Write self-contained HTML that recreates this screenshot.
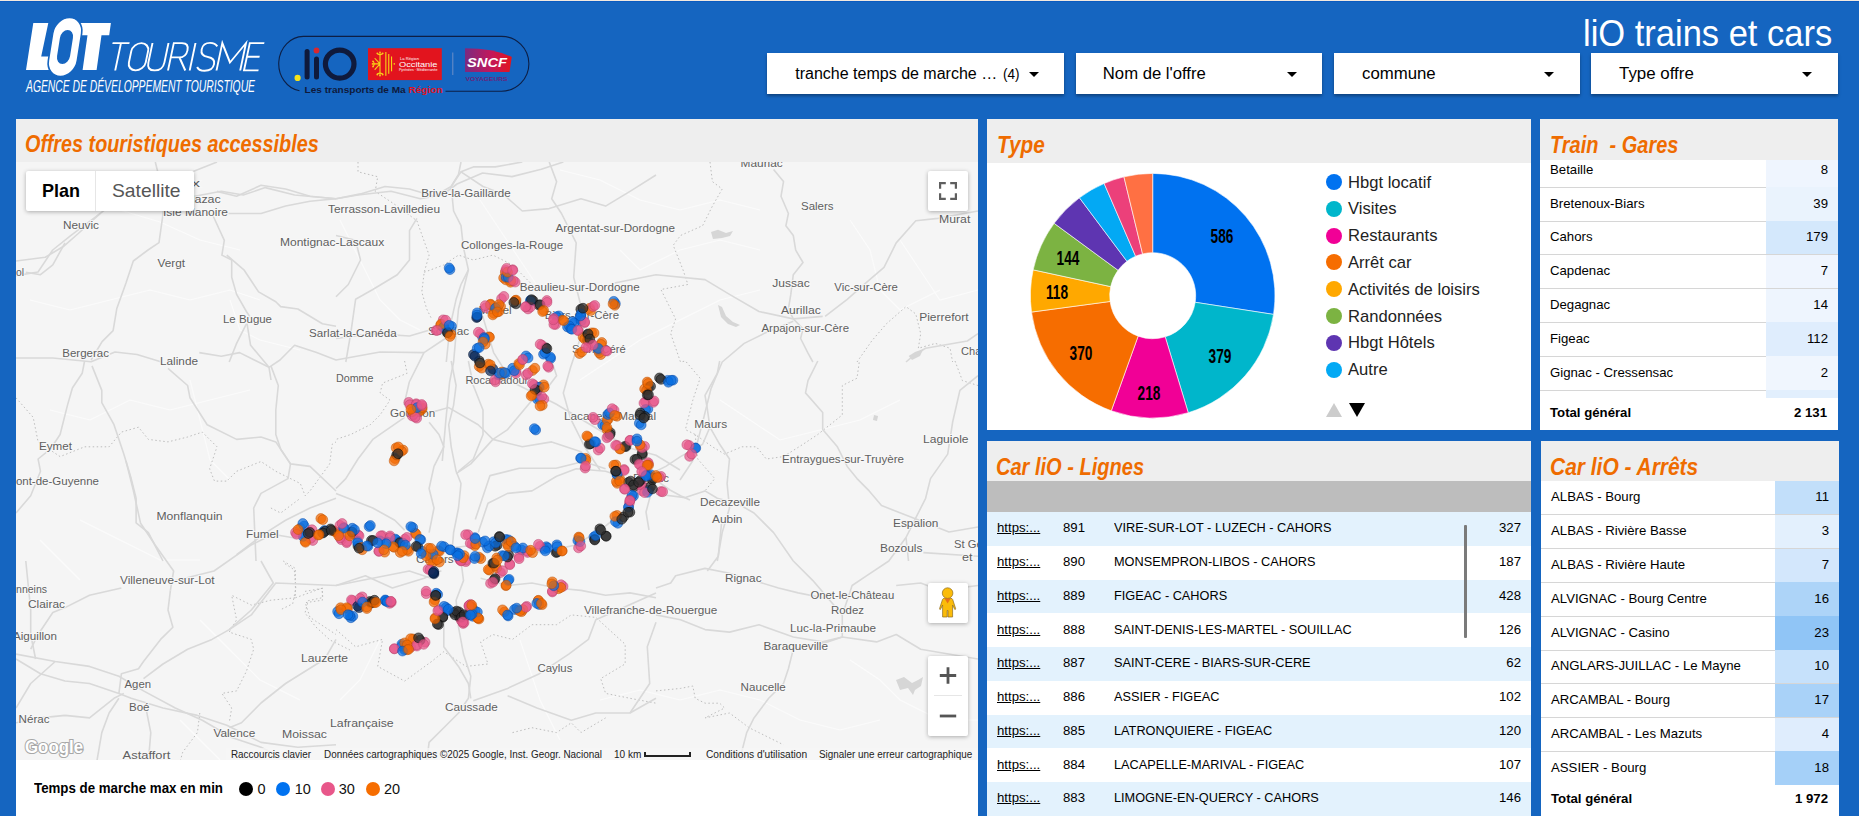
<!DOCTYPE html><html><head><meta charset="utf-8"><style>
*{margin:0;padding:0;box-sizing:border-box}
html,body{width:1859px;height:816px;overflow:hidden}
body{background:#1565c0;font-family:"Liberation Sans", sans-serif;position:relative;color:#000}
.a{position:absolute}
.topline{left:0;top:0;width:1859px;height:1px;background:#f2e9df}
.filt{position:absolute;top:53px;height:41px;background:#fff;box-shadow:0 2px 3px rgba(0,0,0,.35)}
.filt span{position:absolute;white-space:nowrap;line-height:1}
.arr{position:absolute;top:72px;width:0;height:0;border-left:5px solid transparent;border-right:5px solid transparent;border-top:5px solid #000}
.panel{position:absolute;background:#fff;overflow:hidden}
.phead{position:absolute;left:0;top:0;right:0;background:#eeeeee}
.ptitle{position:absolute;white-space:nowrap;color:#ef6c00;font-weight:bold;font-style:italic;line-height:1;transform-origin:0 0}
.t{position:absolute;white-space:nowrap;line-height:1;font-size:13.2px;color:#000}
.num{text-align:right}
.hl{position:absolute;height:1px;background:#d6d6d6}
.lbl{position:absolute;white-space:nowrap;line-height:1;transform-origin:0 0}
</style></head><body>
<div class="a topline"></div><div class="a" style="left:0;top:1px;width:1859px;height:1px;background:#0b5bc0"></div>

<svg class="a" style="left:0;top:0" width="560" height="110" viewBox="0 0 560 110">
<g fill="#fff">
<path d="M33.3,23.1 L48.3,23.1 L41.2,56.6 L56,56.6 L54.2,69.9 L26,69.9 Z"/>
<path d="M80,23.1 L110.9,23.1 L109.2,35.2 L101.5,35.2 L96.6,69.9 L82.6,69.9 L87.5,35.2 L78.3,35.2 Z"/>
</g>
<g transform="translate(65,47) skewX(-9)">
<rect x="-14.5" y="-29.5" width="29" height="59" rx="14.5" ry="16" fill="#fff" stroke="#1565c0" stroke-width="1.6"/>
<rect x="-6.5" y="-17" width="13" height="34" rx="6.5" ry="8" fill="#1565c0"/>
</g>
<g fill="none" stroke="#fff" stroke-width="1.9" stroke-linejoin="miter" transform="translate(0,0)">
<!-- TOURISME thin italic, cap height 43->70.4 -->
<g transform="translate(106.7,70.4) skewX(-12)">
<path d="M0,-27.3 H17 M8.5,-27.3 V0"/>
<rect x="20.5" y="-27.3" width="16.8" height="27.3" rx="8.4" ry="8"/>
<path d="M40,-27.3 V-8 Q40,0 48,0 Q56,0 56,-8 V-27.3"/>
<path d="M61.3,0 V-27.3 H69.5 Q76.5,-27.3 76.5,-20 Q76.5,-13 69.5,-13 H61.3 M70,-13 L78.6,0"/>
<path d="M83,-27.3 V0"/>
<path d="M105.5,-24 Q102.5,-27.5 97.5,-27.5 Q90.5,-27.5 90.5,-21 Q90.5,-15 98,-13.5 Q106,-12 106,-6.5 Q106,0.3 98,0.3 Q92,0.3 89.7,-3.5"/>
<path d="M109.8,0 V-27.3 L121.6,-8 L133.5,-27.3 V0"/>
<path d="M151.8,-27.3 H137.3 V0 H151.8 M137.3,-13.6 H150"/>
</g>
</g>
<text x="26" y="91.7" fill="#fff" font-family="Liberation Sans" font-style="italic" font-size="16" textLength="229" lengthAdjust="spacingAndGlyphs">AGENCE DE DÉVELOPPEMENT TOURISTIQUE</text>
<!-- pill -->
<path d="M445.5,91.2 H501.5 A27.4,27.4 0 0 0 501.5,36.4 H303.3 A25,27.4 0 0 0 299.5,90.8" fill="none" stroke="#0d1f45" stroke-width="1.1"/>
<circle cx="297.6" cy="77.9" r="3.1" fill="#f3e21b"/>
<rect x="304.6" y="48.9" width="5" height="30.5" rx="2.5" fill="#0f1a3c"/>
<rect x="314" y="56.5" width="5" height="23" rx="2.5" fill="#0f1a3c"/>
<circle cx="316.5" cy="50.5" r="2.9" fill="#d8282f"/>
<ellipse cx="339.7" cy="64.1" rx="14.3" ry="14" fill="none" stroke="#0f1a3c" stroke-width="5.2"/>
<rect x="368" y="48.2" width="73.8" height="31.9" fill="#e2141e"/>
<g stroke="#f7d117" stroke-width="1.1" fill="none" stroke-linecap="round">
<path d="M380,63.9 H373.5 M380,63.9 V53.5 M380,63.9 V74.3 M380,63.9 L375,58.5 M380,63.9 L375,69.3"/>
<path d="M373.5,61.5 Q375,63.9 373.5,66.3 M377.5,53.8 Q380,55.5 382.5,53.8 M377.5,74 Q380,72.3 382.5,74"/>
</g>
<g fill="#f7d117"><circle cx="373" cy="61.3" r="0.9"/><circle cx="372.6" cy="63.9" r="0.9"/><circle cx="373" cy="66.5" r="0.9"/>
<circle cx="377.3" cy="53.3" r="0.9"/><circle cx="380" cy="52.3" r="0.9"/><circle cx="382.7" cy="53.3" r="0.9"/>
<circle cx="377.3" cy="74.5" r="0.9"/><circle cx="380" cy="75.5" r="0.9"/><circle cx="382.7" cy="74.5" r="0.9"/>
<rect x="385.3" y="52" width="1.1" height="23.8"/><rect x="388.2" y="54" width="1.1" height="19.8"/><rect x="391" y="56.5" width="1.1" height="14.8"/><circle cx="394.3" cy="63.9" r="0.8"/></g>
<text x="400" y="60.3" fill="#fff" font-family="Liberation Sans" font-size="4.3" textLength="19" lengthAdjust="spacingAndGlyphs">La Région</text>
<text x="399" y="67" fill="#fff" font-family="Liberation Sans" font-size="7.6" textLength="38.4" lengthAdjust="spacingAndGlyphs">Occitanie</text>
<text x="399" y="71.3" fill="#fff" font-family="Liberation Sans" font-size="3.3" textLength="38.4" lengthAdjust="spacingAndGlyphs">Pyrénées · Méditerranée</text>
<rect x="452.3" y="52.5" width="1" height="22.5" fill="#6d8fc8"/>
<defs><linearGradient id="sg" x1="0" x2="1" y1="0" y2="0"><stop offset="0" stop-color="#7b2a80"/><stop offset="0.55" stop-color="#c2185b"/><stop offset="1" stop-color="#e3151c"/></linearGradient></defs>
<path d="M465,48.2 Q495,48.5 511.8,57 L509.5,72.1 H465 Z" fill="url(#sg)"/>
<text x="467" y="67" fill="#fff" font-family="Liberation Sans" font-weight="bold" font-style="italic" font-size="12" textLength="40" lengthAdjust="spacingAndGlyphs">SNCF</text>
<text x="465.5" y="80.5" fill="#6a1f7a" font-family="Liberation Sans" font-weight="bold" font-size="5.6" textLength="42" lengthAdjust="spacingAndGlyphs">VOYAGEURS</text>
<text x="304.6" y="92.8" fill="#0f1a3c" font-family="Liberation Sans" font-weight="bold" font-size="9.2" textLength="138" lengthAdjust="spacingAndGlyphs">Les transports de Ma <tspan fill="#e2141e">Région</tspan></text>
</svg>

<div class="lbl" style="left:1583px;top:15.5px;font-size:36px;color:#fff;transform:scaleX(0.958)">liO trains et cars</div>
<div class="filt" style="left:767px;width:297px"></div>
<div class="lbl" style="left:795.3px;top:66.4px;font-size:16px;color:#000">tranche temps de marche …</div>
<div class="arr" style="left:1029px"></div>
<div class="filt" style="left:1076px;width:246px"></div>
<div class="lbl" style="left:1102.8px;top:65.8px;font-size:16.7px;color:#000">Nom de l'offre</div>
<div class="arr" style="left:1287px"></div>
<div class="filt" style="left:1334px;width:246px"></div>
<div class="lbl" style="left:1362px;top:65.7px;font-size:16.8px;color:#000">commune</div>
<div class="arr" style="left:1544px"></div>
<div class="filt" style="left:1591px;width:247px"></div>
<div class="lbl" style="left:1619px;top:65.6px;font-size:16.9px;color:#000">Type offre</div>
<div class="arr" style="left:1802px"></div>
<div class="lbl" style="left:1003.3px;top:66px;font-size:15px;color:#000;transform:scaleX(0.9);transform-origin:0 0">(4)</div>
<div class="panel" style="left:987px;top:119px;width:544px;height:311px"><div class="phead" style="height:44px"></div></div>
<div class="ptitle" style="left:996.5px;top:132.5px;font-size:24.5px;transform:scaleX(0.848)">Type</div>
<svg class="a" style="left:1020px;top:165px" width="270" height="265" viewBox="1020 165 270 265"><path d="M1152.70,173.40 A122.3,122.3 0 0 1 1273.56,314.41 L1195.19,302.28 A43,43 0 0 0 1152.70,252.70 Z" fill="#0072f0" stroke="#fff" stroke-width="0.6"/><path d="M1273.56,314.41 A122.3,122.3 0 0 1 1188.25,412.72 L1165.20,336.84 A43,43 0 0 0 1195.19,302.28 Z" fill="#00b6cb" stroke="#fff" stroke-width="0.6"/><path d="M1188.25,412.72 A122.3,122.3 0 0 1 1111.27,410.77 L1138.13,336.16 A43,43 0 0 0 1165.20,336.84 Z" fill="#f10096" stroke="#fff" stroke-width="0.6"/><path d="M1111.27,410.77 A122.3,122.3 0 0 1 1031.50,312.09 L1110.09,301.46 A43,43 0 0 0 1138.13,336.16 Z" fill="#f66d00" stroke="#fff" stroke-width="0.6"/><path d="M1031.50,312.09 A122.3,122.3 0 0 1 1033.16,269.85 L1110.67,286.61 A43,43 0 0 0 1110.09,301.46 Z" fill="#ffa800" stroke="#fff" stroke-width="0.6"/><path d="M1033.16,269.85 A122.3,122.3 0 0 1 1054.13,223.30 L1118.05,270.24 A43,43 0 0 0 1110.67,286.61 Z" fill="#7cb342" stroke="#fff" stroke-width="0.6"/><path d="M1054.13,223.30 A122.3,122.3 0 0 1 1079.44,197.77 L1126.94,261.27 A43,43 0 0 0 1118.05,270.24 Z" fill="#5e35b1" stroke="#fff" stroke-width="0.6"/><path d="M1079.44,197.77 A122.3,122.3 0 0 1 1104.13,183.46 L1135.62,256.24 A43,43 0 0 0 1126.94,261.27 Z" fill="#03a9f4" stroke="#fff" stroke-width="0.6"/><path d="M1104.13,183.46 A122.3,122.3 0 0 1 1123.94,176.83 L1142.59,253.91 A43,43 0 0 0 1135.62,256.24 Z" fill="#ec407a" stroke="#fff" stroke-width="0.6"/><path d="M1123.94,176.83 A122.3,122.3 0 0 1 1152.70,173.40 L1152.70,252.70 A43,43 0 0 0 1142.59,253.91 Z" fill="#ff7043" stroke="#fff" stroke-width="0.6"/></svg>
<div class="lbl" style="left:1222px;top:236.8px;font-size:19.5px;font-weight:bold;color:#000;transform:translate(-50%,-50%) scaleX(0.70);transform-origin:50% 50%">586</div>
<div class="lbl" style="left:1220px;top:357px;font-size:19.5px;font-weight:bold;color:#000;transform:translate(-50%,-50%) scaleX(0.70);transform-origin:50% 50%">379</div>
<div class="lbl" style="left:1149px;top:393.8px;font-size:19.5px;font-weight:bold;color:#000;transform:translate(-50%,-50%) scaleX(0.70);transform-origin:50% 50%">218</div>
<div class="lbl" style="left:1080.5px;top:353.8px;font-size:19.5px;font-weight:bold;color:#000;transform:translate(-50%,-50%) scaleX(0.70);transform-origin:50% 50%">370</div>
<div class="lbl" style="left:1057px;top:292.8px;font-size:19.5px;font-weight:bold;color:#000;transform:translate(-50%,-50%) scaleX(0.70);transform-origin:50% 50%">118</div>
<div class="lbl" style="left:1068px;top:258.8px;font-size:19.5px;font-weight:bold;color:#000;transform:translate(-50%,-50%) scaleX(0.70);transform-origin:50% 50%">144</div>
<div class="a" style="left:1326px;top:174.0px;width:16px;height:16px;border-radius:50%;background:#0072f0"></div>
<div class="lbl" style="left:1348px;top:174.5px;font-size:16.6px;color:#222">Hbgt locatif</div>
<div class="a" style="left:1326px;top:200.8px;width:16px;height:16px;border-radius:50%;background:#00b6cb"></div>
<div class="lbl" style="left:1348px;top:201.3px;font-size:16.6px;color:#222">Visites</div>
<div class="a" style="left:1326px;top:227.6px;width:16px;height:16px;border-radius:50%;background:#f10096"></div>
<div class="lbl" style="left:1348px;top:228.1px;font-size:16.6px;color:#222">Restaurants</div>
<div class="a" style="left:1326px;top:254.4px;width:16px;height:16px;border-radius:50%;background:#f66d00"></div>
<div class="lbl" style="left:1348px;top:254.9px;font-size:16.6px;color:#222">Arrêt car</div>
<div class="a" style="left:1326px;top:281.2px;width:16px;height:16px;border-radius:50%;background:#ffa800"></div>
<div class="lbl" style="left:1348px;top:281.7px;font-size:16.6px;color:#222">Activités de loisirs</div>
<div class="a" style="left:1326px;top:308.0px;width:16px;height:16px;border-radius:50%;background:#7cb342"></div>
<div class="lbl" style="left:1348px;top:308.5px;font-size:16.6px;color:#222">Randonnées</div>
<div class="a" style="left:1326px;top:334.8px;width:16px;height:16px;border-radius:50%;background:#5e35b1"></div>
<div class="lbl" style="left:1348px;top:335.3px;font-size:16.6px;color:#222">Hbgt Hôtels</div>
<div class="a" style="left:1326px;top:361.6px;width:16px;height:16px;border-radius:50%;background:#03a9f4"></div>
<div class="lbl" style="left:1348px;top:362.1px;font-size:16.6px;color:#222">Autre</div>
<div class="a" style="left:1326px;top:403px;width:0;height:0;border-left:8px solid transparent;border-right:8px solid transparent;border-bottom:14px solid #ccc"></div>
<div class="a" style="left:1349px;top:403px;width:0;height:0;border-left:8px solid transparent;border-right:8px solid transparent;border-top:14px solid #000"></div>
<div class="panel" style="left:1540px;top:119px;width:298px;height:311px">
<div class="a" style="left:226px;top:34.4px;width:72px;height:33.8px;background:rgb(239,245,254)"></div>
<div class="t" style="left:10px;top:43.8px">Betaille</div>
<div class="t num" style="right:10px;top:43.8px">8</div>
<div class="hl" style="left:0;top:67.7px;width:298px"></div>
<div class="a" style="left:226px;top:68.2px;width:72px;height:33.8px;background:rgb(234,243,253)"></div>
<div class="t" style="left:10px;top:77.6px">Bretenoux-Biars</div>
<div class="t num" style="right:10px;top:77.6px">39</div>
<div class="hl" style="left:0;top:101.5px;width:298px"></div>
<div class="a" style="left:226px;top:102.0px;width:72px;height:33.8px;background:rgb(212,232,252)"></div>
<div class="t" style="left:10px;top:111.4px">Cahors</div>
<div class="t num" style="right:10px;top:111.4px">179</div>
<div class="hl" style="left:0;top:135.3px;width:298px"></div>
<div class="a" style="left:226px;top:135.8px;width:72px;height:33.8px;background:rgb(239,245,254)"></div>
<div class="t" style="left:10px;top:145.2px">Capdenac</div>
<div class="t num" style="right:10px;top:145.2px">7</div>
<div class="hl" style="left:0;top:169.1px;width:298px"></div>
<div class="a" style="left:226px;top:169.6px;width:72px;height:33.8px;background:rgb(238,245,254)"></div>
<div class="t" style="left:10px;top:179.0px">Degagnac</div>
<div class="t num" style="right:10px;top:179.0px">14</div>
<div class="hl" style="left:0;top:202.9px;width:298px"></div>
<div class="a" style="left:226px;top:203.4px;width:72px;height:33.8px;background:rgb(223,237,253)"></div>
<div class="t" style="left:10px;top:212.8px">Figeac</div>
<div class="t num" style="right:10px;top:212.8px">112</div>
<div class="hl" style="left:0;top:236.7px;width:298px"></div>
<div class="a" style="left:226px;top:237.2px;width:72px;height:33.8px;background:rgb(240,246,254)"></div>
<div class="t" style="left:10px;top:246.6px">Gignac - Cressensac</div>
<div class="t num" style="right:10px;top:246.6px">2</div>
<div class="hl" style="left:0;top:270.5px;width:298px"></div>
<div class="a" style="left:226px;top:271.0px;width:72px;height:33.8px;background:rgb(226,239,253)"></div>
<div class="phead" style="height:41px"></div>
<div class="a" style="left:0;top:278.6px;width:298px;height:40px;background:#fff"></div>
<div class="t" style="left:10px;top:287px;font-weight:bold">Total général</div>
<div class="t num" style="right:11px;top:287px;font-weight:bold">2 131</div>
</div>
<div class="ptitle" style="left:1549.5px;top:132.5px;font-size:24.5px;transform:scaleX(0.815)">Train&nbsp; - Gares</div>
<div class="panel" style="left:987px;top:441px;width:544px;height:380px">
<div class="phead" style="height:40px"></div>
<div class="a" style="left:0;top:40px;width:544px;height:31px;background:#bdbdbd"></div>
<div class="a" style="left:0;top:71.00px;width:544px;height:33.75px;background:#e3f2fd"></div>
<div class="t" style="left:10px;top:80.4px;text-decoration:underline">https:...</div>
<div class="t" style="left:76px;top:80.4px">891</div>
<div class="t" style="left:127px;top:80.4px;transform:scaleX(0.965);transform-origin:0 0">VIRE-SUR-LOT - LUZECH - CAHORS</div>
<div class="t num" style="right:10px;top:80.4px">327</div>
<div class="a" style="left:0;top:104.75px;width:544px;height:33.75px;background:#fff"></div>
<div class="t" style="left:10px;top:114.2px;text-decoration:underline">https:...</div>
<div class="t" style="left:76px;top:114.2px">890</div>
<div class="t" style="left:127px;top:114.2px;transform:scaleX(0.965);transform-origin:0 0">MONSEMPRON-LIBOS - CAHORS</div>
<div class="t num" style="right:10px;top:114.2px">187</div>
<div class="a" style="left:0;top:138.50px;width:544px;height:33.75px;background:#e3f2fd"></div>
<div class="t" style="left:10px;top:147.9px;text-decoration:underline">https:...</div>
<div class="t" style="left:76px;top:147.9px">889</div>
<div class="t" style="left:127px;top:147.9px;transform:scaleX(0.965);transform-origin:0 0">FIGEAC - CAHORS</div>
<div class="t num" style="right:10px;top:147.9px">428</div>
<div class="a" style="left:0;top:172.25px;width:544px;height:33.75px;background:#fff"></div>
<div class="t" style="left:10px;top:181.7px;text-decoration:underline">https:...</div>
<div class="t" style="left:76px;top:181.7px">888</div>
<div class="t" style="left:127px;top:181.7px;transform:scaleX(0.965);transform-origin:0 0">SAINT-DENIS-LES-MARTEL - SOUILLAC</div>
<div class="t num" style="right:10px;top:181.7px">126</div>
<div class="a" style="left:0;top:206.00px;width:544px;height:33.75px;background:#e3f2fd"></div>
<div class="t" style="left:10px;top:215.4px;text-decoration:underline">https:...</div>
<div class="t" style="left:76px;top:215.4px">887</div>
<div class="t" style="left:127px;top:215.4px;transform:scaleX(0.965);transform-origin:0 0">SAINT-CERE - BIARS-SUR-CERE</div>
<div class="t num" style="right:10px;top:215.4px">62</div>
<div class="a" style="left:0;top:239.75px;width:544px;height:33.75px;background:#fff"></div>
<div class="t" style="left:10px;top:249.1px;text-decoration:underline">https:...</div>
<div class="t" style="left:76px;top:249.1px">886</div>
<div class="t" style="left:127px;top:249.1px;transform:scaleX(0.965);transform-origin:0 0">ASSIER - FIGEAC</div>
<div class="t num" style="right:10px;top:249.1px">102</div>
<div class="a" style="left:0;top:273.50px;width:544px;height:33.75px;background:#e3f2fd"></div>
<div class="t" style="left:10px;top:282.9px;text-decoration:underline">https:...</div>
<div class="t" style="left:76px;top:282.9px">885</div>
<div class="t" style="left:127px;top:282.9px;transform:scaleX(0.965);transform-origin:0 0">LATRONQUIERE - FIGEAC</div>
<div class="t num" style="right:10px;top:282.9px">120</div>
<div class="a" style="left:0;top:307.25px;width:544px;height:33.75px;background:#fff"></div>
<div class="t" style="left:10px;top:316.6px;text-decoration:underline">https:...</div>
<div class="t" style="left:76px;top:316.6px">884</div>
<div class="t" style="left:127px;top:316.6px;transform:scaleX(0.965);transform-origin:0 0">LACAPELLE-MARIVAL - FIGEAC</div>
<div class="t num" style="right:10px;top:316.6px">107</div>
<div class="a" style="left:0;top:341.00px;width:544px;height:33.75px;background:#e3f2fd"></div>
<div class="t" style="left:10px;top:350.4px;text-decoration:underline">https:...</div>
<div class="t" style="left:76px;top:350.4px">883</div>
<div class="t" style="left:127px;top:350.4px;transform:scaleX(0.965);transform-origin:0 0">LIMOGNE-EN-QUERCY - CAHORS</div>
<div class="t num" style="right:10px;top:350.4px">146</div>
<div class="a" style="left:476.5px;top:84px;width:3px;height:113px;background:#7a7a7a;border-radius:1px"></div>
</div>
<div class="ptitle" style="left:995.6px;top:454.5px;font-size:24.5px;transform:scaleX(0.818)">Car liO - Lignes</div>
<div class="panel" style="left:1541px;top:441px;width:298px;height:380px">
<div class="phead" style="height:40px"></div>
<div class="a" style="left:234px;top:40.0px;width:64px;height:33.8px;background:rgb(194,223,250)"></div>
<div class="t" style="left:10px;top:49.4px">ALBAS - Bourg</div>
<div class="t num" style="right:10px;top:49.4px">11</div>
<div class="hl" style="left:0;top:73.3px;width:298px"></div>
<div class="a" style="left:234px;top:73.8px;width:64px;height:33.8px;background:rgb(227,240,253)"></div>
<div class="t" style="left:10px;top:83.2px">ALBAS - Rivière Basse</div>
<div class="t num" style="right:10px;top:83.2px">3</div>
<div class="hl" style="left:0;top:107.1px;width:298px"></div>
<div class="a" style="left:234px;top:107.6px;width:64px;height:33.8px;background:rgb(211,231,252)"></div>
<div class="t" style="left:10px;top:117.0px">ALBAS - Rivière Haute</div>
<div class="t num" style="right:10px;top:117.0px">7</div>
<div class="hl" style="left:0;top:140.9px;width:298px"></div>
<div class="a" style="left:234px;top:141.4px;width:64px;height:33.8px;background:rgb(173,212,248)"></div>
<div class="t" style="left:10px;top:150.8px">ALVIGNAC - Bourg Centre</div>
<div class="t num" style="right:10px;top:150.8px">16</div>
<div class="hl" style="left:0;top:174.7px;width:298px"></div>
<div class="a" style="left:234px;top:175.2px;width:64px;height:33.8px;background:rgb(144,197,246)"></div>
<div class="t" style="left:10px;top:184.6px">ALVIGNAC - Casino</div>
<div class="t num" style="right:10px;top:184.6px">23</div>
<div class="hl" style="left:0;top:208.5px;width:298px"></div>
<div class="a" style="left:234px;top:209.0px;width:64px;height:33.8px;background:rgb(198,225,251)"></div>
<div class="t" style="left:10px;top:218.4px">ANGLARS-JUILLAC - Le Mayne</div>
<div class="t num" style="right:10px;top:218.4px">10</div>
<div class="hl" style="left:0;top:242.3px;width:298px"></div>
<div class="a" style="left:234px;top:242.8px;width:64px;height:33.8px;background:rgb(169,210,248)"></div>
<div class="t" style="left:10px;top:252.2px">ARCAMBAL - Bourg</div>
<div class="t num" style="right:10px;top:252.2px">17</div>
<div class="hl" style="left:0;top:276.1px;width:298px"></div>
<div class="a" style="left:234px;top:276.6px;width:64px;height:33.8px;background:rgb(223,237,253)"></div>
<div class="t" style="left:10px;top:286.0px">ARCAMBAL - Les Mazuts</div>
<div class="t num" style="right:10px;top:286.0px">4</div>
<div class="hl" style="left:0;top:309.9px;width:298px"></div>
<div class="a" style="left:234px;top:310.4px;width:64px;height:33.8px;background:rgb(165,208,248)"></div>
<div class="t" style="left:10px;top:319.8px">ASSIER - Bourg</div>
<div class="t num" style="right:10px;top:319.8px">18</div>
<div class="t" style="left:10px;top:351px;font-weight:bold">Total général</div>
<div class="t num" style="right:11px;top:351px;font-weight:bold">1 972</div>
</div>
<div class="ptitle" style="left:1549.5px;top:454.5px;font-size:24.5px;transform:scaleX(0.855)">Car liO - Arrêts</div>
<div class="panel" style="left:16px;top:119px;width:962px;height:700px"><div class="phead" style="height:43px"></div></div>
<div class="ptitle" style="left:25px;top:132.3px;font-size:24.5px;transform:scaleX(0.809)">Offres touristiques accessibles</div>
<svg class="a" style="left:16px;top:162px" width="962" height="598" viewBox="16 162 962 598"><rect x="16" y="162" width="962" height="598" fill="#f5f5f5"/><path d="M40.0,190.0 L80.0,200.0 L120.0,210.0 L160.0,222.0 L200.0,240.0 L240.0,250.0" fill="none" stroke="#fbfbfb" stroke-width="1.1"/><path d="M30.0,300.0 L70.0,310.0 L110.0,300.0 L150.0,290.0 L190.0,300.0 L230.0,290.0 L260.0,300.0" fill="none" stroke="#fbfbfb" stroke-width="1.1"/><path d="M50.0,410.0 L90.0,420.0 L130.0,400.0 L170.0,410.0 L210.0,400.0 L250.0,390.0" fill="none" stroke="#fbfbfb" stroke-width="1.1"/><path d="M190.0,380.0 L200.0,420.0 L210.0,460.0 L230.0,480.0" fill="none" stroke="#fbfbfb" stroke-width="1.1"/><path d="M230.0,300.0 L240.0,330.0 L260.0,340.0 L300.0,350.0" fill="none" stroke="#fbfbfb" stroke-width="1.1"/><path d="M340.0,220.0 L360.0,260.0 L380.0,300.0 L400.0,320.0 L420.0,330.0" fill="none" stroke="#fbfbfb" stroke-width="1.1"/><path d="M480.0,200.0 L500.0,230.0 L520.0,260.0 L540.0,290.0" fill="none" stroke="#fbfbfb" stroke-width="1.1"/><path d="M580.0,380.0 L610.0,360.0 L640.0,340.0 L680.0,320.0 L720.0,300.0 L760.0,290.0" fill="none" stroke="#fbfbfb" stroke-width="1.1"/><path d="M720.0,400.0 L750.0,420.0 L780.0,440.0 L820.0,430.0 L860.0,420.0 L900.0,400.0" fill="none" stroke="#fbfbfb" stroke-width="1.1"/><path d="M850.0,220.0 L870.0,250.0 L880.0,290.0 L900.0,310.0 L940.0,290.0" fill="none" stroke="#fbfbfb" stroke-width="1.1"/><path d="M520.0,640.0 L540.0,700.0 L560.0,740.0" fill="none" stroke="#fbfbfb" stroke-width="1.1"/><path d="M380.0,640.0 L360.0,680.0 L340.0,700.0" fill="none" stroke="#fbfbfb" stroke-width="1.1"/><path d="M600.0,700.0 L640.0,690.0 L680.0,700.0 L720.0,690.0 L760.0,700.0 L800.0,720.0 L840.0,730.0 L880.0,720.0" fill="none" stroke="#fbfbfb" stroke-width="1.1"/><path d="M850.0,660.0 L880.0,680.0 L900.0,700.0 L940.0,720.0 L978.0,720.0" fill="none" stroke="#fbfbfb" stroke-width="1.1"/><path d="M80.0,520.0 L120.0,540.0 L160.0,560.0 L200.0,560.0" fill="none" stroke="#fbfbfb" stroke-width="1.1"/><path d="M40.0,540.0 L60.0,560.0 L80.0,580.0" fill="none" stroke="#fbfbfb" stroke-width="1.1"/><path d="M200.0,620.0 L230.0,650.0 L260.0,680.0 L300.0,700.0" fill="none" stroke="#fbfbfb" stroke-width="1.1"/><path d="M180.0,720.0 L200.0,740.0 L220.0,760.0" fill="none" stroke="#fbfbfb" stroke-width="1.1"/><path d="M560.0,170.0 L600.0,180.0 L640.0,200.0 L680.0,210.0 L720.0,200.0 L760.0,210.0" fill="none" stroke="#fbfbfb" stroke-width="1.1"/><path d="M620.0,250.0 L640.0,270.0 L680.0,250.0 L720.0,240.0 L760.0,250.0" fill="none" stroke="#fbfbfb" stroke-width="1.1"/><path d="M900.0,240.0 L920.0,270.0 L940.0,300.0 L978.0,290.0" fill="none" stroke="#fbfbfb" stroke-width="1.1"/><path d="M656.0,690.9 L680.5,688.4 L692.8,686.0 L695.2,698.3 L705.0,703.2 L719.7,703.2 L724.6,708.0 L705.0,717.9 L729.5,713.0 L749.1,727.7 L758.9,732.6 L783.5,744.8" fill="none" stroke="#bdbdbd" stroke-width="1" stroke-dasharray="1.5,2.5"/><path d="M336.0,629.6 L355.6,646.8 L382.6,639.4 L377.7,666.4 L404.6,681.1 L431.6,661.5 L443.8,651.7 L465.9,666.4 L488.0,664.0 L480.6,641.9 L492.9,634.5 L512.5,639.4 L532.0,624.7 L556.6,624.7 L571.3,614.9 L595.8,617.4 L625.2,644.3 L625.2,663.9 L600.7,678.6 L605.6,693.4 L630.0,698.3 L656.0,703.2" fill="none" stroke="#bdbdbd" stroke-width="1" stroke-dasharray="1.5,2.5"/><path d="M512.5,732.6 L532.0,727.7 L556.6,732.6 L571.3,722.8 L581.0,732.6 L605.6,717.9" fill="none" stroke="#bdbdbd" stroke-width="1" stroke-dasharray="1.5,2.5"/><path d="M283.2,561.0 L295.4,568.4 L295.4,597.8 L270.9,600.2 L251.3,605.1 L231.7,595.3 L236.6,619.8 L229.2,632.1 L251.3,639.4 L253.7,649.2 L246.4,671.3 L236.6,690.9 L221.9,693.4 L231.7,708.0 L229.2,722.8" fill="none" stroke="#bdbdbd" stroke-width="1" stroke-dasharray="1.5,2.5"/><path d="M295.4,597.8 L322.4,588.0 L322.4,600.2 L305.2,602.7 L310.0,617.4 L336.0,634.5" fill="none" stroke="#bdbdbd" stroke-width="1" stroke-dasharray="1.5,2.5"/><path d="M199.8,713.0 L197.4,732.6 L182.7,752.2 L180.2,761.0" fill="none" stroke="#bdbdbd" stroke-width="1" stroke-dasharray="1.5,2.5"/><path d="M404.6,361.0 L407.1,373.3 L382.6,383.1 L380.1,392.9 L390.0,400.2 L380.1,414.9 L370.3,424.7 L350.7,434.5 L336.0,439.4" fill="none" stroke="#bdbdbd" stroke-width="1" stroke-dasharray="1.5,2.5"/><path d="M16.0,397.8 L33.2,417.4 L38.1,441.9 L60.1,456.6 L84.6,446.8 L109.1,446.8 L121.4,432.1 L138.5,427.2 L148.4,439.4 L168.0,441.9 L187.6,437.0 L202.3,432.1 L217.0,446.8 L209.6,468.8 L214.5,481.1 L226.8,481.1 L236.6,471.3 L261.0,461.5 L275.8,471.3 L300.3,483.5 L305.2,495.8 L310.0,490.9 L329.7,463.9 L332.2,444.3 L336.0,441.9" fill="none" stroke="#bdbdbd" stroke-width="1" stroke-dasharray="1.5,2.5"/><path d="M270.9,508.0 L280.7,513.0 L300.3,498.3" fill="none" stroke="#bdbdbd" stroke-width="1" stroke-dasharray="1.5,2.5"/><path d="M358.0,162.0 L358.0,171.8 L377.7,176.7 L375.2,191.4 L397.3,206.1 L416.9,220.8 L429.1,255.1 L424.2,272.3 L421.8,291.9 L426.7,309.0 L431.6,318.9" fill="none" stroke="#bdbdbd" stroke-width="1" stroke-dasharray="1.5,2.5"/><path d="M424.2,272.3 L443.8,264.9 L458.5,255.1 L473.3,260.0 L492.9,255.1 L512.5,264.9 L532.0,284.5" fill="none" stroke="#bdbdbd" stroke-width="1" stroke-dasharray="1.5,2.5"/><path d="M710.0,162.0 L712.4,181.6 L722.2,189.0 L712.4,206.1 L702.6,225.7 L680.5,235.5 L673.2,245.3 L683.0,269.8 L687.9,284.5 L660.9,289.5 L665.8,299.3 L675.6,318.9 L670.7,333.6 L680.5,362.0 L685.4,361.0 L700.1,378.2 L692.8,400.2 L685.4,429.6 L695.2,434.5 L712.4,446.8 L724.6,454.1 L741.8,446.8 L756.5,446.8 L766.3,459.0 L783.5,456.6 L803.0,444.3 L817.8,434.5 L842.3,414.9 L842.3,385.5 L857.0,378.2 L859.4,361.0" fill="none" stroke="#bdbdbd" stroke-width="1" stroke-dasharray="1.5,2.5"/><path d="M695.2,434.5 L697.7,459.0 L714.8,478.6 L705.0,490.9" fill="none" stroke="#bdbdbd" stroke-width="1" stroke-dasharray="1.5,2.5"/><path d="M857.0,362.0 L871.7,341.0 L886.4,323.8 L906.0,306.6 L915.8,314.0 L920.7,333.6 L918.3,348.3 L935.4,343.4 L950.1,348.3 L952.6,362.0" fill="none" stroke="#bdbdbd" stroke-width="1" stroke-dasharray="1.5,2.5"/><path d="M955.0,361.0 L962.4,380.6 L978.0,385.5" fill="none" stroke="#bdbdbd" stroke-width="1" stroke-dasharray="1.5,2.5"/><path d="M285.0,563.7 L294.3,569.8 L295.8,588.4 L292.7,603.8 L280.0,610.0" fill="none" stroke="#bdbdbd" stroke-width="1" stroke-dasharray="1.5,2.5"/><path d="M305.0,591.4 L322.0,588.4 L322.8,597.6 L308.2,600.7 L305.0,613.0 L315.9,627.0 L330.0,640.0 L350.0,650.0" fill="none" stroke="#bdbdbd" stroke-width="1" stroke-dasharray="1.5,2.5"/><path d="M656.0,588.0 L670.7,583.0 L675.6,575.7 L705.0,568.4 L729.5,573.3 L754.0,580.6 L778.5,588.0 L798.2,592.9 L822.7,597.8" fill="none" stroke="#d9d9d9" stroke-width="1.6" stroke-linejoin="round"/><path d="M656.0,614.9 L680.5,619.8 L705.0,629.6 L729.5,632.1 L759.0,624.7 L793.3,637.0 L822.7,641.9 L842.3,637.0 L876.6,641.9 L896.2,634.5 L920.7,649.2 L978.0,659.0" fill="none" stroke="#d9d9d9" stroke-width="1.6" stroke-linejoin="round"/><path d="M842.3,637.0 L827.6,641.9 L793.3,649.2 L788.4,668.8 L783.5,683.5 L768.7,698.3 L754.0,717.9 L746.7,732.6 L739.3,761.0" fill="none" stroke="#d9d9d9" stroke-width="1.6" stroke-linejoin="round"/><path d="M842.3,637.0 L842.3,614.9 L852.1,585.5 L866.8,575.7 L888.8,561.0 L906.0,537.5" fill="none" stroke="#d9d9d9" stroke-width="1.6" stroke-linejoin="round"/><path d="M896.2,585.5 L920.7,583.0 L940.3,590.4 L978.0,585.5" fill="none" stroke="#d9d9d9" stroke-width="1.6" stroke-linejoin="round"/><path d="M793.3,561.0 L812.9,580.6 L827.6,597.8 L842.3,614.9" fill="none" stroke="#d9d9d9" stroke-width="1.6" stroke-linejoin="round"/><path d="M656.0,494.0 L685.3,497.6 L705.0,490.9 L717.3,498.3 L736.9,503.2" fill="none" stroke="#d9d9d9" stroke-width="1.6" stroke-linejoin="round"/><path d="M461.0,561.0 L463.5,580.6 L456.1,600.2 L458.5,627.2 L463.5,654.1 L470.8,676.2 L468.4,698.3 L458.5,713.0 L443.8,727.7 L429.1,742.4 L426.7,761.0" fill="none" stroke="#d9d9d9" stroke-width="1.6" stroke-linejoin="round"/><path d="M443.8,622.3 L443.8,646.8 L458.5,666.4 L468.4,683.5 L470.8,698.3" fill="none" stroke="#d9d9d9" stroke-width="1.6" stroke-linejoin="round"/><path d="M336.0,585.5 L365.4,575.7 L392.4,588.0 L424.2,578.2 L441.4,570.8" fill="none" stroke="#d9d9d9" stroke-width="1.6" stroke-linejoin="round"/><path d="M480.6,578.2 L507.6,585.5 L532.0,583.0 L556.6,588.0 L581.0,590.4 L605.6,595.3 L630.0,592.9 L656.0,597.8" fill="none" stroke="#d9d9d9" stroke-width="1.6" stroke-linejoin="round"/><path d="M473.3,700.7 L507.6,688.4 L539.4,673.7 L568.8,654.1 L588.4,639.4 L595.8,619.8 L617.9,610.0 L656.0,592.9" fill="none" stroke="#d9d9d9" stroke-width="1.6" stroke-linejoin="round"/><path d="M507.6,695.8 L537.0,708.0 L571.3,720.3 L595.8,713.0 L630.0,713.0 L656.0,698.3" fill="none" stroke="#d9d9d9" stroke-width="1.6" stroke-linejoin="round"/><path d="M656.0,622.3 L647.3,646.8 L649.7,683.5 L630.0,713.0" fill="none" stroke="#d9d9d9" stroke-width="1.6" stroke-linejoin="round"/><path d="M170.4,590.4 L168.0,610.0 L172.9,627.2 L160.6,639.4 L143.5,661.5 L138.5,668.8 L121.4,673.7 L118.9,693.4" fill="none" stroke="#d9d9d9" stroke-width="1.6" stroke-linejoin="round"/><path d="M143.5,678.6 L163.0,664.0 L187.6,649.2 L212.0,639.4 L229.2,629.6 L251.3,614.9 L275.8,583.0 L336.0,585.5 L372.6,578.3 L409.3,571.0 L431.3,578.3" fill="none" stroke="#d9d9d9" stroke-width="1.6" stroke-linejoin="round"/><path d="M16.0,659.0 L40.5,673.7 L65.0,681.0 L89.5,683.5 L118.9,693.4 L131.2,698.3 L163.0,708.0 L197.4,715.4 L226.8,725.2 L261.0,742.4 L297.9,747.3 L336.0,744.8" fill="none" stroke="#d9d9d9" stroke-width="1.6" stroke-linejoin="round"/><path d="M16.0,654.1 L55.2,661.5 L89.5,666.4 L118.9,676.2 L143.5,690.9 L175.3,708.0 L202.3,720.3 L231.7,737.5 L261.0,747.3 L275.8,754.6" fill="none" stroke="#d9d9d9" stroke-width="1.6" stroke-linejoin="round"/><path d="M25.8,561.0 L30.7,610.0 L30.7,634.5 L35.6,659.0" fill="none" stroke="#d9d9d9" stroke-width="1.6" stroke-linejoin="round"/><path d="M16.0,708.0 L30.7,683.5 L55.2,661.5" fill="none" stroke="#d9d9d9" stroke-width="1.6" stroke-linejoin="round"/><path d="M121.4,588.0 L89.5,595.3 L65.0,607.6 L52.8,612.5 L38.1,634.5 L30.7,649.2" fill="none" stroke="#d9d9d9" stroke-width="1.6" stroke-linejoin="round"/><path d="M16.0,722.8 L40.5,717.9 L65.0,715.4 L89.5,717.9 L114.0,698.3 L123.8,693.4" fill="none" stroke="#d9d9d9" stroke-width="1.6" stroke-linejoin="round"/><path d="M118.9,698.3 L109.1,713.0 L101.8,732.6 L96.9,761.0" fill="none" stroke="#d9d9d9" stroke-width="1.6" stroke-linejoin="round"/><path d="M145.9,708.0 L150.8,732.6 L148.4,761.0" fill="none" stroke="#d9d9d9" stroke-width="1.6" stroke-linejoin="round"/><path d="M336.0,639.4 L324.8,659.0 L285.6,683.5 L261.0,703.0 L241.5,722.8 L229.2,727.7" fill="none" stroke="#d9d9d9" stroke-width="1.6" stroke-linejoin="round"/><path d="M261.0,561.0 L273.3,583.0 L251.3,610.0 L229.2,629.6" fill="none" stroke="#d9d9d9" stroke-width="1.6" stroke-linejoin="round"/><path d="M719.7,361.0 L717.3,373.3 L705.0,395.3 L707.5,410.0 L709.9,427.2 L702.6,444.3 L680.5,456.6 L665.8,466.4 L656.0,471.3" fill="none" stroke="#d9d9d9" stroke-width="1.6" stroke-linejoin="round"/><path d="M709.9,427.2 L719.7,444.3 L729.5,459.0 L727.1,483.5 L729.5,508.0 L722.2,532.6 L717.3,561.0" fill="none" stroke="#d9d9d9" stroke-width="1.6" stroke-linejoin="round"/><path d="M817.8,361.0 L808.0,380.6 L805.5,392.9 L822.7,412.5 L822.7,429.6 L837.4,446.8 L847.2,466.4 L857.0,478.6 L869.2,490.9 L881.5,505.6 L913.4,517.9 L949.0,532.0 L978.0,527.0" fill="none" stroke="#d9d9d9" stroke-width="1.6" stroke-linejoin="round"/><path d="M978.0,375.7 L959.9,390.4 L952.6,422.3 L947.7,454.1 L930.5,478.6 L925.6,498.3 L915.8,517.9 L906.0,537.5 L908.5,561.0" fill="none" stroke="#d9d9d9" stroke-width="1.6" stroke-linejoin="round"/><path d="M736.9,503.2 L754.0,513.0 L773.6,532.6 L793.3,561.0" fill="none" stroke="#d9d9d9" stroke-width="1.6" stroke-linejoin="round"/><path d="M451.2,361.0 L456.1,385.5 L453.6,405.1 L448.7,424.7 L451.2,446.8 L456.1,471.3 L461.0,483.5 L458.5,508.0 L453.6,532.6 L451.2,561.0" fill="none" stroke="#d9d9d9" stroke-width="1.6" stroke-linejoin="round"/><path d="M468.4,361.0 L473.3,385.5 L483.0,410.0 L483.0,434.5 L473.3,459.0 L458.5,471.3" fill="none" stroke="#d9d9d9" stroke-width="1.6" stroke-linejoin="round"/><path d="M421.8,414.9 L448.7,407.6 L478.2,424.7 L492.9,439.4 L522.3,446.8 L551.7,441.9 L581.0,451.7 L590.9,463.9 L605.6,468.8" fill="none" stroke="#d9d9d9" stroke-width="1.6" stroke-linejoin="round"/><path d="M532.0,400.2 L507.6,429.6 L492.9,439.4 L470.8,463.9 L456.1,473.7" fill="none" stroke="#d9d9d9" stroke-width="1.6" stroke-linejoin="round"/><path d="M404.6,417.4 L372.8,439.4 L358.0,459.0 L345.8,478.6 L336.0,488.5" fill="none" stroke="#d9d9d9" stroke-width="1.6" stroke-linejoin="round"/><path d="M429.1,422.3 L439.0,434.5 L443.8,446.8 L434.0,466.4 L429.1,488.5 L434.0,508.0 L429.1,532.6" fill="none" stroke="#d9d9d9" stroke-width="1.6" stroke-linejoin="round"/><path d="M336.0,493.4 L372.8,508.0 L394.8,520.3 L404.6,530.1" fill="none" stroke="#d9d9d9" stroke-width="1.6" stroke-linejoin="round"/><path d="M478.2,532.6 L488.0,503.2 L507.6,493.4 L532.0,490.9 L556.6,476.2 L576.2,468.8 L605.6,471.3 L620.3,476.2" fill="none" stroke="#d9d9d9" stroke-width="1.6" stroke-linejoin="round"/><path d="M551.7,361.0 L556.6,375.7 L549.2,385.5" fill="none" stroke="#d9d9d9" stroke-width="1.6" stroke-linejoin="round"/><path d="M773.6,169.4 L783.5,181.6 L781.0,196.3 L788.4,213.5 L785.9,225.7 L793.3,235.5 L795.7,250.2 L803.0,262.5 L793.3,274.7 L790.8,294.4 L788.4,309.0 L793.3,318.9 L803.0,328.7 L800.6,338.5 L808.0,353.2 L812.9,362.0" fill="none" stroke="#d9d9d9" stroke-width="1.6" stroke-linejoin="round"/><path d="M822.7,316.4 L793.3,318.9 L759.0,311.5 L729.5,294.4 L705.0,279.6 L656.0,274.7 L614.6,283.0" fill="none" stroke="#d9d9d9" stroke-width="1.6" stroke-linejoin="round"/><path d="M825.1,316.4 L847.2,299.3 L866.8,282.1 L884.0,267.4 L896.2,242.9 L915.8,220.8 L937.9,218.4 L978.0,211.0" fill="none" stroke="#d9d9d9" stroke-width="1.6" stroke-linejoin="round"/><path d="M793.3,321.3 L763.8,333.6 L744.2,343.4 L722.2,362.0 L710.9,389.0 L703.6,418.4 L692.6,461.0 L680.0,480.0" fill="none" stroke="#d9d9d9" stroke-width="1.6" stroke-linejoin="round"/><path d="M978.0,333.6 L967.3,341.0 L925.6,348.3 L913.4,355.6 L906.0,362.0" fill="none" stroke="#d9d9d9" stroke-width="1.6" stroke-linejoin="round"/><path d="M461.0,162.0 L458.5,174.3 L451.2,186.5 L453.6,211.0 L461.0,225.7 L463.5,247.8 L468.4,269.8 L463.5,289.5 L458.5,309.0 L456.1,333.6 L453.6,362.0 L449.6,382.0 L446.0,418.6 L442.3,461.0" fill="none" stroke="#d9d9d9" stroke-width="1.6" stroke-linejoin="round"/><path d="M468.4,269.8 L461.0,284.5 L456.1,299.3 L451.2,321.3 L448.7,338.5 L446.3,362.0" fill="none" stroke="#d9d9d9" stroke-width="1.6" stroke-linejoin="round"/><path d="M336.0,198.8 L360.5,193.9 L385.0,186.5 L409.5,189.0 L434.0,196.3 L451.2,186.5 L461.0,171.8 L473.3,166.9 L495.3,166.9 L522.3,162.0" fill="none" stroke="#d9d9d9" stroke-width="1.6" stroke-linejoin="round"/><path d="M461.0,171.8 L483.0,186.5 L502.7,193.9 L522.3,211.0 L549.2,208.6 L581.0,198.8 L605.6,206.1 L630.0,191.4 L656.0,175.0" fill="none" stroke="#d9d9d9" stroke-width="1.6" stroke-linejoin="round"/><path d="M549.2,162.0 L556.6,181.6 L551.7,198.8 L561.5,213.5 L576.2,242.9 L573.7,277.2 L585.3,323.3" fill="none" stroke="#d9d9d9" stroke-width="1.6" stroke-linejoin="round"/><path d="M416.9,218.4 L409.5,230.6 L409.5,260.0 L397.3,274.7 L372.8,289.5 L355.6,299.3 L350.7,333.6 L345.8,362.0" fill="none" stroke="#d9d9d9" stroke-width="1.6" stroke-linejoin="round"/><path d="M336.0,235.5 L355.6,240.4 L360.5,260.0 L348.3,284.5 L336.0,296.8" fill="none" stroke="#d9d9d9" stroke-width="1.6" stroke-linejoin="round"/><path d="M336.0,338.5 L372.8,333.6 L409.5,336.0 L434.0,328.7 L446.0,338.0" fill="none" stroke="#d9d9d9" stroke-width="1.6" stroke-linejoin="round"/><path d="M84.6,361.0 L82.2,373.3 L72.4,388.0 L67.5,405.1 L60.1,434.5 L50.3,449.2 L38.1,459.0 L40.5,471.3 L30.7,495.8 L16.0,513.0" fill="none" stroke="#d9d9d9" stroke-width="1.6" stroke-linejoin="round"/><path d="M92.0,365.9 L101.8,390.4 L101.8,402.7 L114.0,424.7 L123.8,454.1 L131.2,478.6 L136.1,498.3 L136.1,522.8 L148.4,532.6 L163.0,561.0" fill="none" stroke="#d9d9d9" stroke-width="1.6" stroke-linejoin="round"/><path d="M168.0,368.4 L187.6,385.5 L190.0,397.8 L207.2,424.7 L236.6,439.4 L261.0,437.0 L275.8,441.9 L290.5,463.9 L310.0,466.4 L336.0,491.0" fill="none" stroke="#d9d9d9" stroke-width="1.6" stroke-linejoin="round"/><path d="M270.9,365.9 L278.3,385.5 L275.8,410.0 L275.8,434.5 L280.7,449.2 L290.5,463.9" fill="none" stroke="#d9d9d9" stroke-width="1.6" stroke-linejoin="round"/><path d="M336.0,498.3 L310.0,508.0 L285.6,520.3 L266.0,532.6 L236.6,554.6" fill="none" stroke="#d9d9d9" stroke-width="1.6" stroke-linejoin="round"/><path d="M256.0,561.0 L253.7,508.0 L261.0,493.4 L288.0,478.6 L290.5,463.9" fill="none" stroke="#d9d9d9" stroke-width="1.6" stroke-linejoin="round"/><path d="M192.5,171.8 L217.0,162.0" fill="none" stroke="#d9d9d9" stroke-width="1.6" stroke-linejoin="round"/><path d="M217.0,191.4 L236.6,196.3 L261.0,185.3 L285.6,189.0 L310.0,196.3 L336.0,198.8" fill="none" stroke="#d9d9d9" stroke-width="1.6" stroke-linejoin="round"/><path d="M226.8,213.5 L261.0,213.5 L285.6,206.0 L310.0,201.2 L336.0,198.8" fill="none" stroke="#d9d9d9" stroke-width="1.6" stroke-linejoin="round"/><path d="M226.8,255.1 L243.9,269.8 L258.6,291.9 L275.8,301.7 L280.7,306.6 L297.9,309.0 L322.4,323.8 L336.0,326.2" fill="none" stroke="#d9d9d9" stroke-width="1.6" stroke-linejoin="round"/><path d="M65.0,242.9 L52.8,264.9 L40.5,274.7 L25.8,272.3" fill="none" stroke="#d9d9d9" stroke-width="1.6" stroke-linejoin="round"/><path d="M246.4,323.8 L236.6,343.4 L229.2,362.0" fill="none" stroke="#d9d9d9" stroke-width="1.6" stroke-linejoin="round"/><path d="M647.0,484.0 L650.0,497.0 L646.0,512.0 L649.0,530.0" fill="none" stroke="#d9d9d9" stroke-width="1.6" stroke-linejoin="round"/><path d="M660.0,483.0 L670.0,490.0 L681.0,496.0 L690.0,500.0" fill="none" stroke="#d9d9d9" stroke-width="1.6" stroke-linejoin="round"/><path d="M91.1,360.0 L102.1,341.6 L113.1,330.6 L116.8,308.6 L126.0,283.0 L133.3,261.0 L148.0,250.0 L159.0,242.6 L162.6,217.0 L164.5,198.7 L157.1,169.3 L155.3,162.0" fill="none" stroke="#d9d9d9" stroke-width="1.6" stroke-linejoin="round"/><path d="M16.0,358.0 L52.7,358.0 L91.1,361.8 L115.0,352.0 L137.0,354.5 L160.8,361.8" fill="none" stroke="#d9d9d9" stroke-width="1.6" stroke-linejoin="round"/><path d="M199.3,352.6 L221.3,356.3 L239.6,352.6 L254.3,360.0 L269.0,367.3 L280.0,360.0 L294.6,345.3 L316.6,352.6 L336.0,360.0 L380.0,352.0 L424.0,352.6" fill="none" stroke="#d9d9d9" stroke-width="1.6" stroke-linejoin="round"/><path d="M212.0,213.5 L224.3,240.4 L221.9,255.1 L231.7,260.0 L231.7,277.2 L236.6,294.4 L246.4,311.5 L251.3,318.9" fill="none" stroke="#d9d9d9" stroke-width="1.6" stroke-linejoin="round"/><path d="M192.0,196.8 L221.3,191.3 L243.3,195.0 L265.3,187.6 L294.6,195.0 L336.0,198.7 L358.0,195.0 L391.0,191.3 L420.3,198.7 L442.3,195.0 L457.0,184.0 L482.6,173.0 L512.0,176.6 L541.3,169.3 L563.3,162.0" fill="none" stroke="#d9d9d9" stroke-width="1.6" stroke-linejoin="round"/><path d="M100.3,213.3 L71.0,235.3 L52.7,250.0 L38.0,272.0 L16.0,275.6" fill="none" stroke="#d9d9d9" stroke-width="1.6" stroke-linejoin="round"/><path d="M16.0,261.0 L45.3,257.3 L63.6,246.3 L78.3,233.5 L100.3,213.3 L130.0,190.0" fill="none" stroke="#d9d9d9" stroke-width="1.6" stroke-linejoin="round"/><path d="M247.0,323.3 L250.6,345.3 L269.0,367.3 L271.0,380.0" fill="none" stroke="#d9d9d9" stroke-width="1.6" stroke-linejoin="round"/><path d="M446.0,338.0 L424.0,352.6 L409.3,382.0 L404.0,405.0" fill="none" stroke="#d9d9d9" stroke-width="1.6" stroke-linejoin="round"/><path d="M482.6,316.0 L493.6,352.6 L512.0,382.0 L534.0,393.0 L556.0,404.0 L592.6,426.0 L629.3,448.0 L656.0,455.3 L680.0,470.0" fill="none" stroke="#d9d9d9" stroke-width="1.6" stroke-linejoin="round"/><path d="M585.3,323.3 L570.6,367.3 L563.3,393.0 L570.6,418.6 L585.3,448.0 L600.0,470.0" fill="none" stroke="#d9d9d9" stroke-width="1.6" stroke-linejoin="round"/><path d="M170.4,590.4 L173.6,571.0 L155.3,545.3 L140.6,523.3 L133.3,490.3 L126.0,461.0" fill="none" stroke="#d9d9d9" stroke-width="1.6" stroke-linejoin="round"/><path d="M170.0,582.0 L214.0,571.0 L250.6,545.3 L272.6,534.3 L294.6,538.0 L330.0,530.0" fill="none" stroke="#d9d9d9" stroke-width="1.6" stroke-linejoin="round"/><path d="M438.6,549.0 L475.3,545.3 L512.0,549.0 L541.3,552.6 L574.3,545.3 L600.0,530.6 L622.0,512.3 L640.3,490.3 L656.0,475.6" fill="none" stroke="#d9d9d9" stroke-width="1.6" stroke-linejoin="round"/><path d="M475.3,519.6 L482.6,497.6 L490.0,475.6 L519.3,468.3 L556.0,468.3 L585.3,461.0" fill="none" stroke="#d9d9d9" stroke-width="1.6" stroke-linejoin="round"/><path d="M721.9,519.6 L718.3,556.2 L707.3,570.9" fill="none" stroke="#d9d9d9" stroke-width="1.6" stroke-linejoin="round"/><path d="M923.4,552.6 L978.0,556.2" fill="none" stroke="#d9d9d9" stroke-width="1.6" stroke-linejoin="round"/><path d="M711,232 L718,229.8 L726,233 L733,231 L730,236 L722,238 L713,239 Z" fill="#d6d6d6"/><path d="M718,305 L722,307 L726,316 L733,322 L740,325 L736,327 L728,324 L721,317 Z" fill="#d6d6d6"/><path d="M908.7,356 L915,352 L923.4,349 L920,356 L912,360 Z" fill="#d6d6d6"/><path d="M874,415 L878,416 L877,421 L873,420 Z" fill="#d6d6d6"/><path d="M896,680 L904,677 L912,683 L918,680 L923,677 L921,686 L915,690 L913,695 L908,688 L900,690 Z" fill="#d6d6d6"/><text x="740.6" y="167.4" textLength="42.2" lengthAdjust="spacingAndGlyphs" font-family="Liberation Sans" font-size="11.6" fill="#5f5f5f" stroke="#f8f8f8" stroke-width="2.2" stroke-opacity="0.85" paint-order="stroke">Mauriac</text><text x="421.3" y="196.8" textLength="89.3" lengthAdjust="spacingAndGlyphs" font-family="Liberation Sans" font-size="11.6" fill="#5f5f5f" stroke="#f8f8f8" stroke-width="2.2" stroke-opacity="0.85" paint-order="stroke">Brive-la-Gaillarde</text><text x="801" y="209.6" textLength="32.6" lengthAdjust="spacingAndGlyphs" font-family="Liberation Sans" font-size="11.6" fill="#5f5f5f" stroke="#f8f8f8" stroke-width="2.2" stroke-opacity="0.85" paint-order="stroke">Salers</text><text x="328" y="213.3" textLength="112.0" lengthAdjust="spacingAndGlyphs" font-family="Liberation Sans" font-size="11.6" fill="#5f5f5f" stroke="#f8f8f8" stroke-width="2.2" stroke-opacity="0.85" paint-order="stroke">Terrasson-Lavilledieu</text><text x="939" y="223.2" textLength="31.3" lengthAdjust="spacingAndGlyphs" font-family="Liberation Sans" font-size="11.6" fill="#5f5f5f" stroke="#f8f8f8" stroke-width="2.2" stroke-opacity="0.85" paint-order="stroke">Murat</text><text x="63" y="229" textLength="36.0" lengthAdjust="spacingAndGlyphs" font-family="Liberation Sans" font-size="11.6" fill="#5f5f5f" stroke="#f8f8f8" stroke-width="2.2" stroke-opacity="0.85" paint-order="stroke">Neuvic</text><text x="555.5" y="232.4" textLength="119.5" lengthAdjust="spacingAndGlyphs" font-family="Liberation Sans" font-size="11.6" fill="#5f5f5f" stroke="#f8f8f8" stroke-width="2.2" stroke-opacity="0.85" paint-order="stroke">Argentat-sur-Dordogne</text><text x="280" y="246.4" textLength="104.2" lengthAdjust="spacingAndGlyphs" font-family="Liberation Sans" font-size="11.6" fill="#5f5f5f" stroke="#f8f8f8" stroke-width="2.2" stroke-opacity="0.85" paint-order="stroke">Montignac-Lascaux</text><text x="461" y="249" textLength="102.2" lengthAdjust="spacingAndGlyphs" font-family="Liberation Sans" font-size="11.6" fill="#5f5f5f" stroke="#f8f8f8" stroke-width="2.2" stroke-opacity="0.85" paint-order="stroke">Collonges-la-Rouge</text><text x="157.5" y="266.6" textLength="27.5" lengthAdjust="spacingAndGlyphs" font-family="Liberation Sans" font-size="11.6" fill="#5f5f5f" stroke="#f8f8f8" stroke-width="2.2" stroke-opacity="0.85" paint-order="stroke">Vergt</text><text x="16" y="275.8" textLength="8.0" lengthAdjust="spacingAndGlyphs" font-family="Liberation Sans" font-size="11.6" fill="#5f5f5f" stroke="#f8f8f8" stroke-width="2.2" stroke-opacity="0.85" paint-order="stroke">ol</text><text x="772.2" y="286.8" textLength="37.5" lengthAdjust="spacingAndGlyphs" font-family="Liberation Sans" font-size="11.6" fill="#5f5f5f" stroke="#f8f8f8" stroke-width="2.2" stroke-opacity="0.85" paint-order="stroke">Jussac</text><text x="834.3" y="291.3" textLength="63.6" lengthAdjust="spacingAndGlyphs" font-family="Liberation Sans" font-size="11.6" fill="#5f5f5f" stroke="#f8f8f8" stroke-width="2.2" stroke-opacity="0.85" paint-order="stroke">Vic-sur-Cère</text><text x="519.8" y="291.3" textLength="119.9" lengthAdjust="spacingAndGlyphs" font-family="Liberation Sans" font-size="11.6" fill="#5f5f5f" stroke="#f8f8f8" stroke-width="2.2" stroke-opacity="0.85" paint-order="stroke">Beaulieu-sur-Dordogne</text><text x="781" y="314.4" textLength="39.7" lengthAdjust="spacingAndGlyphs" font-family="Liberation Sans" font-size="11.6" fill="#5f5f5f" stroke="#f8f8f8" stroke-width="2.2" stroke-opacity="0.85" paint-order="stroke">Aurillac</text><text x="478.6" y="314.4" textLength="33.1" lengthAdjust="spacingAndGlyphs" font-family="Liberation Sans" font-size="11.6" fill="#5f5f5f" stroke="#f8f8f8" stroke-width="2.2" stroke-opacity="0.85" paint-order="stroke">Martel</text><text x="544.8" y="318.8" textLength="74.2" lengthAdjust="spacingAndGlyphs" font-family="Liberation Sans" font-size="11.6" fill="#5f5f5f" stroke="#f8f8f8" stroke-width="2.2" stroke-opacity="0.85" paint-order="stroke">Biars-sur-Cère</text><text x="919.2" y="320.7" textLength="49.3" lengthAdjust="spacingAndGlyphs" font-family="Liberation Sans" font-size="11.6" fill="#5f5f5f" stroke="#f8f8f8" stroke-width="2.2" stroke-opacity="0.85" paint-order="stroke">Pierrefort</text><text x="223" y="322.9" textLength="49.0" lengthAdjust="spacingAndGlyphs" font-family="Liberation Sans" font-size="11.6" fill="#5f5f5f" stroke="#f8f8f8" stroke-width="2.2" stroke-opacity="0.85" paint-order="stroke">Le Bugue</text><text x="761.5" y="331.7" textLength="87.5" lengthAdjust="spacingAndGlyphs" font-family="Liberation Sans" font-size="11.6" fill="#5f5f5f" stroke="#f8f8f8" stroke-width="2.2" stroke-opacity="0.85" paint-order="stroke">Arpajon-sur-Cère</text><text x="428" y="335.4" textLength="41.0" lengthAdjust="spacingAndGlyphs" font-family="Liberation Sans" font-size="11.6" fill="#5f5f5f" stroke="#f8f8f8" stroke-width="2.2" stroke-opacity="0.85" paint-order="stroke">Souillac</text><text x="309" y="336.5" textLength="87.7" lengthAdjust="spacingAndGlyphs" font-family="Liberation Sans" font-size="11.6" fill="#5f5f5f" stroke="#f8f8f8" stroke-width="2.2" stroke-opacity="0.85" paint-order="stroke">Sarlat-la-Canéda</text><text x="572" y="353" textLength="53.7" lengthAdjust="spacingAndGlyphs" font-family="Liberation Sans" font-size="11.6" fill="#5f5f5f" stroke="#f8f8f8" stroke-width="2.2" stroke-opacity="0.85" paint-order="stroke">Saint-Céré</text><text x="961" y="354.9" textLength="82.0" lengthAdjust="spacingAndGlyphs" font-family="Liberation Sans" font-size="11.6" fill="#5f5f5f" stroke="#f8f8f8" stroke-width="2.2" stroke-opacity="0.85" paint-order="stroke">Chaudes-Aigues</text><text x="62.3" y="356.7" textLength="46.7" lengthAdjust="spacingAndGlyphs" font-family="Liberation Sans" font-size="11.6" fill="#5f5f5f" stroke="#f8f8f8" stroke-width="2.2" stroke-opacity="0.85" paint-order="stroke">Bergerac</text><text x="160" y="364.8" textLength="38.0" lengthAdjust="spacingAndGlyphs" font-family="Liberation Sans" font-size="11.6" fill="#5f5f5f" stroke="#f8f8f8" stroke-width="2.2" stroke-opacity="0.85" paint-order="stroke">Lalinde</text><text x="336" y="382.4" textLength="37.5" lengthAdjust="spacingAndGlyphs" font-family="Liberation Sans" font-size="11.6" fill="#5f5f5f" stroke="#f8f8f8" stroke-width="2.2" stroke-opacity="0.85" paint-order="stroke">Domme</text><text x="465.4" y="384.3" textLength="62.9" lengthAdjust="spacingAndGlyphs" font-family="Liberation Sans" font-size="11.6" fill="#5f5f5f" stroke="#f8f8f8" stroke-width="2.2" stroke-opacity="0.85" paint-order="stroke">Rocamadour</text><text x="390" y="416.6" textLength="45.3" lengthAdjust="spacingAndGlyphs" font-family="Liberation Sans" font-size="11.6" fill="#5f5f5f" stroke="#f8f8f8" stroke-width="2.2" stroke-opacity="0.85" paint-order="stroke">Gourdon</text><text x="564" y="420.3" textLength="92.0" lengthAdjust="spacingAndGlyphs" font-family="Liberation Sans" font-size="11.6" fill="#5f5f5f" stroke="#f8f8f8" stroke-width="2.2" stroke-opacity="0.85" paint-order="stroke">Lacapelle-Marival</text><text x="694.2" y="428.4" textLength="33.1" lengthAdjust="spacingAndGlyphs" font-family="Liberation Sans" font-size="11.6" fill="#5f5f5f" stroke="#f8f8f8" stroke-width="2.2" stroke-opacity="0.85" paint-order="stroke">Maurs</text><text x="923" y="443" textLength="45.5" lengthAdjust="spacingAndGlyphs" font-family="Liberation Sans" font-size="11.6" fill="#5f5f5f" stroke="#f8f8f8" stroke-width="2.2" stroke-opacity="0.85" paint-order="stroke">Laguiole</text><text x="39" y="450.4" textLength="33.0" lengthAdjust="spacingAndGlyphs" font-family="Liberation Sans" font-size="11.6" fill="#5f5f5f" stroke="#f8f8f8" stroke-width="2.2" stroke-opacity="0.85" paint-order="stroke">Eymet</text><text x="782" y="463" textLength="122.0" lengthAdjust="spacingAndGlyphs" font-family="Liberation Sans" font-size="11.6" fill="#5f5f5f" stroke="#f8f8f8" stroke-width="2.2" stroke-opacity="0.85" paint-order="stroke">Entraygues-sur-Truyère</text><text x="633" y="482" textLength="36.0" lengthAdjust="spacingAndGlyphs" font-family="Liberation Sans" font-size="11.6" fill="#5f5f5f" stroke="#f8f8f8" stroke-width="2.2" stroke-opacity="0.85" paint-order="stroke">Figeac</text><text x="6.3" y="485" textLength="92.7" lengthAdjust="spacingAndGlyphs" font-family="Liberation Sans" font-size="11.6" fill="#5f5f5f" stroke="#f8f8f8" stroke-width="2.2" stroke-opacity="0.85" paint-order="stroke">Mont-de-Guyenne</text><text x="700" y="506" textLength="60.0" lengthAdjust="spacingAndGlyphs" font-family="Liberation Sans" font-size="11.6" fill="#5f5f5f" stroke="#f8f8f8" stroke-width="2.2" stroke-opacity="0.85" paint-order="stroke">Decazeville</text><text x="156.4" y="520" textLength="66.2" lengthAdjust="spacingAndGlyphs" font-family="Liberation Sans" font-size="11.6" fill="#5f5f5f" stroke="#f8f8f8" stroke-width="2.2" stroke-opacity="0.85" paint-order="stroke">Monflanquin</text><text x="712" y="522.5" textLength="30.4" lengthAdjust="spacingAndGlyphs" font-family="Liberation Sans" font-size="11.6" fill="#5f5f5f" stroke="#f8f8f8" stroke-width="2.2" stroke-opacity="0.85" paint-order="stroke">Aubin</text><text x="893" y="527" textLength="45.4" lengthAdjust="spacingAndGlyphs" font-family="Liberation Sans" font-size="11.6" fill="#5f5f5f" stroke="#f8f8f8" stroke-width="2.2" stroke-opacity="0.85" paint-order="stroke">Espalion</text><text x="246" y="538" textLength="32.5" lengthAdjust="spacingAndGlyphs" font-family="Liberation Sans" font-size="11.6" fill="#5f5f5f" stroke="#f8f8f8" stroke-width="2.2" stroke-opacity="0.85" paint-order="stroke">Fumel</text><text x="954" y="548" textLength="76.0" lengthAdjust="spacingAndGlyphs" font-family="Liberation Sans" font-size="11.6" fill="#5f5f5f" stroke="#f8f8f8" stroke-width="2.2" stroke-opacity="0.85" paint-order="stroke">St Geniez-d’Olt</text><text x="880" y="552" textLength="42.5" lengthAdjust="spacingAndGlyphs" font-family="Liberation Sans" font-size="11.6" fill="#5f5f5f" stroke="#f8f8f8" stroke-width="2.2" stroke-opacity="0.85" paint-order="stroke">Bozouls</text><text x="962" y="561" textLength="10.5" lengthAdjust="spacingAndGlyphs" font-family="Liberation Sans" font-size="11.6" fill="#5f5f5f" stroke="#f8f8f8" stroke-width="2.2" stroke-opacity="0.85" paint-order="stroke">et</text><text x="416" y="563" textLength="37.6" lengthAdjust="spacingAndGlyphs" font-family="Liberation Sans" font-size="11.6" fill="#5f5f5f" stroke="#f8f8f8" stroke-width="2.2" stroke-opacity="0.85" paint-order="stroke">Cahors</text><text x="725" y="582.4" textLength="36.5" lengthAdjust="spacingAndGlyphs" font-family="Liberation Sans" font-size="11.6" fill="#5f5f5f" stroke="#f8f8f8" stroke-width="2.2" stroke-opacity="0.85" paint-order="stroke">Rignac</text><text x="120" y="583.9" textLength="94.5" lengthAdjust="spacingAndGlyphs" font-family="Liberation Sans" font-size="11.6" fill="#5f5f5f" stroke="#f8f8f8" stroke-width="2.2" stroke-opacity="0.85" paint-order="stroke">Villeneuve-sur-Lot</text><text x="5" y="593" textLength="42.0" lengthAdjust="spacingAndGlyphs" font-family="Liberation Sans" font-size="11.6" fill="#5f5f5f" stroke="#f8f8f8" stroke-width="2.2" stroke-opacity="0.85" paint-order="stroke">Tonneins</text><text x="810.4" y="599" textLength="83.8" lengthAdjust="spacingAndGlyphs" font-family="Liberation Sans" font-size="11.6" fill="#5f5f5f" stroke="#f8f8f8" stroke-width="2.2" stroke-opacity="0.85" paint-order="stroke">Onet-le-Château</text><text x="28" y="607.8" textLength="37.0" lengthAdjust="spacingAndGlyphs" font-family="Liberation Sans" font-size="11.6" fill="#5f5f5f" stroke="#f8f8f8" stroke-width="2.2" stroke-opacity="0.85" paint-order="stroke">Clairac</text><text x="584" y="613.7" textLength="133.4" lengthAdjust="spacingAndGlyphs" font-family="Liberation Sans" font-size="11.6" fill="#5f5f5f" stroke="#f8f8f8" stroke-width="2.2" stroke-opacity="0.85" paint-order="stroke">Villefranche-de-Rouergue</text><text x="831" y="613.7" textLength="33.0" lengthAdjust="spacingAndGlyphs" font-family="Liberation Sans" font-size="11.6" fill="#5f5f5f" stroke="#f8f8f8" stroke-width="2.2" stroke-opacity="0.85" paint-order="stroke">Rodez</text><text x="790" y="631.7" textLength="86.0" lengthAdjust="spacingAndGlyphs" font-family="Liberation Sans" font-size="11.6" fill="#5f5f5f" stroke="#f8f8f8" stroke-width="2.2" stroke-opacity="0.85" paint-order="stroke">Luc-la-Primaube</text><text x="13" y="640" textLength="44.0" lengthAdjust="spacingAndGlyphs" font-family="Liberation Sans" font-size="11.6" fill="#5f5f5f" stroke="#f8f8f8" stroke-width="2.2" stroke-opacity="0.85" paint-order="stroke">Aiguillon</text><text x="763.4" y="650.4" textLength="64.6" lengthAdjust="spacingAndGlyphs" font-family="Liberation Sans" font-size="11.6" fill="#5f5f5f" stroke="#f8f8f8" stroke-width="2.2" stroke-opacity="0.85" paint-order="stroke">Baraqueville</text><text x="301" y="661.8" textLength="47.0" lengthAdjust="spacingAndGlyphs" font-family="Liberation Sans" font-size="11.6" fill="#5f5f5f" stroke="#f8f8f8" stroke-width="2.2" stroke-opacity="0.85" paint-order="stroke">Lauzerte</text><text x="537.5" y="672" textLength="34.9" lengthAdjust="spacingAndGlyphs" font-family="Liberation Sans" font-size="11.6" fill="#5f5f5f" stroke="#f8f8f8" stroke-width="2.2" stroke-opacity="0.85" paint-order="stroke">Caylus</text><text x="124.5" y="688" textLength="26.5" lengthAdjust="spacingAndGlyphs" font-family="Liberation Sans" font-size="11.6" fill="#5f5f5f" stroke="#f8f8f8" stroke-width="2.2" stroke-opacity="0.85" paint-order="stroke">Agen</text><text x="740.6" y="690.9" textLength="45.2" lengthAdjust="spacingAndGlyphs" font-family="Liberation Sans" font-size="11.6" fill="#5f5f5f" stroke="#f8f8f8" stroke-width="2.2" stroke-opacity="0.85" paint-order="stroke">Naucelle</text><text x="129" y="711" textLength="20.5" lengthAdjust="spacingAndGlyphs" font-family="Liberation Sans" font-size="11.6" fill="#5f5f5f" stroke="#f8f8f8" stroke-width="2.2" stroke-opacity="0.85" paint-order="stroke">Boé</text><text x="445" y="711" textLength="52.8" lengthAdjust="spacingAndGlyphs" font-family="Liberation Sans" font-size="11.6" fill="#5f5f5f" stroke="#f8f8f8" stroke-width="2.2" stroke-opacity="0.85" paint-order="stroke">Caussade</text><text x="18.6" y="722.9" textLength="30.9" lengthAdjust="spacingAndGlyphs" font-family="Liberation Sans" font-size="11.6" fill="#5f5f5f" stroke="#f8f8f8" stroke-width="2.2" stroke-opacity="0.85" paint-order="stroke">Nérac</text><text x="330" y="727.3" textLength="63.7" lengthAdjust="spacingAndGlyphs" font-family="Liberation Sans" font-size="11.6" fill="#5f5f5f" stroke="#f8f8f8" stroke-width="2.2" stroke-opacity="0.85" paint-order="stroke">Lafrançaise</text><text x="213.4" y="736.8" textLength="41.9" lengthAdjust="spacingAndGlyphs" font-family="Liberation Sans" font-size="11.6" fill="#5f5f5f" stroke="#f8f8f8" stroke-width="2.2" stroke-opacity="0.85" paint-order="stroke">Valence</text><text x="282" y="737.6" textLength="45.0" lengthAdjust="spacingAndGlyphs" font-family="Liberation Sans" font-size="11.6" fill="#5f5f5f" stroke="#f8f8f8" stroke-width="2.2" stroke-opacity="0.85" paint-order="stroke">Moissac</text><text x="122.6" y="758.5" textLength="47.8" lengthAdjust="spacingAndGlyphs" font-family="Liberation Sans" font-size="11.6" fill="#5f5f5f" stroke="#f8f8f8" stroke-width="2.2" stroke-opacity="0.85" paint-order="stroke">Astaffort</text><text x="191.7" y="203.4" textLength="29.1" lengthAdjust="spacingAndGlyphs" font-family="Liberation Sans" font-size="11.6" fill="#5f5f5f" stroke="#f8f8f8" stroke-width="2.2" stroke-opacity="0.85" paint-order="stroke">lazac</text><text x="163" y="215.9" textLength="65.0" lengthAdjust="spacingAndGlyphs" font-family="Liberation Sans" font-size="11.6" fill="#5f5f5f" stroke="#f8f8f8" stroke-width="2.2" stroke-opacity="0.85" paint-order="stroke">Isle Manoire</text><text x="191.7" y="186.5" textLength="8.3" lengthAdjust="spacingAndGlyphs" font-family="Liberation Sans" font-size="11.6" fill="#5f5f5f" stroke="#f8f8f8" stroke-width="2.2" stroke-opacity="0.85" paint-order="stroke">x</text><circle cx="472.5" cy="611.8" r="4.9" fill="#0a6fe0" fill-opacity="0.72" stroke="#0046a8" stroke-opacity="0.6" stroke-width="0.8"/><circle cx="335.3" cy="531.8" r="4.9" fill="#f46a00" fill-opacity="0.72" stroke="#b84f00" stroke-opacity="0.6" stroke-width="0.8"/><circle cx="532.5" cy="370.5" r="4.9" fill="#f46a00" fill-opacity="0.72" stroke="#b84f00" stroke-opacity="0.6" stroke-width="0.8"/><circle cx="501.5" cy="298.7" r="4.9" fill="#e8578a" fill-opacity="0.72" stroke="#b8406a" stroke-opacity="0.6" stroke-width="0.8"/><circle cx="615.4" cy="303.7" r="4.9" fill="#0a6fe0" fill-opacity="0.72" stroke="#0046a8" stroke-opacity="0.6" stroke-width="0.8"/><circle cx="667.8" cy="380.3" r="4.9" fill="#0a6fe0" fill-opacity="0.72" stroke="#0046a8" stroke-opacity="0.6" stroke-width="0.8"/><circle cx="474.9" cy="537.6" r="4.9" fill="#0a6fe0" fill-opacity="0.72" stroke="#0046a8" stroke-opacity="0.6" stroke-width="0.8"/><circle cx="634.9" cy="459.5" r="4.9" fill="#2e2e2e" fill-opacity="0.72" stroke="#000" stroke-opacity="0.6" stroke-width="0.8"/><circle cx="591.4" cy="343.7" r="4.9" fill="#e8578a" fill-opacity="0.72" stroke="#b8406a" stroke-opacity="0.6" stroke-width="0.8"/><circle cx="443.2" cy="319.8" r="4.9" fill="#e8578a" fill-opacity="0.72" stroke="#b8406a" stroke-opacity="0.6" stroke-width="0.8"/><circle cx="300.4" cy="528.2" r="4.9" fill="#f46a00" fill-opacity="0.72" stroke="#b84f00" stroke-opacity="0.6" stroke-width="0.8"/><circle cx="493.6" cy="541.7" r="4.9" fill="#0a6fe0" fill-opacity="0.72" stroke="#0046a8" stroke-opacity="0.6" stroke-width="0.8"/><circle cx="614.1" cy="410.1" r="4.9" fill="#e8578a" fill-opacity="0.72" stroke="#b8406a" stroke-opacity="0.6" stroke-width="0.8"/><circle cx="369.1" cy="526.6" r="4.9" fill="#0a6fe0" fill-opacity="0.72" stroke="#0046a8" stroke-opacity="0.6" stroke-width="0.8"/><circle cx="472.0" cy="544.0" r="4.9" fill="#e8578a" fill-opacity="0.72" stroke="#b8406a" stroke-opacity="0.6" stroke-width="0.8"/><circle cx="516.1" cy="371.6" r="4.9" fill="#e8578a" fill-opacity="0.72" stroke="#b8406a" stroke-opacity="0.6" stroke-width="0.8"/><circle cx="401.8" cy="644.2" r="4.9" fill="#0a6fe0" fill-opacity="0.72" stroke="#0046a8" stroke-opacity="0.6" stroke-width="0.8"/><circle cx="617.0" cy="416.3" r="4.9" fill="#f46a00" fill-opacity="0.72" stroke="#b84f00" stroke-opacity="0.6" stroke-width="0.8"/><circle cx="537.8" cy="387.3" r="4.9" fill="#0a6fe0" fill-opacity="0.72" stroke="#0046a8" stroke-opacity="0.6" stroke-width="0.8"/><circle cx="558.9" cy="315.9" r="4.9" fill="#0a6fe0" fill-opacity="0.72" stroke="#0046a8" stroke-opacity="0.6" stroke-width="0.8"/><circle cx="426.2" cy="593.7" r="4.9" fill="#e8578a" fill-opacity="0.72" stroke="#b8406a" stroke-opacity="0.6" stroke-width="0.8"/><circle cx="431.9" cy="556.7" r="4.9" fill="#0a6fe0" fill-opacity="0.72" stroke="#0046a8" stroke-opacity="0.6" stroke-width="0.8"/><circle cx="512.8" cy="269.7" r="4.9" fill="#e8578a" fill-opacity="0.72" stroke="#b8406a" stroke-opacity="0.6" stroke-width="0.8"/><circle cx="580.8" cy="309.2" r="4.9" fill="#2e2e2e" fill-opacity="0.72" stroke="#000" stroke-opacity="0.6" stroke-width="0.8"/><circle cx="615.9" cy="464.9" r="4.9" fill="#f46a00" fill-opacity="0.72" stroke="#b84f00" stroke-opacity="0.6" stroke-width="0.8"/><circle cx="396.0" cy="540.0" r="4.9" fill="#0a6fe0" fill-opacity="0.72" stroke="#0046a8" stroke-opacity="0.6" stroke-width="0.8"/><circle cx="578.2" cy="330.3" r="4.9" fill="#e8578a" fill-opacity="0.72" stroke="#b8406a" stroke-opacity="0.6" stroke-width="0.8"/><circle cx="598.2" cy="450.1" r="4.9" fill="#e8578a" fill-opacity="0.72" stroke="#b8406a" stroke-opacity="0.6" stroke-width="0.8"/><circle cx="459.9" cy="559.8" r="4.9" fill="#e8578a" fill-opacity="0.72" stroke="#b8406a" stroke-opacity="0.6" stroke-width="0.8"/><circle cx="477.2" cy="312.8" r="4.9" fill="#0a6fe0" fill-opacity="0.72" stroke="#0046a8" stroke-opacity="0.6" stroke-width="0.8"/><circle cx="428.0" cy="569.3" r="4.9" fill="#e8578a" fill-opacity="0.72" stroke="#b8406a" stroke-opacity="0.6" stroke-width="0.8"/><circle cx="389.7" cy="603.4" r="4.9" fill="#e8578a" fill-opacity="0.72" stroke="#b8406a" stroke-opacity="0.6" stroke-width="0.8"/><circle cx="546.9" cy="300.5" r="4.9" fill="#e8578a" fill-opacity="0.72" stroke="#b8406a" stroke-opacity="0.6" stroke-width="0.8"/><circle cx="543.6" cy="384.8" r="4.9" fill="#f46a00" fill-opacity="0.72" stroke="#b84f00" stroke-opacity="0.6" stroke-width="0.8"/><circle cx="602.6" cy="424.9" r="4.9" fill="#0a6fe0" fill-opacity="0.72" stroke="#0046a8" stroke-opacity="0.6" stroke-width="0.8"/><circle cx="648.4" cy="463.9" r="4.9" fill="#e8578a" fill-opacity="0.72" stroke="#b8406a" stroke-opacity="0.6" stroke-width="0.8"/><circle cx="647.9" cy="409.0" r="4.9" fill="#0a6fe0" fill-opacity="0.72" stroke="#0046a8" stroke-opacity="0.6" stroke-width="0.8"/><circle cx="500.5" cy="572.6" r="4.9" fill="#e8578a" fill-opacity="0.72" stroke="#b8406a" stroke-opacity="0.6" stroke-width="0.8"/><circle cx="459.9" cy="617.4" r="4.9" fill="#2e2e2e" fill-opacity="0.72" stroke="#000" stroke-opacity="0.6" stroke-width="0.8"/><circle cx="408.8" cy="402.3" r="4.9" fill="#e8578a" fill-opacity="0.72" stroke="#b8406a" stroke-opacity="0.6" stroke-width="0.8"/><circle cx="479.2" cy="360.8" r="4.9" fill="#2e2e2e" fill-opacity="0.72" stroke="#000" stroke-opacity="0.6" stroke-width="0.8"/><circle cx="320.8" cy="518.5" r="4.9" fill="#f46a00" fill-opacity="0.72" stroke="#b84f00" stroke-opacity="0.6" stroke-width="0.8"/><circle cx="465.8" cy="561.7" r="4.9" fill="#e8578a" fill-opacity="0.72" stroke="#b8406a" stroke-opacity="0.6" stroke-width="0.8"/><circle cx="439.4" cy="551.3" r="4.9" fill="#f46a00" fill-opacity="0.72" stroke="#b84f00" stroke-opacity="0.6" stroke-width="0.8"/><circle cx="610.3" cy="432.6" r="4.9" fill="#2e2e2e" fill-opacity="0.72" stroke="#000" stroke-opacity="0.6" stroke-width="0.8"/><circle cx="353.1" cy="533.9" r="4.9" fill="#2e2e2e" fill-opacity="0.72" stroke="#000" stroke-opacity="0.6" stroke-width="0.8"/><circle cx="304.2" cy="525.9" r="4.9" fill="#0a6fe0" fill-opacity="0.72" stroke="#0046a8" stroke-opacity="0.6" stroke-width="0.8"/><circle cx="497.3" cy="307.1" r="4.9" fill="#0a6fe0" fill-opacity="0.72" stroke="#0046a8" stroke-opacity="0.6" stroke-width="0.8"/><circle cx="435.9" cy="330.4" r="4.9" fill="#e8578a" fill-opacity="0.72" stroke="#b8406a" stroke-opacity="0.6" stroke-width="0.8"/><circle cx="484.0" cy="340.0" r="4.9" fill="#0a6fe0" fill-opacity="0.72" stroke="#0046a8" stroke-opacity="0.6" stroke-width="0.8"/><circle cx="631.1" cy="498.0" r="4.9" fill="#e8578a" fill-opacity="0.72" stroke="#b8406a" stroke-opacity="0.6" stroke-width="0.8"/><circle cx="530.4" cy="300.3" r="4.9" fill="#0a6fe0" fill-opacity="0.72" stroke="#0046a8" stroke-opacity="0.6" stroke-width="0.8"/><circle cx="472.6" cy="616.3" r="4.9" fill="#0a6fe0" fill-opacity="0.72" stroke="#0046a8" stroke-opacity="0.6" stroke-width="0.8"/><circle cx="334.0" cy="531.0" r="4.9" fill="#f46a00" fill-opacity="0.72" stroke="#b84f00" stroke-opacity="0.6" stroke-width="0.8"/><circle cx="512.6" cy="368.2" r="4.9" fill="#0a6fe0" fill-opacity="0.72" stroke="#0046a8" stroke-opacity="0.6" stroke-width="0.8"/><circle cx="330.5" cy="528.9" r="4.9" fill="#2e2e2e" fill-opacity="0.72" stroke="#000" stroke-opacity="0.6" stroke-width="0.8"/><circle cx="497.1" cy="545.2" r="4.9" fill="#2e2e2e" fill-opacity="0.72" stroke="#000" stroke-opacity="0.6" stroke-width="0.8"/><circle cx="463.2" cy="623.5" r="4.9" fill="#e8578a" fill-opacity="0.72" stroke="#b8406a" stroke-opacity="0.6" stroke-width="0.8"/><circle cx="642.4" cy="454.6" r="4.9" fill="#2e2e2e" fill-opacity="0.72" stroke="#000" stroke-opacity="0.6" stroke-width="0.8"/><circle cx="460.0" cy="559.3" r="4.9" fill="#e8578a" fill-opacity="0.72" stroke="#b8406a" stroke-opacity="0.6" stroke-width="0.8"/><circle cx="494.1" cy="579.9" r="4.9" fill="#2e2e2e" fill-opacity="0.72" stroke="#000" stroke-opacity="0.6" stroke-width="0.8"/><circle cx="550.6" cy="358.5" r="4.9" fill="#0a6fe0" fill-opacity="0.72" stroke="#0046a8" stroke-opacity="0.6" stroke-width="0.8"/><circle cx="395.1" cy="458.6" r="4.9" fill="#f46a00" fill-opacity="0.72" stroke="#b84f00" stroke-opacity="0.6" stroke-width="0.8"/><circle cx="322.3" cy="532.7" r="4.9" fill="#0a6fe0" fill-opacity="0.72" stroke="#0046a8" stroke-opacity="0.6" stroke-width="0.8"/><circle cx="624.1" cy="469.5" r="4.9" fill="#e8578a" fill-opacity="0.72" stroke="#b8406a" stroke-opacity="0.6" stroke-width="0.8"/><circle cx="438.4" cy="550.6" r="4.9" fill="#f46a00" fill-opacity="0.72" stroke="#b84f00" stroke-opacity="0.6" stroke-width="0.8"/><circle cx="352.5" cy="600.6" r="4.9" fill="#e8578a" fill-opacity="0.72" stroke="#b8406a" stroke-opacity="0.6" stroke-width="0.8"/><circle cx="495.5" cy="381.9" r="4.9" fill="#e8578a" fill-opacity="0.72" stroke="#b8406a" stroke-opacity="0.6" stroke-width="0.8"/><circle cx="503.6" cy="277.9" r="4.9" fill="#f46a00" fill-opacity="0.72" stroke="#b84f00" stroke-opacity="0.6" stroke-width="0.8"/><circle cx="337.6" cy="611.5" r="4.9" fill="#0a6fe0" fill-opacity="0.72" stroke="#0046a8" stroke-opacity="0.6" stroke-width="0.8"/><circle cx="585.5" cy="458.3" r="4.9" fill="#f46a00" fill-opacity="0.72" stroke="#b84f00" stroke-opacity="0.6" stroke-width="0.8"/><circle cx="588.0" cy="436.9" r="4.9" fill="#f46a00" fill-opacity="0.72" stroke="#b84f00" stroke-opacity="0.6" stroke-width="0.8"/><circle cx="617.0" cy="474.8" r="4.9" fill="#0a6fe0" fill-opacity="0.72" stroke="#0046a8" stroke-opacity="0.6" stroke-width="0.8"/><circle cx="490.5" cy="583.4" r="4.9" fill="#e8578a" fill-opacity="0.72" stroke="#b8406a" stroke-opacity="0.6" stroke-width="0.8"/><circle cx="516.0" cy="303.9" r="4.9" fill="#2e2e2e" fill-opacity="0.72" stroke="#000" stroke-opacity="0.6" stroke-width="0.8"/><circle cx="533.9" cy="384.9" r="4.9" fill="#e8578a" fill-opacity="0.72" stroke="#b8406a" stroke-opacity="0.6" stroke-width="0.8"/><circle cx="659.5" cy="377.9" r="4.9" fill="#2e2e2e" fill-opacity="0.72" stroke="#000" stroke-opacity="0.6" stroke-width="0.8"/><circle cx="556.1" cy="552.5" r="4.9" fill="#2e2e2e" fill-opacity="0.72" stroke="#000" stroke-opacity="0.6" stroke-width="0.8"/><circle cx="545.7" cy="347.8" r="4.9" fill="#2e2e2e" fill-opacity="0.72" stroke="#000" stroke-opacity="0.6" stroke-width="0.8"/><circle cx="339.0" cy="613.8" r="4.9" fill="#0a6fe0" fill-opacity="0.72" stroke="#0046a8" stroke-opacity="0.6" stroke-width="0.8"/><circle cx="505.9" cy="539.4" r="4.9" fill="#0a6fe0" fill-opacity="0.72" stroke="#0046a8" stroke-opacity="0.6" stroke-width="0.8"/><circle cx="374.5" cy="602.3" r="4.9" fill="#f46a00" fill-opacity="0.72" stroke="#b84f00" stroke-opacity="0.6" stroke-width="0.8"/><circle cx="341.3" cy="539.7" r="4.9" fill="#e8578a" fill-opacity="0.72" stroke="#b8406a" stroke-opacity="0.6" stroke-width="0.8"/><circle cx="324.4" cy="530.5" r="4.9" fill="#0a6fe0" fill-opacity="0.72" stroke="#0046a8" stroke-opacity="0.6" stroke-width="0.8"/><circle cx="578.5" cy="547.9" r="4.9" fill="#e8578a" fill-opacity="0.72" stroke="#b8406a" stroke-opacity="0.6" stroke-width="0.8"/><circle cx="358.2" cy="534.9" r="4.9" fill="#e8578a" fill-opacity="0.72" stroke="#b8406a" stroke-opacity="0.6" stroke-width="0.8"/><circle cx="557.3" cy="552.1" r="4.9" fill="#2e2e2e" fill-opacity="0.72" stroke="#000" stroke-opacity="0.6" stroke-width="0.8"/><circle cx="695.2" cy="448.0" r="4.9" fill="#0a6fe0" fill-opacity="0.72" stroke="#0046a8" stroke-opacity="0.6" stroke-width="0.8"/><circle cx="541.9" cy="345.2" r="4.9" fill="#e8578a" fill-opacity="0.72" stroke="#b8406a" stroke-opacity="0.6" stroke-width="0.8"/><circle cx="527.6" cy="552.5" r="4.9" fill="#e8578a" fill-opacity="0.72" stroke="#b8406a" stroke-opacity="0.6" stroke-width="0.8"/><circle cx="628.7" cy="506.9" r="4.9" fill="#0a6fe0" fill-opacity="0.72" stroke="#0046a8" stroke-opacity="0.6" stroke-width="0.8"/><circle cx="466.0" cy="615.8" r="4.9" fill="#2e2e2e" fill-opacity="0.72" stroke="#000" stroke-opacity="0.6" stroke-width="0.8"/><circle cx="556.6" cy="316.7" r="4.9" fill="#0a6fe0" fill-opacity="0.72" stroke="#0046a8" stroke-opacity="0.6" stroke-width="0.8"/><circle cx="447.2" cy="610.8" r="4.9" fill="#0a6fe0" fill-opacity="0.72" stroke="#0046a8" stroke-opacity="0.6" stroke-width="0.8"/><circle cx="633.8" cy="487.1" r="4.9" fill="#2e2e2e" fill-opacity="0.72" stroke="#000" stroke-opacity="0.6" stroke-width="0.8"/><circle cx="343.5" cy="527.4" r="4.9" fill="#0a6fe0" fill-opacity="0.72" stroke="#0046a8" stroke-opacity="0.6" stroke-width="0.8"/><circle cx="562.4" cy="320.2" r="4.9" fill="#f46a00" fill-opacity="0.72" stroke="#b84f00" stroke-opacity="0.6" stroke-width="0.8"/><circle cx="537.4" cy="399.2" r="4.9" fill="#0a6fe0" fill-opacity="0.72" stroke="#0046a8" stroke-opacity="0.6" stroke-width="0.8"/><circle cx="505.3" cy="272.2" r="4.9" fill="#f46a00" fill-opacity="0.72" stroke="#b84f00" stroke-opacity="0.6" stroke-width="0.8"/><circle cx="644.6" cy="446.3" r="4.9" fill="#e8578a" fill-opacity="0.72" stroke="#b8406a" stroke-opacity="0.6" stroke-width="0.8"/><circle cx="504.4" cy="611.9" r="4.9" fill="#f46a00" fill-opacity="0.72" stroke="#b84f00" stroke-opacity="0.6" stroke-width="0.8"/><circle cx="555.4" cy="587.5" r="4.9" fill="#0a6fe0" fill-opacity="0.72" stroke="#0046a8" stroke-opacity="0.6" stroke-width="0.8"/><circle cx="347.6" cy="608.7" r="4.9" fill="#f46a00" fill-opacity="0.72" stroke="#b84f00" stroke-opacity="0.6" stroke-width="0.8"/><circle cx="672.9" cy="380.2" r="4.9" fill="#0a6fe0" fill-opacity="0.72" stroke="#0046a8" stroke-opacity="0.6" stroke-width="0.8"/><circle cx="325.1" cy="531.2" r="4.9" fill="#2e2e2e" fill-opacity="0.72" stroke="#000" stroke-opacity="0.6" stroke-width="0.8"/><circle cx="468.1" cy="534.7" r="4.9" fill="#e8578a" fill-opacity="0.72" stroke="#b8406a" stroke-opacity="0.6" stroke-width="0.8"/><circle cx="580.5" cy="458.1" r="4.9" fill="#0a6fe0" fill-opacity="0.72" stroke="#0046a8" stroke-opacity="0.6" stroke-width="0.8"/><circle cx="539.2" cy="387.2" r="4.9" fill="#0a6fe0" fill-opacity="0.72" stroke="#0046a8" stroke-opacity="0.6" stroke-width="0.8"/><circle cx="437.7" cy="594.4" r="4.9" fill="#0a6fe0" fill-opacity="0.72" stroke="#0046a8" stroke-opacity="0.6" stroke-width="0.8"/><circle cx="601.8" cy="342.5" r="4.9" fill="#f46a00" fill-opacity="0.72" stroke="#b84f00" stroke-opacity="0.6" stroke-width="0.8"/><circle cx="456.4" cy="552.9" r="4.9" fill="#0a6fe0" fill-opacity="0.72" stroke="#0046a8" stroke-opacity="0.6" stroke-width="0.8"/><circle cx="478.2" cy="618.1" r="4.9" fill="#f46a00" fill-opacity="0.72" stroke="#b84f00" stroke-opacity="0.6" stroke-width="0.8"/><circle cx="487.4" cy="547.9" r="4.9" fill="#0a6fe0" fill-opacity="0.72" stroke="#0046a8" stroke-opacity="0.6" stroke-width="0.8"/><circle cx="579.5" cy="353.6" r="4.9" fill="#f46a00" fill-opacity="0.72" stroke="#b84f00" stroke-opacity="0.6" stroke-width="0.8"/><circle cx="607.8" cy="419.7" r="4.9" fill="#f46a00" fill-opacity="0.72" stroke="#b84f00" stroke-opacity="0.6" stroke-width="0.8"/><circle cx="516.1" cy="300.1" r="4.9" fill="#f46a00" fill-opacity="0.72" stroke="#b84f00" stroke-opacity="0.6" stroke-width="0.8"/><circle cx="410.8" cy="647.2" r="4.9" fill="#e8578a" fill-opacity="0.72" stroke="#b8406a" stroke-opacity="0.6" stroke-width="0.8"/><circle cx="425.1" cy="642.2" r="4.9" fill="#e8578a" fill-opacity="0.72" stroke="#b8406a" stroke-opacity="0.6" stroke-width="0.8"/><circle cx="648.9" cy="490.1" r="4.9" fill="#0a6fe0" fill-opacity="0.72" stroke="#0046a8" stroke-opacity="0.6" stroke-width="0.8"/><circle cx="396.6" cy="455.0" r="4.9" fill="#2e2e2e" fill-opacity="0.72" stroke="#000" stroke-opacity="0.6" stroke-width="0.8"/><circle cx="416.2" cy="403.7" r="4.9" fill="#e8578a" fill-opacity="0.72" stroke="#b8406a" stroke-opacity="0.6" stroke-width="0.8"/><circle cx="528.0" cy="309.0" r="4.9" fill="#e8578a" fill-opacity="0.72" stroke="#b8406a" stroke-opacity="0.6" stroke-width="0.8"/><circle cx="535.7" cy="430.0" r="4.9" fill="#0a6fe0" fill-opacity="0.72" stroke="#0046a8" stroke-opacity="0.6" stroke-width="0.8"/><circle cx="359.1" cy="607.7" r="4.9" fill="#0b2a5a" fill-opacity="0.72" stroke="#001030" stroke-opacity="0.6" stroke-width="0.8"/><circle cx="567.5" cy="327.0" r="4.9" fill="#0a6fe0" fill-opacity="0.72" stroke="#0046a8" stroke-opacity="0.6" stroke-width="0.8"/><circle cx="642.1" cy="484.9" r="4.9" fill="#e8578a" fill-opacity="0.72" stroke="#b8406a" stroke-opacity="0.6" stroke-width="0.8"/><circle cx="400.2" cy="552.5" r="4.9" fill="#f46a00" fill-opacity="0.72" stroke="#b84f00" stroke-opacity="0.6" stroke-width="0.8"/><circle cx="581.0" cy="314.0" r="4.9" fill="#0a6fe0" fill-opacity="0.72" stroke="#0046a8" stroke-opacity="0.6" stroke-width="0.8"/><circle cx="312.8" cy="540.5" r="4.9" fill="#e8578a" fill-opacity="0.72" stroke="#b8406a" stroke-opacity="0.6" stroke-width="0.8"/><circle cx="578.7" cy="537.0" r="4.9" fill="#f46a00" fill-opacity="0.72" stroke="#b84f00" stroke-opacity="0.6" stroke-width="0.8"/><circle cx="539.7" cy="398.9" r="4.9" fill="#0a6fe0" fill-opacity="0.72" stroke="#0046a8" stroke-opacity="0.6" stroke-width="0.8"/><circle cx="526.3" cy="375.0" r="4.9" fill="#e8578a" fill-opacity="0.72" stroke="#b8406a" stroke-opacity="0.6" stroke-width="0.8"/><circle cx="434.0" cy="573.9" r="4.9" fill="#0b2a5a" fill-opacity="0.72" stroke="#001030" stroke-opacity="0.6" stroke-width="0.8"/><circle cx="409.8" cy="404.7" r="4.9" fill="#e8578a" fill-opacity="0.72" stroke="#b8406a" stroke-opacity="0.6" stroke-width="0.8"/><circle cx="351.4" cy="599.9" r="4.9" fill="#e8578a" fill-opacity="0.72" stroke="#b8406a" stroke-opacity="0.6" stroke-width="0.8"/><circle cx="498.9" cy="375.0" r="4.9" fill="#0a6fe0" fill-opacity="0.72" stroke="#0046a8" stroke-opacity="0.6" stroke-width="0.8"/><circle cx="474.9" cy="545.7" r="4.9" fill="#f46a00" fill-opacity="0.72" stroke="#b84f00" stroke-opacity="0.6" stroke-width="0.8"/><circle cx="600.8" cy="354.6" r="4.9" fill="#f46a00" fill-opacity="0.72" stroke="#b84f00" stroke-opacity="0.6" stroke-width="0.8"/><circle cx="613.8" cy="301.3" r="4.9" fill="#0a6fe0" fill-opacity="0.72" stroke="#0046a8" stroke-opacity="0.6" stroke-width="0.8"/><circle cx="489.5" cy="570.2" r="4.9" fill="#f46a00" fill-opacity="0.72" stroke="#b84f00" stroke-opacity="0.6" stroke-width="0.8"/><circle cx="639.3" cy="423.2" r="4.9" fill="#0a6fe0" fill-opacity="0.72" stroke="#0046a8" stroke-opacity="0.6" stroke-width="0.8"/><circle cx="482.6" cy="337.3" r="4.9" fill="#0a6fe0" fill-opacity="0.72" stroke="#0046a8" stroke-opacity="0.6" stroke-width="0.8"/><circle cx="563.1" cy="586.4" r="4.9" fill="#e8578a" fill-opacity="0.72" stroke="#b8406a" stroke-opacity="0.6" stroke-width="0.8"/><circle cx="617.8" cy="523.3" r="4.9" fill="#0a6fe0" fill-opacity="0.72" stroke="#0046a8" stroke-opacity="0.6" stroke-width="0.8"/><circle cx="360.6" cy="601.5" r="4.9" fill="#0a6fe0" fill-opacity="0.72" stroke="#0046a8" stroke-opacity="0.6" stroke-width="0.8"/><circle cx="577.8" cy="540.6" r="4.9" fill="#0a6fe0" fill-opacity="0.72" stroke="#0046a8" stroke-opacity="0.6" stroke-width="0.8"/><circle cx="614.8" cy="305.4" r="4.9" fill="#f46a00" fill-opacity="0.72" stroke="#b84f00" stroke-opacity="0.6" stroke-width="0.8"/><circle cx="502.1" cy="374.4" r="4.9" fill="#f46a00" fill-opacity="0.72" stroke="#b84f00" stroke-opacity="0.6" stroke-width="0.8"/><circle cx="590.6" cy="443.8" r="4.9" fill="#2e2e2e" fill-opacity="0.72" stroke="#000" stroke-opacity="0.6" stroke-width="0.8"/><circle cx="546.3" cy="546.7" r="4.9" fill="#0a6fe0" fill-opacity="0.72" stroke="#0046a8" stroke-opacity="0.6" stroke-width="0.8"/><circle cx="661.0" cy="379.4" r="4.9" fill="#2e2e2e" fill-opacity="0.72" stroke="#000" stroke-opacity="0.6" stroke-width="0.8"/><circle cx="420.1" cy="411.1" r="4.9" fill="#f46a00" fill-opacity="0.72" stroke="#b84f00" stroke-opacity="0.6" stroke-width="0.8"/><circle cx="613.8" cy="465.2" r="4.9" fill="#f46a00" fill-opacity="0.72" stroke="#b84f00" stroke-opacity="0.6" stroke-width="0.8"/><circle cx="323.0" cy="533.0" r="4.9" fill="#2e2e2e" fill-opacity="0.72" stroke="#000" stroke-opacity="0.6" stroke-width="0.8"/><circle cx="477.3" cy="317.0" r="4.9" fill="#0b2a5a" fill-opacity="0.72" stroke="#001030" stroke-opacity="0.6" stroke-width="0.8"/><circle cx="605.0" cy="425.6" r="4.9" fill="#0a6fe0" fill-opacity="0.72" stroke="#0046a8" stroke-opacity="0.6" stroke-width="0.8"/><circle cx="444.0" cy="546.7" r="4.9" fill="#0a6fe0" fill-opacity="0.72" stroke="#0046a8" stroke-opacity="0.6" stroke-width="0.8"/><circle cx="626.0" cy="446.6" r="4.9" fill="#2e2e2e" fill-opacity="0.72" stroke="#000" stroke-opacity="0.6" stroke-width="0.8"/><circle cx="505.9" cy="585.7" r="4.9" fill="#f46a00" fill-opacity="0.72" stroke="#b84f00" stroke-opacity="0.6" stroke-width="0.8"/><circle cx="598.6" cy="350.4" r="4.9" fill="#0a6fe0" fill-opacity="0.72" stroke="#0046a8" stroke-opacity="0.6" stroke-width="0.8"/><circle cx="305.1" cy="541.3" r="4.9" fill="#f46a00" fill-opacity="0.72" stroke="#b84f00" stroke-opacity="0.6" stroke-width="0.8"/><circle cx="435.1" cy="618.0" r="4.9" fill="#f46a00" fill-opacity="0.72" stroke="#b84f00" stroke-opacity="0.6" stroke-width="0.8"/><circle cx="617.1" cy="515.4" r="4.9" fill="#f46a00" fill-opacity="0.72" stroke="#b84f00" stroke-opacity="0.6" stroke-width="0.8"/><circle cx="642.1" cy="490.9" r="4.9" fill="#e8578a" fill-opacity="0.72" stroke="#b8406a" stroke-opacity="0.6" stroke-width="0.8"/><circle cx="521.4" cy="549.9" r="4.9" fill="#0a6fe0" fill-opacity="0.72" stroke="#0046a8" stroke-opacity="0.6" stroke-width="0.8"/><circle cx="385.6" cy="600.5" r="4.9" fill="#0a6fe0" fill-opacity="0.72" stroke="#0046a8" stroke-opacity="0.6" stroke-width="0.8"/><circle cx="422.1" cy="409.1" r="4.9" fill="#f46a00" fill-opacity="0.72" stroke="#b84f00" stroke-opacity="0.6" stroke-width="0.8"/><circle cx="589.8" cy="308.2" r="4.9" fill="#f46a00" fill-opacity="0.72" stroke="#b84f00" stroke-opacity="0.6" stroke-width="0.8"/><circle cx="527.6" cy="551.1" r="4.9" fill="#e8578a" fill-opacity="0.72" stroke="#b8406a" stroke-opacity="0.6" stroke-width="0.8"/><circle cx="303.5" cy="534.3" r="4.9" fill="#0a6fe0" fill-opacity="0.72" stroke="#0046a8" stroke-opacity="0.6" stroke-width="0.8"/><circle cx="619.8" cy="478.9" r="4.9" fill="#f46a00" fill-opacity="0.72" stroke="#b84f00" stroke-opacity="0.6" stroke-width="0.8"/><circle cx="394.1" cy="460.9" r="4.9" fill="#f46a00" fill-opacity="0.72" stroke="#b84f00" stroke-opacity="0.6" stroke-width="0.8"/><circle cx="607.1" cy="419.9" r="4.9" fill="#f46a00" fill-opacity="0.72" stroke="#b84f00" stroke-opacity="0.6" stroke-width="0.8"/><circle cx="404.5" cy="649.6" r="4.9" fill="#0a6fe0" fill-opacity="0.72" stroke="#0046a8" stroke-opacity="0.6" stroke-width="0.8"/><circle cx="465.9" cy="560.1" r="4.9" fill="#e8578a" fill-opacity="0.72" stroke="#b8406a" stroke-opacity="0.6" stroke-width="0.8"/><circle cx="433.2" cy="562.1" r="4.9" fill="#f46a00" fill-opacity="0.72" stroke="#b84f00" stroke-opacity="0.6" stroke-width="0.8"/><circle cx="533.0" cy="300.6" r="4.9" fill="#2e2e2e" fill-opacity="0.72" stroke="#000" stroke-opacity="0.6" stroke-width="0.8"/><circle cx="607.0" cy="351.1" r="4.9" fill="#e8578a" fill-opacity="0.72" stroke="#b8406a" stroke-opacity="0.6" stroke-width="0.8"/><circle cx="645.5" cy="401.7" r="4.9" fill="#e8578a" fill-opacity="0.72" stroke="#b8406a" stroke-opacity="0.6" stroke-width="0.8"/><circle cx="310.2" cy="531.8" r="4.9" fill="#e8578a" fill-opacity="0.72" stroke="#b8406a" stroke-opacity="0.6" stroke-width="0.8"/><circle cx="510.6" cy="541.3" r="4.9" fill="#f46a00" fill-opacity="0.72" stroke="#b84f00" stroke-opacity="0.6" stroke-width="0.8"/><circle cx="476.6" cy="317.6" r="4.9" fill="#0b2a5a" fill-opacity="0.72" stroke="#001030" stroke-opacity="0.6" stroke-width="0.8"/><circle cx="347.8" cy="534.2" r="4.9" fill="#f46a00" fill-opacity="0.72" stroke="#b84f00" stroke-opacity="0.6" stroke-width="0.8"/><circle cx="522.9" cy="547.9" r="4.9" fill="#0a6fe0" fill-opacity="0.72" stroke="#0046a8" stroke-opacity="0.6" stroke-width="0.8"/><circle cx="583.0" cy="337.1" r="4.9" fill="#f46a00" fill-opacity="0.72" stroke="#b84f00" stroke-opacity="0.6" stroke-width="0.8"/><circle cx="371.4" cy="540.4" r="4.9" fill="#2e2e2e" fill-opacity="0.72" stroke="#000" stroke-opacity="0.6" stroke-width="0.8"/><circle cx="538.8" cy="305.1" r="4.9" fill="#2e2e2e" fill-opacity="0.72" stroke="#000" stroke-opacity="0.6" stroke-width="0.8"/><circle cx="642.1" cy="453.2" r="4.9" fill="#2e2e2e" fill-opacity="0.72" stroke="#000" stroke-opacity="0.6" stroke-width="0.8"/><circle cx="480.8" cy="558.7" r="4.9" fill="#f46a00" fill-opacity="0.72" stroke="#b84f00" stroke-opacity="0.6" stroke-width="0.8"/><circle cx="556.9" cy="544.8" r="4.9" fill="#0a6fe0" fill-opacity="0.72" stroke="#0046a8" stroke-opacity="0.6" stroke-width="0.8"/><circle cx="650.6" cy="474.6" r="4.9" fill="#0a6fe0" fill-opacity="0.72" stroke="#0046a8" stroke-opacity="0.6" stroke-width="0.8"/><circle cx="538.2" cy="600.6" r="4.9" fill="#f46a00" fill-opacity="0.72" stroke="#b84f00" stroke-opacity="0.6" stroke-width="0.8"/><circle cx="650.6" cy="486.6" r="4.9" fill="#2e2e2e" fill-opacity="0.72" stroke="#000" stroke-opacity="0.6" stroke-width="0.8"/><circle cx="532.6" cy="552.7" r="4.9" fill="#f46a00" fill-opacity="0.72" stroke="#b84f00" stroke-opacity="0.6" stroke-width="0.8"/><circle cx="628.4" cy="482.3" r="4.9" fill="#2e2e2e" fill-opacity="0.72" stroke="#000" stroke-opacity="0.6" stroke-width="0.8"/><circle cx="530.6" cy="550.2" r="4.9" fill="#f46a00" fill-opacity="0.72" stroke="#b84f00" stroke-opacity="0.6" stroke-width="0.8"/><circle cx="498.9" cy="311.6" r="4.9" fill="#f46a00" fill-opacity="0.72" stroke="#b84f00" stroke-opacity="0.6" stroke-width="0.8"/><circle cx="599.8" cy="528.8" r="4.9" fill="#2e2e2e" fill-opacity="0.72" stroke="#000" stroke-opacity="0.6" stroke-width="0.8"/><circle cx="580.0" cy="541.7" r="4.9" fill="#0a6fe0" fill-opacity="0.72" stroke="#0046a8" stroke-opacity="0.6" stroke-width="0.8"/><circle cx="357.9" cy="545.8" r="4.9" fill="#2e2e2e" fill-opacity="0.72" stroke="#000" stroke-opacity="0.6" stroke-width="0.8"/><circle cx="518.7" cy="363.6" r="4.9" fill="#f46a00" fill-opacity="0.72" stroke="#b84f00" stroke-opacity="0.6" stroke-width="0.8"/><circle cx="303.1" cy="536.4" r="4.9" fill="#0a6fe0" fill-opacity="0.72" stroke="#0046a8" stroke-opacity="0.6" stroke-width="0.8"/><circle cx="312.0" cy="529.7" r="4.9" fill="#e8578a" fill-opacity="0.72" stroke="#b8406a" stroke-opacity="0.6" stroke-width="0.8"/><circle cx="357.6" cy="541.2" r="4.9" fill="#0a6fe0" fill-opacity="0.72" stroke="#0046a8" stroke-opacity="0.6" stroke-width="0.8"/><circle cx="488.2" cy="569.5" r="4.9" fill="#f46a00" fill-opacity="0.72" stroke="#b84f00" stroke-opacity="0.6" stroke-width="0.8"/><circle cx="617.3" cy="483.4" r="4.9" fill="#f46a00" fill-opacity="0.72" stroke="#b84f00" stroke-opacity="0.6" stroke-width="0.8"/><circle cx="350.9" cy="617.8" r="4.9" fill="#0a6fe0" fill-opacity="0.72" stroke="#0046a8" stroke-opacity="0.6" stroke-width="0.8"/><circle cx="517.9" cy="609.9" r="4.9" fill="#f46a00" fill-opacity="0.72" stroke="#b84f00" stroke-opacity="0.6" stroke-width="0.8"/><circle cx="601.1" cy="344.4" r="4.9" fill="#f46a00" fill-opacity="0.72" stroke="#b84f00" stroke-opacity="0.6" stroke-width="0.8"/><circle cx="346.7" cy="542.8" r="4.9" fill="#e8578a" fill-opacity="0.72" stroke="#b8406a" stroke-opacity="0.6" stroke-width="0.8"/><circle cx="485.2" cy="344.2" r="4.9" fill="#f46a00" fill-opacity="0.72" stroke="#b84f00" stroke-opacity="0.6" stroke-width="0.8"/><circle cx="420.8" cy="539.7" r="4.9" fill="#0a6fe0" fill-opacity="0.72" stroke="#0046a8" stroke-opacity="0.6" stroke-width="0.8"/><circle cx="668.4" cy="382.3" r="4.9" fill="#0a6fe0" fill-opacity="0.72" stroke="#0046a8" stroke-opacity="0.6" stroke-width="0.8"/><circle cx="460.6" cy="615.3" r="4.9" fill="#2e2e2e" fill-opacity="0.72" stroke="#000" stroke-opacity="0.6" stroke-width="0.8"/><circle cx="629.4" cy="503.1" r="4.9" fill="#e8578a" fill-opacity="0.72" stroke="#b8406a" stroke-opacity="0.6" stroke-width="0.8"/><circle cx="527.9" cy="373.3" r="4.9" fill="#e8578a" fill-opacity="0.72" stroke="#b8406a" stroke-opacity="0.6" stroke-width="0.8"/><circle cx="607.7" cy="414.5" r="4.9" fill="#0a6fe0" fill-opacity="0.72" stroke="#0046a8" stroke-opacity="0.6" stroke-width="0.8"/><circle cx="607.0" cy="429.7" r="4.9" fill="#f46a00" fill-opacity="0.72" stroke="#b84f00" stroke-opacity="0.6" stroke-width="0.8"/><circle cx="453.8" cy="612.5" r="4.9" fill="#2e2e2e" fill-opacity="0.72" stroke="#000" stroke-opacity="0.6" stroke-width="0.8"/><circle cx="440.6" cy="325.3" r="4.9" fill="#f46a00" fill-opacity="0.72" stroke="#b84f00" stroke-opacity="0.6" stroke-width="0.8"/><circle cx="472.0" cy="608.1" r="4.9" fill="#f46a00" fill-opacity="0.72" stroke="#b84f00" stroke-opacity="0.6" stroke-width="0.8"/><circle cx="660.9" cy="476.3" r="4.9" fill="#e8578a" fill-opacity="0.72" stroke="#b8406a" stroke-opacity="0.6" stroke-width="0.8"/><circle cx="340.6" cy="607.7" r="4.9" fill="#f46a00" fill-opacity="0.72" stroke="#b84f00" stroke-opacity="0.6" stroke-width="0.8"/><circle cx="418.0" cy="409.7" r="4.9" fill="#0a6fe0" fill-opacity="0.72" stroke="#0046a8" stroke-opacity="0.6" stroke-width="0.8"/><circle cx="645.5" cy="409.5" r="4.9" fill="#0a6fe0" fill-opacity="0.72" stroke="#0046a8" stroke-opacity="0.6" stroke-width="0.8"/><circle cx="419.3" cy="410.7" r="4.9" fill="#f46a00" fill-opacity="0.72" stroke="#b84f00" stroke-opacity="0.6" stroke-width="0.8"/><circle cx="433.6" cy="573.0" r="4.9" fill="#0b2a5a" fill-opacity="0.72" stroke="#001030" stroke-opacity="0.6" stroke-width="0.8"/><circle cx="459.6" cy="617.3" r="4.9" fill="#2e2e2e" fill-opacity="0.72" stroke="#000" stroke-opacity="0.6" stroke-width="0.8"/><circle cx="636.9" cy="459.2" r="4.9" fill="#2e2e2e" fill-opacity="0.72" stroke="#000" stroke-opacity="0.6" stroke-width="0.8"/><circle cx="485.8" cy="307.8" r="4.9" fill="#e8578a" fill-opacity="0.72" stroke="#b8406a" stroke-opacity="0.6" stroke-width="0.8"/><circle cx="516.0" cy="373.4" r="4.9" fill="#e8578a" fill-opacity="0.72" stroke="#b8406a" stroke-opacity="0.6" stroke-width="0.8"/><circle cx="552.3" cy="581.8" r="4.9" fill="#f46a00" fill-opacity="0.72" stroke="#b84f00" stroke-opacity="0.6" stroke-width="0.8"/><circle cx="458.8" cy="611.8" r="4.9" fill="#2e2e2e" fill-opacity="0.72" stroke="#000" stroke-opacity="0.6" stroke-width="0.8"/><circle cx="394.3" cy="648.9" r="4.9" fill="#e8578a" fill-opacity="0.72" stroke="#b8406a" stroke-opacity="0.6" stroke-width="0.8"/><circle cx="587.5" cy="334.7" r="4.9" fill="#2e2e2e" fill-opacity="0.72" stroke="#000" stroke-opacity="0.6" stroke-width="0.8"/><circle cx="505.8" cy="279.9" r="4.9" fill="#f46a00" fill-opacity="0.72" stroke="#b84f00" stroke-opacity="0.6" stroke-width="0.8"/><circle cx="412.3" cy="416.0" r="4.9" fill="#e8578a" fill-opacity="0.72" stroke="#b8406a" stroke-opacity="0.6" stroke-width="0.8"/><circle cx="461.2" cy="561.0" r="4.9" fill="#e8578a" fill-opacity="0.72" stroke="#b8406a" stroke-opacity="0.6" stroke-width="0.8"/><circle cx="544.5" cy="548.9" r="4.9" fill="#0a6fe0" fill-opacity="0.72" stroke="#0046a8" stroke-opacity="0.6" stroke-width="0.8"/><circle cx="624.2" cy="470.5" r="4.9" fill="#e8578a" fill-opacity="0.72" stroke="#b8406a" stroke-opacity="0.6" stroke-width="0.8"/><circle cx="630.0" cy="440.3" r="4.9" fill="#e8578a" fill-opacity="0.72" stroke="#b8406a" stroke-opacity="0.6" stroke-width="0.8"/><circle cx="547.6" cy="547.9" r="4.9" fill="#0a6fe0" fill-opacity="0.72" stroke="#0046a8" stroke-opacity="0.6" stroke-width="0.8"/><circle cx="500.6" cy="306.5" r="4.9" fill="#f46a00" fill-opacity="0.72" stroke="#b84f00" stroke-opacity="0.6" stroke-width="0.8"/><circle cx="357.6" cy="606.1" r="4.9" fill="#0b2a5a" fill-opacity="0.72" stroke="#001030" stroke-opacity="0.6" stroke-width="0.8"/><circle cx="399.5" cy="542.0" r="4.9" fill="#2e2e2e" fill-opacity="0.72" stroke="#000" stroke-opacity="0.6" stroke-width="0.8"/><circle cx="620.6" cy="448.9" r="4.9" fill="#f46a00" fill-opacity="0.72" stroke="#b84f00" stroke-opacity="0.6" stroke-width="0.8"/><circle cx="495.1" cy="578.7" r="4.9" fill="#2e2e2e" fill-opacity="0.72" stroke="#000" stroke-opacity="0.6" stroke-width="0.8"/><circle cx="609.5" cy="412.9" r="4.9" fill="#0a6fe0" fill-opacity="0.72" stroke="#0046a8" stroke-opacity="0.6" stroke-width="0.8"/><circle cx="402.0" cy="646.1" r="4.9" fill="#0a6fe0" fill-opacity="0.72" stroke="#0046a8" stroke-opacity="0.6" stroke-width="0.8"/><circle cx="506.0" cy="277.0" r="4.9" fill="#0a6fe0" fill-opacity="0.72" stroke="#0046a8" stroke-opacity="0.6" stroke-width="0.8"/><circle cx="385.4" cy="600.9" r="4.9" fill="#0a6fe0" fill-opacity="0.72" stroke="#0046a8" stroke-opacity="0.6" stroke-width="0.8"/><circle cx="695.8" cy="448.1" r="4.9" fill="#0a6fe0" fill-opacity="0.72" stroke="#0046a8" stroke-opacity="0.6" stroke-width="0.8"/><circle cx="593.9" cy="537.0" r="4.9" fill="#0a6fe0" fill-opacity="0.72" stroke="#0046a8" stroke-opacity="0.6" stroke-width="0.8"/><circle cx="461.4" cy="620.7" r="4.9" fill="#e8578a" fill-opacity="0.72" stroke="#b8406a" stroke-opacity="0.6" stroke-width="0.8"/><circle cx="403.1" cy="450.0" r="4.9" fill="#f46a00" fill-opacity="0.72" stroke="#b84f00" stroke-opacity="0.6" stroke-width="0.8"/><circle cx="450.0" cy="269.6" r="4.9" fill="#0a6fe0" fill-opacity="0.72" stroke="#0046a8" stroke-opacity="0.6" stroke-width="0.8"/><circle cx="465.6" cy="534.7" r="4.9" fill="#e8578a" fill-opacity="0.72" stroke="#b8406a" stroke-opacity="0.6" stroke-width="0.8"/><circle cx="633.5" cy="496.1" r="4.9" fill="#0a6fe0" fill-opacity="0.72" stroke="#0046a8" stroke-opacity="0.6" stroke-width="0.8"/><circle cx="352.3" cy="528.2" r="4.9" fill="#0a6fe0" fill-opacity="0.72" stroke="#0046a8" stroke-opacity="0.6" stroke-width="0.8"/><circle cx="652.4" cy="479.8" r="4.9" fill="#2e2e2e" fill-opacity="0.72" stroke="#000" stroke-opacity="0.6" stroke-width="0.8"/><circle cx="482.6" cy="542.2" r="4.9" fill="#0a6fe0" fill-opacity="0.72" stroke="#0046a8" stroke-opacity="0.6" stroke-width="0.8"/><circle cx="537.4" cy="390.6" r="4.9" fill="#2e2e2e" fill-opacity="0.72" stroke="#000" stroke-opacity="0.6" stroke-width="0.8"/><circle cx="606.9" cy="437.8" r="4.9" fill="#e8578a" fill-opacity="0.72" stroke="#b8406a" stroke-opacity="0.6" stroke-width="0.8"/><circle cx="469.0" cy="606.1" r="4.9" fill="#e8578a" fill-opacity="0.72" stroke="#b8406a" stroke-opacity="0.6" stroke-width="0.8"/><circle cx="552.4" cy="592.0" r="4.9" fill="#e8578a" fill-opacity="0.72" stroke="#b8406a" stroke-opacity="0.6" stroke-width="0.8"/><circle cx="521.6" cy="611.7" r="4.9" fill="#f46a00" fill-opacity="0.72" stroke="#b84f00" stroke-opacity="0.6" stroke-width="0.8"/><circle cx="495.1" cy="546.3" r="4.9" fill="#2e2e2e" fill-opacity="0.72" stroke="#000" stroke-opacity="0.6" stroke-width="0.8"/><circle cx="416.7" cy="418.2" r="4.9" fill="#e8578a" fill-opacity="0.72" stroke="#b8406a" stroke-opacity="0.6" stroke-width="0.8"/><circle cx="585.9" cy="460.3" r="4.9" fill="#f46a00" fill-opacity="0.72" stroke="#b84f00" stroke-opacity="0.6" stroke-width="0.8"/><circle cx="464.3" cy="555.6" r="4.9" fill="#f46a00" fill-opacity="0.72" stroke="#b84f00" stroke-opacity="0.6" stroke-width="0.8"/><circle cx="490.7" cy="304.2" r="4.9" fill="#f46a00" fill-opacity="0.72" stroke="#b84f00" stroke-opacity="0.6" stroke-width="0.8"/><circle cx="492.8" cy="563.3" r="4.9" fill="#2e2e2e" fill-opacity="0.72" stroke="#000" stroke-opacity="0.6" stroke-width="0.8"/><circle cx="408.5" cy="551.3" r="4.9" fill="#f46a00" fill-opacity="0.72" stroke="#b84f00" stroke-opacity="0.6" stroke-width="0.8"/><circle cx="539.9" cy="546.3" r="4.9" fill="#e8578a" fill-opacity="0.72" stroke="#b8406a" stroke-opacity="0.6" stroke-width="0.8"/><circle cx="477.2" cy="617.9" r="4.9" fill="#f46a00" fill-opacity="0.72" stroke="#b84f00" stroke-opacity="0.6" stroke-width="0.8"/><circle cx="479.2" cy="366.5" r="4.9" fill="#f46a00" fill-opacity="0.72" stroke="#b84f00" stroke-opacity="0.6" stroke-width="0.8"/><circle cx="346.7" cy="607.7" r="4.9" fill="#f46a00" fill-opacity="0.72" stroke="#b84f00" stroke-opacity="0.6" stroke-width="0.8"/><circle cx="359.1" cy="535.9" r="4.9" fill="#e8578a" fill-opacity="0.72" stroke="#b8406a" stroke-opacity="0.6" stroke-width="0.8"/><circle cx="409.0" cy="647.3" r="4.9" fill="#e8578a" fill-opacity="0.72" stroke="#b8406a" stroke-opacity="0.6" stroke-width="0.8"/><circle cx="372.7" cy="602.4" r="4.9" fill="#f46a00" fill-opacity="0.72" stroke="#b84f00" stroke-opacity="0.6" stroke-width="0.8"/><circle cx="543.9" cy="399.0" r="4.9" fill="#e8578a" fill-opacity="0.72" stroke="#b8406a" stroke-opacity="0.6" stroke-width="0.8"/><circle cx="394.4" cy="648.7" r="4.9" fill="#e8578a" fill-opacity="0.72" stroke="#b8406a" stroke-opacity="0.6" stroke-width="0.8"/><circle cx="371.1" cy="603.1" r="4.9" fill="#2e2e2e" fill-opacity="0.72" stroke="#000" stroke-opacity="0.6" stroke-width="0.8"/><circle cx="394.1" cy="547.4" r="4.9" fill="#f46a00" fill-opacity="0.72" stroke="#b84f00" stroke-opacity="0.6" stroke-width="0.8"/><circle cx="653.2" cy="478.0" r="4.9" fill="#2e2e2e" fill-opacity="0.72" stroke="#000" stroke-opacity="0.6" stroke-width="0.8"/><circle cx="616.3" cy="481.5" r="4.9" fill="#f46a00" fill-opacity="0.72" stroke="#b84f00" stroke-opacity="0.6" stroke-width="0.8"/><circle cx="587.6" cy="340.3" r="4.9" fill="#2e2e2e" fill-opacity="0.72" stroke="#000" stroke-opacity="0.6" stroke-width="0.8"/><circle cx="417.8" cy="546.7" r="4.9" fill="#2e2e2e" fill-opacity="0.72" stroke="#000" stroke-opacity="0.6" stroke-width="0.8"/><circle cx="581.2" cy="320.7" r="4.9" fill="#0a6fe0" fill-opacity="0.72" stroke="#0046a8" stroke-opacity="0.6" stroke-width="0.8"/><circle cx="451.5" cy="326.3" r="4.9" fill="#0a6fe0" fill-opacity="0.72" stroke="#0046a8" stroke-opacity="0.6" stroke-width="0.8"/><circle cx="515.2" cy="300.5" r="4.9" fill="#f46a00" fill-opacity="0.72" stroke="#b84f00" stroke-opacity="0.6" stroke-width="0.8"/><circle cx="648.5" cy="475.4" r="4.9" fill="#0a6fe0" fill-opacity="0.72" stroke="#0046a8" stroke-opacity="0.6" stroke-width="0.8"/><circle cx="434.8" cy="599.8" r="4.9" fill="#f46a00" fill-opacity="0.72" stroke="#b84f00" stroke-opacity="0.6" stroke-width="0.8"/><circle cx="600.0" cy="448.0" r="4.9" fill="#e8578a" fill-opacity="0.72" stroke="#b8406a" stroke-opacity="0.6" stroke-width="0.8"/><circle cx="413.0" cy="638.9" r="4.9" fill="#f46a00" fill-opacity="0.72" stroke="#b84f00" stroke-opacity="0.6" stroke-width="0.8"/><circle cx="640.4" cy="465.2" r="4.9" fill="#e8578a" fill-opacity="0.72" stroke="#b8406a" stroke-opacity="0.6" stroke-width="0.8"/><circle cx="640.4" cy="412.9" r="4.9" fill="#2e2e2e" fill-opacity="0.72" stroke="#000" stroke-opacity="0.6" stroke-width="0.8"/><circle cx="442.8" cy="617.4" r="4.9" fill="#2e2e2e" fill-opacity="0.72" stroke="#000" stroke-opacity="0.6" stroke-width="0.8"/><circle cx="396.1" cy="447.8" r="4.9" fill="#f46a00" fill-opacity="0.72" stroke="#b84f00" stroke-opacity="0.6" stroke-width="0.8"/><circle cx="624.9" cy="446.3" r="4.9" fill="#2e2e2e" fill-opacity="0.72" stroke="#000" stroke-opacity="0.6" stroke-width="0.8"/><circle cx="366.8" cy="608.6" r="4.9" fill="#f46a00" fill-opacity="0.72" stroke="#b84f00" stroke-opacity="0.6" stroke-width="0.8"/><circle cx="503.9" cy="296.4" r="4.9" fill="#e8578a" fill-opacity="0.72" stroke="#b8406a" stroke-opacity="0.6" stroke-width="0.8"/><circle cx="617.2" cy="474.6" r="4.9" fill="#0a6fe0" fill-opacity="0.72" stroke="#0046a8" stroke-opacity="0.6" stroke-width="0.8"/><circle cx="648.5" cy="387.1" r="4.9" fill="#2e2e2e" fill-opacity="0.72" stroke="#000" stroke-opacity="0.6" stroke-width="0.8"/><circle cx="526.7" cy="606.3" r="4.9" fill="#e8578a" fill-opacity="0.72" stroke="#b8406a" stroke-opacity="0.6" stroke-width="0.8"/><circle cx="617.2" cy="445.5" r="4.9" fill="#e8578a" fill-opacity="0.72" stroke="#b8406a" stroke-opacity="0.6" stroke-width="0.8"/><circle cx="338.3" cy="533.6" r="4.9" fill="#f46a00" fill-opacity="0.72" stroke="#b84f00" stroke-opacity="0.6" stroke-width="0.8"/><circle cx="513.8" cy="302.4" r="4.9" fill="#2e2e2e" fill-opacity="0.72" stroke="#000" stroke-opacity="0.6" stroke-width="0.8"/><circle cx="591.7" cy="332.8" r="4.9" fill="#f46a00" fill-opacity="0.72" stroke="#b84f00" stroke-opacity="0.6" stroke-width="0.8"/><circle cx="548.6" cy="367.3" r="4.9" fill="#e8578a" fill-opacity="0.72" stroke="#b8406a" stroke-opacity="0.6" stroke-width="0.8"/><circle cx="643.8" cy="472.9" r="4.9" fill="#e8578a" fill-opacity="0.72" stroke="#b8406a" stroke-opacity="0.6" stroke-width="0.8"/><circle cx="489.0" cy="336.8" r="4.9" fill="#f46a00" fill-opacity="0.72" stroke="#b84f00" stroke-opacity="0.6" stroke-width="0.8"/><circle cx="492.9" cy="369.0" r="4.9" fill="#0b2a5a" fill-opacity="0.72" stroke="#001030" stroke-opacity="0.6" stroke-width="0.8"/><circle cx="647.2" cy="382.0" r="4.9" fill="#f46a00" fill-opacity="0.72" stroke="#b84f00" stroke-opacity="0.6" stroke-width="0.8"/><circle cx="447.4" cy="332.2" r="4.9" fill="#2e2e2e" fill-opacity="0.72" stroke="#000" stroke-opacity="0.6" stroke-width="0.8"/><circle cx="590.5" cy="310.7" r="4.9" fill="#f46a00" fill-opacity="0.72" stroke="#b84f00" stroke-opacity="0.6" stroke-width="0.8"/><circle cx="579.5" cy="318.5" r="4.9" fill="#0a6fe0" fill-opacity="0.72" stroke="#0046a8" stroke-opacity="0.6" stroke-width="0.8"/><circle cx="493.8" cy="313.3" r="4.9" fill="#f46a00" fill-opacity="0.72" stroke="#b84f00" stroke-opacity="0.6" stroke-width="0.8"/><circle cx="505.8" cy="373.4" r="4.9" fill="#0a6fe0" fill-opacity="0.72" stroke="#0046a8" stroke-opacity="0.6" stroke-width="0.8"/><circle cx="390.0" cy="535.9" r="4.9" fill="#e8578a" fill-opacity="0.72" stroke="#b8406a" stroke-opacity="0.6" stroke-width="0.8"/><circle cx="509.7" cy="564.0" r="4.9" fill="#e8578a" fill-opacity="0.72" stroke="#b8406a" stroke-opacity="0.6" stroke-width="0.8"/><circle cx="639.1" cy="464.1" r="4.9" fill="#e8578a" fill-opacity="0.72" stroke="#b8406a" stroke-opacity="0.6" stroke-width="0.8"/><circle cx="584.7" cy="339.0" r="4.9" fill="#f46a00" fill-opacity="0.72" stroke="#b84f00" stroke-opacity="0.6" stroke-width="0.8"/><circle cx="538.4" cy="600.3" r="4.9" fill="#f46a00" fill-opacity="0.72" stroke="#b84f00" stroke-opacity="0.6" stroke-width="0.8"/><circle cx="628.4" cy="507.2" r="4.9" fill="#0a6fe0" fill-opacity="0.72" stroke="#0046a8" stroke-opacity="0.6" stroke-width="0.8"/><circle cx="574.0" cy="323.0" r="4.9" fill="#0a6fe0" fill-opacity="0.72" stroke="#0046a8" stroke-opacity="0.6" stroke-width="0.8"/><circle cx="644.9" cy="416.4" r="4.9" fill="#2e2e2e" fill-opacity="0.72" stroke="#000" stroke-opacity="0.6" stroke-width="0.8"/><circle cx="450.9" cy="334.3" r="4.9" fill="#f46a00" fill-opacity="0.72" stroke="#b84f00" stroke-opacity="0.6" stroke-width="0.8"/><circle cx="643.9" cy="403.1" r="4.9" fill="#e8578a" fill-opacity="0.72" stroke="#b8406a" stroke-opacity="0.6" stroke-width="0.8"/><circle cx="530.6" cy="301.3" r="4.9" fill="#0a6fe0" fill-opacity="0.72" stroke="#0046a8" stroke-opacity="0.6" stroke-width="0.8"/><circle cx="661.0" cy="491.5" r="4.9" fill="#e8578a" fill-opacity="0.72" stroke="#b8406a" stroke-opacity="0.6" stroke-width="0.8"/><circle cx="514.3" cy="370.7" r="4.9" fill="#0a6fe0" fill-opacity="0.72" stroke="#0046a8" stroke-opacity="0.6" stroke-width="0.8"/><circle cx="369.9" cy="601.5" r="4.9" fill="#2e2e2e" fill-opacity="0.72" stroke="#000" stroke-opacity="0.6" stroke-width="0.8"/><circle cx="415.1" cy="533.0" r="4.9" fill="#f46a00" fill-opacity="0.72" stroke="#b84f00" stroke-opacity="0.6" stroke-width="0.8"/><circle cx="479.0" cy="619.0" r="4.9" fill="#f46a00" fill-opacity="0.72" stroke="#b84f00" stroke-opacity="0.6" stroke-width="0.8"/><circle cx="352.0" cy="532.0" r="4.9" fill="#2e2e2e" fill-opacity="0.72" stroke="#000" stroke-opacity="0.6" stroke-width="0.8"/><circle cx="530.4" cy="307.1" r="4.9" fill="#e8578a" fill-opacity="0.72" stroke="#b8406a" stroke-opacity="0.6" stroke-width="0.8"/><circle cx="481.7" cy="368.2" r="4.9" fill="#f46a00" fill-opacity="0.72" stroke="#b84f00" stroke-opacity="0.6" stroke-width="0.8"/><circle cx="473.4" cy="354.5" r="4.9" fill="#0b2a5a" fill-opacity="0.72" stroke="#001030" stroke-opacity="0.6" stroke-width="0.8"/><circle cx="444.0" cy="327.0" r="4.9" fill="#0a6fe0" fill-opacity="0.72" stroke="#0046a8" stroke-opacity="0.6" stroke-width="0.8"/><circle cx="413.2" cy="414.5" r="4.9" fill="#e8578a" fill-opacity="0.72" stroke="#b8406a" stroke-opacity="0.6" stroke-width="0.8"/><circle cx="639.9" cy="415.1" r="4.9" fill="#2e2e2e" fill-opacity="0.72" stroke="#000" stroke-opacity="0.6" stroke-width="0.8"/><circle cx="572.1" cy="321.7" r="4.9" fill="#0a6fe0" fill-opacity="0.72" stroke="#0046a8" stroke-opacity="0.6" stroke-width="0.8"/><circle cx="352.9" cy="616.1" r="4.9" fill="#0a6fe0" fill-opacity="0.72" stroke="#0046a8" stroke-opacity="0.6" stroke-width="0.8"/><circle cx="412.3" cy="411.6" r="4.9" fill="#f46a00" fill-opacity="0.72" stroke="#b84f00" stroke-opacity="0.6" stroke-width="0.8"/><circle cx="401.5" cy="451.3" r="4.9" fill="#f46a00" fill-opacity="0.72" stroke="#b84f00" stroke-opacity="0.6" stroke-width="0.8"/><circle cx="595.8" cy="442.0" r="4.9" fill="#0a6fe0" fill-opacity="0.72" stroke="#0046a8" stroke-opacity="0.6" stroke-width="0.8"/><circle cx="339.9" cy="525.3" r="4.9" fill="#e8578a" fill-opacity="0.72" stroke="#b8406a" stroke-opacity="0.6" stroke-width="0.8"/><circle cx="469.3" cy="605.3" r="4.9" fill="#e8578a" fill-opacity="0.72" stroke="#b8406a" stroke-opacity="0.6" stroke-width="0.8"/><circle cx="538.4" cy="544.3" r="4.9" fill="#e8578a" fill-opacity="0.72" stroke="#b8406a" stroke-opacity="0.6" stroke-width="0.8"/><circle cx="505.8" cy="270.4" r="4.9" fill="#e8578a" fill-opacity="0.72" stroke="#b8406a" stroke-opacity="0.6" stroke-width="0.8"/><circle cx="647.5" cy="492.4" r="4.9" fill="#0a6fe0" fill-opacity="0.72" stroke="#0046a8" stroke-opacity="0.6" stroke-width="0.8"/><circle cx="532.3" cy="394.9" r="4.9" fill="#f46a00" fill-opacity="0.72" stroke="#b84f00" stroke-opacity="0.6" stroke-width="0.8"/><circle cx="362.2" cy="596.8" r="4.9" fill="#e8578a" fill-opacity="0.72" stroke="#b8406a" stroke-opacity="0.6" stroke-width="0.8"/><circle cx="430.7" cy="560.9" r="4.9" fill="#f46a00" fill-opacity="0.72" stroke="#b84f00" stroke-opacity="0.6" stroke-width="0.8"/><circle cx="398.4" cy="446.9" r="4.9" fill="#f46a00" fill-opacity="0.72" stroke="#b84f00" stroke-opacity="0.6" stroke-width="0.8"/><circle cx="471.4" cy="606.7" r="4.9" fill="#f46a00" fill-opacity="0.72" stroke="#b84f00" stroke-opacity="0.6" stroke-width="0.8"/><circle cx="514.4" cy="609.5" r="4.9" fill="#0a6fe0" fill-opacity="0.72" stroke="#0046a8" stroke-opacity="0.6" stroke-width="0.8"/><circle cx="442.8" cy="616.8" r="4.9" fill="#2e2e2e" fill-opacity="0.72" stroke="#000" stroke-opacity="0.6" stroke-width="0.8"/><circle cx="461.0" cy="560.6" r="4.9" fill="#e8578a" fill-opacity="0.72" stroke="#b8406a" stroke-opacity="0.6" stroke-width="0.8"/><circle cx="640.4" cy="446.3" r="4.9" fill="#f46a00" fill-opacity="0.72" stroke="#b84f00" stroke-opacity="0.6" stroke-width="0.8"/><circle cx="508.3" cy="580.3" r="4.9" fill="#0a6fe0" fill-opacity="0.72" stroke="#0046a8" stroke-opacity="0.6" stroke-width="0.8"/><circle cx="420.1" cy="640.1" r="4.9" fill="#2e2e2e" fill-opacity="0.72" stroke="#000" stroke-opacity="0.6" stroke-width="0.8"/><circle cx="430.1" cy="569.8" r="4.9" fill="#e8578a" fill-opacity="0.72" stroke="#b8406a" stroke-opacity="0.6" stroke-width="0.8"/><circle cx="522.9" cy="609.6" r="4.9" fill="#f46a00" fill-opacity="0.72" stroke="#b84f00" stroke-opacity="0.6" stroke-width="0.8"/><circle cx="662.7" cy="491.8" r="4.9" fill="#e8578a" fill-opacity="0.72" stroke="#b8406a" stroke-opacity="0.6" stroke-width="0.8"/><circle cx="508.2" cy="616.0" r="4.9" fill="#0a6fe0" fill-opacity="0.72" stroke="#0046a8" stroke-opacity="0.6" stroke-width="0.8"/><circle cx="619.7" cy="449.0" r="4.9" fill="#f46a00" fill-opacity="0.72" stroke="#b84f00" stroke-opacity="0.6" stroke-width="0.8"/><circle cx="349.8" cy="615.4" r="4.9" fill="#0a6fe0" fill-opacity="0.72" stroke="#0046a8" stroke-opacity="0.6" stroke-width="0.8"/><circle cx="545.3" cy="550.9" r="4.9" fill="#0a6fe0" fill-opacity="0.72" stroke="#0046a8" stroke-opacity="0.6" stroke-width="0.8"/><circle cx="508.4" cy="539.8" r="4.9" fill="#0a6fe0" fill-opacity="0.72" stroke="#0046a8" stroke-opacity="0.6" stroke-width="0.8"/><circle cx="489.5" cy="337.3" r="4.9" fill="#f46a00" fill-opacity="0.72" stroke="#b84f00" stroke-opacity="0.6" stroke-width="0.8"/><circle cx="322.8" cy="519.7" r="4.9" fill="#f46a00" fill-opacity="0.72" stroke="#b84f00" stroke-opacity="0.6" stroke-width="0.8"/><circle cx="589.3" cy="444.2" r="4.9" fill="#2e2e2e" fill-opacity="0.72" stroke="#000" stroke-opacity="0.6" stroke-width="0.8"/><circle cx="526.3" cy="306.5" r="4.9" fill="#e8578a" fill-opacity="0.72" stroke="#b8406a" stroke-opacity="0.6" stroke-width="0.8"/><circle cx="475.1" cy="611.1" r="4.9" fill="#0a6fe0" fill-opacity="0.72" stroke="#0046a8" stroke-opacity="0.6" stroke-width="0.8"/><circle cx="478.9" cy="557.1" r="4.9" fill="#f46a00" fill-opacity="0.72" stroke="#b84f00" stroke-opacity="0.6" stroke-width="0.8"/><circle cx="569.4" cy="326.1" r="4.9" fill="#0a6fe0" fill-opacity="0.72" stroke="#0046a8" stroke-opacity="0.6" stroke-width="0.8"/><circle cx="359.9" cy="598.5" r="4.9" fill="#e8578a" fill-opacity="0.72" stroke="#b8406a" stroke-opacity="0.6" stroke-width="0.8"/><circle cx="489.1" cy="546.0" r="4.9" fill="#0a6fe0" fill-opacity="0.72" stroke="#0046a8" stroke-opacity="0.6" stroke-width="0.8"/><circle cx="539.0" cy="604.5" r="4.9" fill="#0a6fe0" fill-opacity="0.72" stroke="#0046a8" stroke-opacity="0.6" stroke-width="0.8"/><circle cx="310.7" cy="538.3" r="4.9" fill="#e8578a" fill-opacity="0.72" stroke="#b8406a" stroke-opacity="0.6" stroke-width="0.8"/><circle cx="507.2" cy="544.0" r="4.9" fill="#f46a00" fill-opacity="0.72" stroke="#b84f00" stroke-opacity="0.6" stroke-width="0.8"/><circle cx="354.5" cy="529.7" r="4.9" fill="#0a6fe0" fill-opacity="0.72" stroke="#0046a8" stroke-opacity="0.6" stroke-width="0.8"/><circle cx="428.4" cy="554.2" r="4.9" fill="#f46a00" fill-opacity="0.72" stroke="#b84f00" stroke-opacity="0.6" stroke-width="0.8"/><circle cx="623.6" cy="516.9" r="4.9" fill="#2e2e2e" fill-opacity="0.72" stroke="#000" stroke-opacity="0.6" stroke-width="0.8"/><circle cx="372.2" cy="602.0" r="4.9" fill="#2e2e2e" fill-opacity="0.72" stroke="#000" stroke-opacity="0.6" stroke-width="0.8"/><circle cx="416.2" cy="534.3" r="4.9" fill="#f46a00" fill-opacity="0.72" stroke="#b84f00" stroke-opacity="0.6" stroke-width="0.8"/><circle cx="531.5" cy="299.6" r="4.9" fill="#2e2e2e" fill-opacity="0.72" stroke="#000" stroke-opacity="0.6" stroke-width="0.8"/><circle cx="605.8" cy="536.0" r="4.9" fill="#2e2e2e" fill-opacity="0.72" stroke="#000" stroke-opacity="0.6" stroke-width="0.8"/><circle cx="502.1" cy="555.6" r="4.9" fill="#0a6fe0" fill-opacity="0.72" stroke="#0046a8" stroke-opacity="0.6" stroke-width="0.8"/><circle cx="541.7" cy="396.6" r="4.9" fill="#e8578a" fill-opacity="0.72" stroke="#b8406a" stroke-opacity="0.6" stroke-width="0.8"/><circle cx="446.1" cy="607.5" r="4.9" fill="#0a6fe0" fill-opacity="0.72" stroke="#0046a8" stroke-opacity="0.6" stroke-width="0.8"/><circle cx="502.5" cy="609.8" r="4.9" fill="#f46a00" fill-opacity="0.72" stroke="#b84f00" stroke-opacity="0.6" stroke-width="0.8"/><circle cx="594.7" cy="539.4" r="4.9" fill="#2e2e2e" fill-opacity="0.72" stroke="#000" stroke-opacity="0.6" stroke-width="0.8"/><circle cx="535.0" cy="389.5" r="4.9" fill="#2e2e2e" fill-opacity="0.72" stroke="#000" stroke-opacity="0.6" stroke-width="0.8"/><circle cx="439.0" cy="609.6" r="4.9" fill="#e8578a" fill-opacity="0.72" stroke="#b8406a" stroke-opacity="0.6" stroke-width="0.8"/><circle cx="594.9" cy="419.7" r="4.9" fill="#e8578a" fill-opacity="0.72" stroke="#b8406a" stroke-opacity="0.6" stroke-width="0.8"/><circle cx="615.6" cy="445.4" r="4.9" fill="#e8578a" fill-opacity="0.72" stroke="#b8406a" stroke-opacity="0.6" stroke-width="0.8"/><circle cx="488.3" cy="364.1" r="4.9" fill="#f46a00" fill-opacity="0.72" stroke="#b84f00" stroke-opacity="0.6" stroke-width="0.8"/><circle cx="415.2" cy="417.0" r="4.9" fill="#e8578a" fill-opacity="0.72" stroke="#b8406a" stroke-opacity="0.6" stroke-width="0.8"/><circle cx="640.2" cy="484.6" r="4.9" fill="#e8578a" fill-opacity="0.72" stroke="#b8406a" stroke-opacity="0.6" stroke-width="0.8"/><circle cx="510.5" cy="282.3" r="4.9" fill="#f46a00" fill-opacity="0.72" stroke="#b84f00" stroke-opacity="0.6" stroke-width="0.8"/><circle cx="470.2" cy="543.2" r="4.9" fill="#e8578a" fill-opacity="0.72" stroke="#b8406a" stroke-opacity="0.6" stroke-width="0.8"/><circle cx="319.1" cy="534.7" r="4.9" fill="#f46a00" fill-opacity="0.72" stroke="#b84f00" stroke-opacity="0.6" stroke-width="0.8"/><circle cx="558.4" cy="588.8" r="4.9" fill="#f46a00" fill-opacity="0.72" stroke="#b84f00" stroke-opacity="0.6" stroke-width="0.8"/><circle cx="579.3" cy="537.8" r="4.9" fill="#f46a00" fill-opacity="0.72" stroke="#b84f00" stroke-opacity="0.6" stroke-width="0.8"/><circle cx="555.5" cy="324.5" r="4.9" fill="#e8578a" fill-opacity="0.72" stroke="#b8406a" stroke-opacity="0.6" stroke-width="0.8"/><circle cx="689.2" cy="445.5" r="4.9" fill="#e8578a" fill-opacity="0.72" stroke="#b8406a" stroke-opacity="0.6" stroke-width="0.8"/><circle cx="422.1" cy="407.6" r="4.9" fill="#f46a00" fill-opacity="0.72" stroke="#b84f00" stroke-opacity="0.6" stroke-width="0.8"/><circle cx="540.1" cy="304.7" r="4.9" fill="#2e2e2e" fill-opacity="0.72" stroke="#000" stroke-opacity="0.6" stroke-width="0.8"/><circle cx="499.2" cy="536.5" r="4.9" fill="#2e2e2e" fill-opacity="0.72" stroke="#000" stroke-opacity="0.6" stroke-width="0.8"/><circle cx="470.5" cy="604.3" r="4.9" fill="#e8578a" fill-opacity="0.72" stroke="#b8406a" stroke-opacity="0.6" stroke-width="0.8"/><circle cx="644.6" cy="388.9" r="4.9" fill="#f46a00" fill-opacity="0.72" stroke="#b84f00" stroke-opacity="0.6" stroke-width="0.8"/><circle cx="480.3" cy="333.6" r="4.9" fill="#e8578a" fill-opacity="0.72" stroke="#b8406a" stroke-opacity="0.6" stroke-width="0.8"/><circle cx="378.7" cy="551.3" r="4.9" fill="#e8578a" fill-opacity="0.72" stroke="#b8406a" stroke-opacity="0.6" stroke-width="0.8"/><circle cx="341.0" cy="609.7" r="4.9" fill="#f46a00" fill-opacity="0.72" stroke="#b84f00" stroke-opacity="0.6" stroke-width="0.8"/><circle cx="553.8" cy="324.4" r="4.9" fill="#e8578a" fill-opacity="0.72" stroke="#b8406a" stroke-opacity="0.6" stroke-width="0.8"/><circle cx="382.3" cy="535.6" r="4.9" fill="#e8578a" fill-opacity="0.72" stroke="#b8406a" stroke-opacity="0.6" stroke-width="0.8"/><circle cx="386.9" cy="542.0" r="4.9" fill="#0a6fe0" fill-opacity="0.72" stroke="#0046a8" stroke-opacity="0.6" stroke-width="0.8"/><circle cx="416.2" cy="404.6" r="4.9" fill="#e8578a" fill-opacity="0.72" stroke="#b8406a" stroke-opacity="0.6" stroke-width="0.8"/><circle cx="391.3" cy="602.4" r="4.9" fill="#e8578a" fill-opacity="0.72" stroke="#b8406a" stroke-opacity="0.6" stroke-width="0.8"/><circle cx="494.8" cy="380.0" r="4.9" fill="#e8578a" fill-opacity="0.72" stroke="#b8406a" stroke-opacity="0.6" stroke-width="0.8"/><circle cx="295.5" cy="532.4" r="4.9" fill="#e8578a" fill-opacity="0.72" stroke="#b8406a" stroke-opacity="0.6" stroke-width="0.8"/><circle cx="580.8" cy="546.0" r="4.9" fill="#e8578a" fill-opacity="0.72" stroke="#b8406a" stroke-opacity="0.6" stroke-width="0.8"/><circle cx="561.1" cy="584.7" r="4.9" fill="#e8578a" fill-opacity="0.72" stroke="#b8406a" stroke-opacity="0.6" stroke-width="0.8"/><circle cx="343.7" cy="528.2" r="4.9" fill="#0a6fe0" fill-opacity="0.72" stroke="#0046a8" stroke-opacity="0.6" stroke-width="0.8"/><circle cx="519.5" cy="364.8" r="4.9" fill="#f46a00" fill-opacity="0.72" stroke="#b84f00" stroke-opacity="0.6" stroke-width="0.8"/><circle cx="532.3" cy="383.7" r="4.9" fill="#e8578a" fill-opacity="0.72" stroke="#b8406a" stroke-opacity="0.6" stroke-width="0.8"/><circle cx="404.7" cy="642.8" r="4.9" fill="#f46a00" fill-opacity="0.72" stroke="#b84f00" stroke-opacity="0.6" stroke-width="0.8"/><circle cx="379.8" cy="540.8" r="4.9" fill="#0a6fe0" fill-opacity="0.72" stroke="#0046a8" stroke-opacity="0.6" stroke-width="0.8"/><circle cx="542.1" cy="604.7" r="4.9" fill="#f46a00" fill-opacity="0.72" stroke="#b84f00" stroke-opacity="0.6" stroke-width="0.8"/><circle cx="615.5" cy="521.6" r="4.9" fill="#0a6fe0" fill-opacity="0.72" stroke="#0046a8" stroke-opacity="0.6" stroke-width="0.8"/><circle cx="496.7" cy="567.9" r="4.9" fill="#f46a00" fill-opacity="0.72" stroke="#b84f00" stroke-opacity="0.6" stroke-width="0.8"/><circle cx="632.0" cy="495.2" r="4.9" fill="#0a6fe0" fill-opacity="0.72" stroke="#0046a8" stroke-opacity="0.6" stroke-width="0.8"/><circle cx="585.1" cy="468.1" r="4.9" fill="#e8578a" fill-opacity="0.72" stroke="#b8406a" stroke-opacity="0.6" stroke-width="0.8"/><circle cx="443.3" cy="327.3" r="4.9" fill="#0a6fe0" fill-opacity="0.72" stroke="#0046a8" stroke-opacity="0.6" stroke-width="0.8"/><circle cx="536.8" cy="603.4" r="4.9" fill="#0a6fe0" fill-opacity="0.72" stroke="#0046a8" stroke-opacity="0.6" stroke-width="0.8"/><circle cx="522.9" cy="359.6" r="4.9" fill="#e8578a" fill-opacity="0.72" stroke="#b8406a" stroke-opacity="0.6" stroke-width="0.8"/><circle cx="433.9" cy="571.5" r="4.9" fill="#0b2a5a" fill-opacity="0.72" stroke="#001030" stroke-opacity="0.6" stroke-width="0.8"/><circle cx="610.0" cy="434.5" r="4.9" fill="#2e2e2e" fill-opacity="0.72" stroke="#000" stroke-opacity="0.6" stroke-width="0.8"/><circle cx="515.2" cy="282.1" r="4.9" fill="#e8578a" fill-opacity="0.72" stroke="#b8406a" stroke-opacity="0.6" stroke-width="0.8"/><circle cx="384.7" cy="552.2" r="4.9" fill="#f46a00" fill-opacity="0.72" stroke="#b84f00" stroke-opacity="0.6" stroke-width="0.8"/><circle cx="630.0" cy="440.5" r="4.9" fill="#e8578a" fill-opacity="0.72" stroke="#b8406a" stroke-opacity="0.6" stroke-width="0.8"/><circle cx="410.6" cy="638.7" r="4.9" fill="#f46a00" fill-opacity="0.72" stroke="#b84f00" stroke-opacity="0.6" stroke-width="0.8"/><circle cx="385.3" cy="599.9" r="4.9" fill="#0a6fe0" fill-opacity="0.72" stroke="#0046a8" stroke-opacity="0.6" stroke-width="0.8"/><circle cx="653.3" cy="402.4" r="4.9" fill="#e8578a" fill-opacity="0.72" stroke="#b8406a" stroke-opacity="0.6" stroke-width="0.8"/><circle cx="509.8" cy="564.8" r="4.9" fill="#e8578a" fill-opacity="0.72" stroke="#b8406a" stroke-opacity="0.6" stroke-width="0.8"/><circle cx="395.4" cy="539.1" r="4.9" fill="#0a6fe0" fill-opacity="0.72" stroke="#0046a8" stroke-opacity="0.6" stroke-width="0.8"/><circle cx="495.6" cy="565.6" r="4.9" fill="#f46a00" fill-opacity="0.72" stroke="#b84f00" stroke-opacity="0.6" stroke-width="0.8"/><circle cx="508.6" cy="554.8" r="4.9" fill="#2e2e2e" fill-opacity="0.72" stroke="#000" stroke-opacity="0.6" stroke-width="0.8"/><circle cx="478.3" cy="332.2" r="4.9" fill="#e8578a" fill-opacity="0.72" stroke="#b8406a" stroke-opacity="0.6" stroke-width="0.8"/><circle cx="439.4" cy="562.1" r="4.9" fill="#f46a00" fill-opacity="0.72" stroke="#b84f00" stroke-opacity="0.6" stroke-width="0.8"/><circle cx="455.0" cy="614.9" r="4.9" fill="#2e2e2e" fill-opacity="0.72" stroke="#000" stroke-opacity="0.6" stroke-width="0.8"/><circle cx="689.6" cy="456.4" r="4.9" fill="#e8578a" fill-opacity="0.72" stroke="#b8406a" stroke-opacity="0.6" stroke-width="0.8"/><circle cx="387.3" cy="601.9" r="4.9" fill="#0a6fe0" fill-opacity="0.72" stroke="#0046a8" stroke-opacity="0.6" stroke-width="0.8"/><circle cx="630.6" cy="481.1" r="4.9" fill="#2e2e2e" fill-opacity="0.72" stroke="#000" stroke-opacity="0.6" stroke-width="0.8"/><circle cx="422.4" cy="551.3" r="4.9" fill="#0a6fe0" fill-opacity="0.72" stroke="#0046a8" stroke-opacity="0.6" stroke-width="0.8"/><circle cx="502.6" cy="570.7" r="4.9" fill="#e8578a" fill-opacity="0.72" stroke="#b8406a" stroke-opacity="0.6" stroke-width="0.8"/><circle cx="514.3" cy="546.2" r="4.9" fill="#0a6fe0" fill-opacity="0.72" stroke="#0046a8" stroke-opacity="0.6" stroke-width="0.8"/><circle cx="650.6" cy="386.3" r="4.9" fill="#2e2e2e" fill-opacity="0.72" stroke="#000" stroke-opacity="0.6" stroke-width="0.8"/><circle cx="541.4" cy="603.4" r="4.9" fill="#f46a00" fill-opacity="0.72" stroke="#b84f00" stroke-opacity="0.6" stroke-width="0.8"/><circle cx="357.6" cy="542.8" r="4.9" fill="#0a6fe0" fill-opacity="0.72" stroke="#0046a8" stroke-opacity="0.6" stroke-width="0.8"/><circle cx="441.0" cy="324.1" r="4.9" fill="#f46a00" fill-opacity="0.72" stroke="#b84f00" stroke-opacity="0.6" stroke-width="0.8"/><circle cx="584.6" cy="322.7" r="4.9" fill="#e8578a" fill-opacity="0.72" stroke="#b8406a" stroke-opacity="0.6" stroke-width="0.8"/><circle cx="518.8" cy="556.9" r="4.9" fill="#e8578a" fill-opacity="0.72" stroke="#b8406a" stroke-opacity="0.6" stroke-width="0.8"/><circle cx="490.3" cy="304.7" r="4.9" fill="#f46a00" fill-opacity="0.72" stroke="#b84f00" stroke-opacity="0.6" stroke-width="0.8"/><circle cx="361.4" cy="547.4" r="4.9" fill="#f46a00" fill-opacity="0.72" stroke="#b84f00" stroke-opacity="0.6" stroke-width="0.8"/><circle cx="557.2" cy="546.7" r="4.9" fill="#0a6fe0" fill-opacity="0.72" stroke="#0046a8" stroke-opacity="0.6" stroke-width="0.8"/><circle cx="309.8" cy="532.4" r="4.9" fill="#2e2e2e" fill-opacity="0.72" stroke="#000" stroke-opacity="0.6" stroke-width="0.8"/><circle cx="542.3" cy="405.3" r="4.9" fill="#f46a00" fill-opacity="0.72" stroke="#b84f00" stroke-opacity="0.6" stroke-width="0.8"/><circle cx="507.5" cy="557.1" r="4.9" fill="#2e2e2e" fill-opacity="0.72" stroke="#000" stroke-opacity="0.6" stroke-width="0.8"/><circle cx="305.5" cy="542.3" r="4.9" fill="#f46a00" fill-opacity="0.72" stroke="#b84f00" stroke-opacity="0.6" stroke-width="0.8"/><circle cx="640.3" cy="480.5" r="4.9" fill="#2e2e2e" fill-opacity="0.72" stroke="#000" stroke-opacity="0.6" stroke-width="0.8"/><circle cx="553.8" cy="318.5" r="4.9" fill="#e8578a" fill-opacity="0.72" stroke="#b8406a" stroke-opacity="0.6" stroke-width="0.8"/><circle cx="362.6" cy="602.1" r="4.9" fill="#0a6fe0" fill-opacity="0.72" stroke="#0046a8" stroke-opacity="0.6" stroke-width="0.8"/><circle cx="348.0" cy="614.7" r="4.9" fill="#0a6fe0" fill-opacity="0.72" stroke="#0046a8" stroke-opacity="0.6" stroke-width="0.8"/><circle cx="456.5" cy="611.1" r="4.9" fill="#2e2e2e" fill-opacity="0.72" stroke="#000" stroke-opacity="0.6" stroke-width="0.8"/><circle cx="461.5" cy="617.2" r="4.9" fill="#2e2e2e" fill-opacity="0.72" stroke="#000" stroke-opacity="0.6" stroke-width="0.8"/><circle cx="464.1" cy="622.5" r="4.9" fill="#e8578a" fill-opacity="0.72" stroke="#b8406a" stroke-opacity="0.6" stroke-width="0.8"/><circle cx="615.5" cy="471.2" r="4.9" fill="#2e2e2e" fill-opacity="0.72" stroke="#000" stroke-opacity="0.6" stroke-width="0.8"/><circle cx="398.0" cy="453.7" r="4.9" fill="#2e2e2e" fill-opacity="0.72" stroke="#000" stroke-opacity="0.6" stroke-width="0.8"/><circle cx="419.8" cy="539.5" r="4.9" fill="#0a6fe0" fill-opacity="0.72" stroke="#0046a8" stroke-opacity="0.6" stroke-width="0.8"/><circle cx="550.4" cy="357.1" r="4.9" fill="#0a6fe0" fill-opacity="0.72" stroke="#0046a8" stroke-opacity="0.6" stroke-width="0.8"/><circle cx="509.1" cy="579.3" r="4.9" fill="#0a6fe0" fill-opacity="0.72" stroke="#0046a8" stroke-opacity="0.6" stroke-width="0.8"/><circle cx="599.2" cy="352.8" r="4.9" fill="#f46a00" fill-opacity="0.72" stroke="#b84f00" stroke-opacity="0.6" stroke-width="0.8"/><circle cx="475.8" cy="544.0" r="4.9" fill="#f46a00" fill-opacity="0.72" stroke="#b84f00" stroke-opacity="0.6" stroke-width="0.8"/><circle cx="438.6" cy="624.6" r="4.9" fill="#2e2e2e" fill-opacity="0.72" stroke="#000" stroke-opacity="0.6" stroke-width="0.8"/><circle cx="502.0" cy="372.0" r="4.9" fill="#f46a00" fill-opacity="0.72" stroke="#b84f00" stroke-opacity="0.6" stroke-width="0.8"/><circle cx="508.3" cy="546.3" r="4.9" fill="#f46a00" fill-opacity="0.72" stroke="#b84f00" stroke-opacity="0.6" stroke-width="0.8"/><circle cx="614.8" cy="516.4" r="4.9" fill="#f46a00" fill-opacity="0.72" stroke="#b84f00" stroke-opacity="0.6" stroke-width="0.8"/><circle cx="444.0" cy="606.3" r="4.9" fill="#0a6fe0" fill-opacity="0.72" stroke="#0046a8" stroke-opacity="0.6" stroke-width="0.8"/><circle cx="619.7" cy="481.1" r="4.9" fill="#f46a00" fill-opacity="0.72" stroke="#b84f00" stroke-opacity="0.6" stroke-width="0.8"/><circle cx="331.2" cy="530.4" r="4.9" fill="#2e2e2e" fill-opacity="0.72" stroke="#000" stroke-opacity="0.6" stroke-width="0.8"/><circle cx="624.4" cy="489.1" r="4.9" fill="#e8578a" fill-opacity="0.72" stroke="#b8406a" stroke-opacity="0.6" stroke-width="0.8"/><circle cx="560.8" cy="587.5" r="4.9" fill="#f46a00" fill-opacity="0.72" stroke="#b84f00" stroke-opacity="0.6" stroke-width="0.8"/><circle cx="437.3" cy="624.0" r="4.9" fill="#2e2e2e" fill-opacity="0.72" stroke="#000" stroke-opacity="0.6" stroke-width="0.8"/><circle cx="511.3" cy="541.7" r="4.9" fill="#f46a00" fill-opacity="0.72" stroke="#b84f00" stroke-opacity="0.6" stroke-width="0.8"/><circle cx="412.7" cy="527.5" r="4.9" fill="#0a6fe0" fill-opacity="0.72" stroke="#0046a8" stroke-opacity="0.6" stroke-width="0.8"/><circle cx="581.8" cy="351.9" r="4.9" fill="#f46a00" fill-opacity="0.72" stroke="#b84f00" stroke-opacity="0.6" stroke-width="0.8"/><circle cx="477.0" cy="315.0" r="4.9" fill="#0a6fe0" fill-opacity="0.72" stroke="#0046a8" stroke-opacity="0.6" stroke-width="0.8"/><circle cx="370.4" cy="525.5" r="4.9" fill="#0a6fe0" fill-opacity="0.72" stroke="#0046a8" stroke-opacity="0.6" stroke-width="0.8"/><circle cx="644.5" cy="492.6" r="4.9" fill="#e8578a" fill-opacity="0.72" stroke="#b8406a" stroke-opacity="0.6" stroke-width="0.8"/><circle cx="630.0" cy="500.4" r="4.9" fill="#e8578a" fill-opacity="0.72" stroke="#b8406a" stroke-opacity="0.6" stroke-width="0.8"/><circle cx="606.3" cy="536.3" r="4.9" fill="#2e2e2e" fill-opacity="0.72" stroke="#000" stroke-opacity="0.6" stroke-width="0.8"/><circle cx="540.0" cy="406.0" r="4.9" fill="#f46a00" fill-opacity="0.72" stroke="#b84f00" stroke-opacity="0.6" stroke-width="0.8"/><circle cx="404.9" cy="539.1" r="4.9" fill="#e8578a" fill-opacity="0.72" stroke="#b8406a" stroke-opacity="0.6" stroke-width="0.8"/><circle cx="495.7" cy="542.8" r="4.9" fill="#0a6fe0" fill-opacity="0.72" stroke="#0046a8" stroke-opacity="0.6" stroke-width="0.8"/><circle cx="433.2" cy="554.4" r="4.9" fill="#0a6fe0" fill-opacity="0.72" stroke="#0046a8" stroke-opacity="0.6" stroke-width="0.8"/><circle cx="296.6" cy="534.3" r="4.9" fill="#e8578a" fill-opacity="0.72" stroke="#b8406a" stroke-opacity="0.6" stroke-width="0.8"/><circle cx="477.2" cy="348.3" r="4.9" fill="#0a6fe0" fill-opacity="0.72" stroke="#0046a8" stroke-opacity="0.6" stroke-width="0.8"/><circle cx="495.5" cy="308.2" r="4.9" fill="#0a6fe0" fill-opacity="0.72" stroke="#0046a8" stroke-opacity="0.6" stroke-width="0.8"/><circle cx="646.1" cy="475.2" r="4.9" fill="#0a6fe0" fill-opacity="0.72" stroke="#0046a8" stroke-opacity="0.6" stroke-width="0.8"/><circle cx="594.1" cy="333.0" r="4.9" fill="#f46a00" fill-opacity="0.72" stroke="#b84f00" stroke-opacity="0.6" stroke-width="0.8"/><circle cx="416.9" cy="646.1" r="4.9" fill="#e8578a" fill-opacity="0.72" stroke="#b8406a" stroke-opacity="0.6" stroke-width="0.8"/><circle cx="428.6" cy="548.2" r="4.9" fill="#f46a00" fill-opacity="0.72" stroke="#b84f00" stroke-opacity="0.6" stroke-width="0.8"/><circle cx="598.4" cy="348.5" r="4.9" fill="#0a6fe0" fill-opacity="0.72" stroke="#0046a8" stroke-opacity="0.6" stroke-width="0.8"/><circle cx="633.5" cy="484.9" r="4.9" fill="#2e2e2e" fill-opacity="0.72" stroke="#000" stroke-opacity="0.6" stroke-width="0.8"/><circle cx="417.2" cy="407.6" r="4.9" fill="#0a6fe0" fill-opacity="0.72" stroke="#0046a8" stroke-opacity="0.6" stroke-width="0.8"/><circle cx="525.4" cy="306.9" r="4.9" fill="#e8578a" fill-opacity="0.72" stroke="#b8406a" stroke-opacity="0.6" stroke-width="0.8"/><circle cx="588.1" cy="333.9" r="4.9" fill="#2e2e2e" fill-opacity="0.72" stroke="#000" stroke-opacity="0.6" stroke-width="0.8"/><circle cx="426.0" cy="556.0" r="4.9" fill="#f46a00" fill-opacity="0.72" stroke="#b84f00" stroke-opacity="0.6" stroke-width="0.8"/><circle cx="449.1" cy="267.9" r="4.9" fill="#0a6fe0" fill-opacity="0.72" stroke="#0046a8" stroke-opacity="0.6" stroke-width="0.8"/><circle cx="641.2" cy="424.9" r="4.9" fill="#0a6fe0" fill-opacity="0.72" stroke="#0046a8" stroke-opacity="0.6" stroke-width="0.8"/><circle cx="510.9" cy="280.7" r="4.9" fill="#f46a00" fill-opacity="0.72" stroke="#b84f00" stroke-opacity="0.6" stroke-width="0.8"/><circle cx="416.1" cy="546.4" r="4.9" fill="#2e2e2e" fill-opacity="0.72" stroke="#000" stroke-opacity="0.6" stroke-width="0.8"/><circle cx="346.8" cy="541.5" r="4.9" fill="#e8578a" fill-opacity="0.72" stroke="#b8406a" stroke-opacity="0.6" stroke-width="0.8"/><circle cx="349.8" cy="535.9" r="4.9" fill="#f46a00" fill-opacity="0.72" stroke="#b84f00" stroke-opacity="0.6" stroke-width="0.8"/><circle cx="448.3" cy="609.3" r="4.9" fill="#0a6fe0" fill-opacity="0.72" stroke="#0046a8" stroke-opacity="0.6" stroke-width="0.8"/><circle cx="431.0" cy="548.4" r="4.9" fill="#f46a00" fill-opacity="0.72" stroke="#b84f00" stroke-opacity="0.6" stroke-width="0.8"/><circle cx="534.9" cy="368.2" r="4.9" fill="#f46a00" fill-opacity="0.72" stroke="#b84f00" stroke-opacity="0.6" stroke-width="0.8"/><circle cx="400.0" cy="542.8" r="4.9" fill="#2e2e2e" fill-opacity="0.72" stroke="#000" stroke-opacity="0.6" stroke-width="0.8"/><circle cx="379.2" cy="551.3" r="4.9" fill="#e8578a" fill-opacity="0.72" stroke="#b8406a" stroke-opacity="0.6" stroke-width="0.8"/><circle cx="437.2" cy="330.5" r="4.9" fill="#e8578a" fill-opacity="0.72" stroke="#b8406a" stroke-opacity="0.6" stroke-width="0.8"/><circle cx="581.2" cy="458.3" r="4.9" fill="#0a6fe0" fill-opacity="0.72" stroke="#0046a8" stroke-opacity="0.6" stroke-width="0.8"/><circle cx="436.2" cy="593.2" r="4.9" fill="#0a6fe0" fill-opacity="0.72" stroke="#0046a8" stroke-opacity="0.6" stroke-width="0.8"/><circle cx="441.5" cy="546.1" r="4.9" fill="#0a6fe0" fill-opacity="0.72" stroke="#0046a8" stroke-opacity="0.6" stroke-width="0.8"/><circle cx="474.5" cy="558.6" r="4.9" fill="#0a6fe0" fill-opacity="0.72" stroke="#0046a8" stroke-opacity="0.6" stroke-width="0.8"/><circle cx="629.9" cy="512.2" r="4.9" fill="#2e2e2e" fill-opacity="0.72" stroke="#000" stroke-opacity="0.6" stroke-width="0.8"/><circle cx="646.6" cy="390.3" r="4.9" fill="#f46a00" fill-opacity="0.72" stroke="#b84f00" stroke-opacity="0.6" stroke-width="0.8"/><circle cx="368.0" cy="546.2" r="4.9" fill="#0a6fe0" fill-opacity="0.72" stroke="#0046a8" stroke-opacity="0.6" stroke-width="0.8"/><circle cx="416.6" cy="644.9" r="4.9" fill="#e8578a" fill-opacity="0.72" stroke="#b8406a" stroke-opacity="0.6" stroke-width="0.8"/><circle cx="508.3" cy="277.3" r="4.9" fill="#0a6fe0" fill-opacity="0.72" stroke="#0046a8" stroke-opacity="0.6" stroke-width="0.8"/><circle cx="654.1" cy="400.9" r="4.9" fill="#e8578a" fill-opacity="0.72" stroke="#b8406a" stroke-opacity="0.6" stroke-width="0.8"/><circle cx="593.2" cy="306.5" r="4.9" fill="#e8578a" fill-opacity="0.72" stroke="#b8406a" stroke-opacity="0.6" stroke-width="0.8"/><circle cx="463.2" cy="557.8" r="4.9" fill="#f46a00" fill-opacity="0.72" stroke="#b84f00" stroke-opacity="0.6" stroke-width="0.8"/><circle cx="647.2" cy="394.9" r="4.9" fill="#2e2e2e" fill-opacity="0.72" stroke="#000" stroke-opacity="0.6" stroke-width="0.8"/><circle cx="390.7" cy="601.5" r="4.9" fill="#e8578a" fill-opacity="0.72" stroke="#b8406a" stroke-opacity="0.6" stroke-width="0.8"/><circle cx="340.1" cy="537.8" r="4.9" fill="#e8578a" fill-opacity="0.72" stroke="#b8406a" stroke-opacity="0.6" stroke-width="0.8"/><circle cx="686.8" cy="444.7" r="4.9" fill="#e8578a" fill-opacity="0.72" stroke="#b8406a" stroke-opacity="0.6" stroke-width="0.8"/><circle cx="407.3" cy="549.6" r="4.9" fill="#f46a00" fill-opacity="0.72" stroke="#b84f00" stroke-opacity="0.6" stroke-width="0.8"/><circle cx="407.1" cy="645.0" r="4.9" fill="#f46a00" fill-opacity="0.72" stroke="#b84f00" stroke-opacity="0.6" stroke-width="0.8"/><circle cx="605.9" cy="350.7" r="4.9" fill="#e8578a" fill-opacity="0.72" stroke="#b8406a" stroke-opacity="0.6" stroke-width="0.8"/><circle cx="426.1" cy="591.2" r="4.9" fill="#e8578a" fill-opacity="0.72" stroke="#b8406a" stroke-opacity="0.6" stroke-width="0.8"/><circle cx="519.8" cy="611.1" r="4.9" fill="#f46a00" fill-opacity="0.72" stroke="#b84f00" stroke-opacity="0.6" stroke-width="0.8"/><circle cx="380.7" cy="535.9" r="4.9" fill="#e8578a" fill-opacity="0.72" stroke="#b8406a" stroke-opacity="0.6" stroke-width="0.8"/><circle cx="496.7" cy="557.9" r="4.9" fill="#f46a00" fill-opacity="0.72" stroke="#b84f00" stroke-opacity="0.6" stroke-width="0.8"/><circle cx="646.0" cy="476.0" r="4.9" fill="#0a6fe0" fill-opacity="0.72" stroke="#0046a8" stroke-opacity="0.6" stroke-width="0.8"/><circle cx="464.2" cy="614.6" r="4.9" fill="#2e2e2e" fill-opacity="0.72" stroke="#000" stroke-opacity="0.6" stroke-width="0.8"/><circle cx="471.5" cy="607.5" r="4.9" fill="#f46a00" fill-opacity="0.72" stroke="#b84f00" stroke-opacity="0.6" stroke-width="0.8"/><circle cx="373.0" cy="540.5" r="4.9" fill="#2e2e2e" fill-opacity="0.72" stroke="#000" stroke-opacity="0.6" stroke-width="0.8"/><circle cx="435.6" cy="595.6" r="4.9" fill="#2e2e2e" fill-opacity="0.72" stroke="#000" stroke-opacity="0.6" stroke-width="0.8"/><circle cx="531.1" cy="395.9" r="4.9" fill="#f46a00" fill-opacity="0.72" stroke="#b84f00" stroke-opacity="0.6" stroke-width="0.8"/><circle cx="410.8" cy="526.6" r="4.9" fill="#0a6fe0" fill-opacity="0.72" stroke="#0046a8" stroke-opacity="0.6" stroke-width="0.8"/><circle cx="374.4" cy="602.5" r="4.9" fill="#f46a00" fill-opacity="0.72" stroke="#b84f00" stroke-opacity="0.6" stroke-width="0.8"/><circle cx="418.5" cy="637.8" r="4.9" fill="#2e2e2e" fill-opacity="0.72" stroke="#000" stroke-opacity="0.6" stroke-width="0.8"/><circle cx="506.2" cy="585.2" r="4.9" fill="#f46a00" fill-opacity="0.72" stroke="#b84f00" stroke-opacity="0.6" stroke-width="0.8"/><circle cx="485.1" cy="540.9" r="4.9" fill="#0a6fe0" fill-opacity="0.72" stroke="#0046a8" stroke-opacity="0.6" stroke-width="0.8"/><circle cx="594.7" cy="540.0" r="4.9" fill="#2e2e2e" fill-opacity="0.72" stroke="#000" stroke-opacity="0.6" stroke-width="0.8"/><circle cx="450.1" cy="549.8" r="4.9" fill="#0a6fe0" fill-opacity="0.72" stroke="#0046a8" stroke-opacity="0.6" stroke-width="0.8"/><circle cx="516.0" cy="547.9" r="4.9" fill="#0a6fe0" fill-opacity="0.72" stroke="#0046a8" stroke-opacity="0.6" stroke-width="0.8"/><circle cx="585.5" cy="466.0" r="4.9" fill="#e8578a" fill-opacity="0.72" stroke="#b8406a" stroke-opacity="0.6" stroke-width="0.8"/><circle cx="390.0" cy="537.6" r="4.9" fill="#e8578a" fill-opacity="0.72" stroke="#b8406a" stroke-opacity="0.6" stroke-width="0.8"/><circle cx="434.0" cy="602.0" r="4.9" fill="#f46a00" fill-opacity="0.72" stroke="#b84f00" stroke-opacity="0.6" stroke-width="0.8"/><circle cx="435.0" cy="618.9" r="4.9" fill="#f46a00" fill-opacity="0.72" stroke="#b84f00" stroke-opacity="0.6" stroke-width="0.8"/><circle cx="499.5" cy="373.2" r="4.9" fill="#0a6fe0" fill-opacity="0.72" stroke="#0046a8" stroke-opacity="0.6" stroke-width="0.8"/><circle cx="648.1" cy="462.6" r="4.9" fill="#e8578a" fill-opacity="0.72" stroke="#b8406a" stroke-opacity="0.6" stroke-width="0.8"/><circle cx="407.2" cy="649.8" r="4.9" fill="#f46a00" fill-opacity="0.72" stroke="#b84f00" stroke-opacity="0.6" stroke-width="0.8"/><circle cx="342.1" cy="523.5" r="4.9" fill="#e8578a" fill-opacity="0.72" stroke="#b8406a" stroke-opacity="0.6" stroke-width="0.8"/><circle cx="492.9" cy="582.2" r="4.9" fill="#e8578a" fill-opacity="0.72" stroke="#b8406a" stroke-opacity="0.6" stroke-width="0.8"/><circle cx="652.5" cy="488.9" r="4.9" fill="#2e2e2e" fill-opacity="0.72" stroke="#000" stroke-opacity="0.6" stroke-width="0.8"/><circle cx="526.0" cy="355.9" r="4.9" fill="#0a6fe0" fill-opacity="0.72" stroke="#0046a8" stroke-opacity="0.6" stroke-width="0.8"/><circle cx="671.2" cy="380.3" r="4.9" fill="#0a6fe0" fill-opacity="0.72" stroke="#0046a8" stroke-opacity="0.6" stroke-width="0.8"/><circle cx="457.9" cy="552.9" r="4.9" fill="#0a6fe0" fill-opacity="0.72" stroke="#0046a8" stroke-opacity="0.6" stroke-width="0.8"/><circle cx="613.0" cy="303.9" r="4.9" fill="#f46a00" fill-opacity="0.72" stroke="#b84f00" stroke-opacity="0.6" stroke-width="0.8"/><circle cx="475.1" cy="538.6" r="4.9" fill="#0a6fe0" fill-opacity="0.72" stroke="#0046a8" stroke-opacity="0.6" stroke-width="0.8"/><circle cx="528.1" cy="357.9" r="4.9" fill="#0a6fe0" fill-opacity="0.72" stroke="#0046a8" stroke-opacity="0.6" stroke-width="0.8"/><circle cx="643.8" cy="418.0" r="4.9" fill="#2e2e2e" fill-opacity="0.72" stroke="#000" stroke-opacity="0.6" stroke-width="0.8"/><circle cx="484.2" cy="337.6" r="4.9" fill="#0a6fe0" fill-opacity="0.72" stroke="#0046a8" stroke-opacity="0.6" stroke-width="0.8"/><circle cx="302.8" cy="523.5" r="4.9" fill="#0a6fe0" fill-opacity="0.72" stroke="#0046a8" stroke-opacity="0.6" stroke-width="0.8"/><circle cx="526.0" cy="607.3" r="4.9" fill="#e8578a" fill-opacity="0.72" stroke="#b8406a" stroke-opacity="0.6" stroke-width="0.8"/><circle cx="403.2" cy="543.2" r="4.9" fill="#0a6fe0" fill-opacity="0.72" stroke="#0046a8" stroke-opacity="0.6" stroke-width="0.8"/><circle cx="421.2" cy="553.6" r="4.9" fill="#0a6fe0" fill-opacity="0.72" stroke="#0046a8" stroke-opacity="0.6" stroke-width="0.8"/><circle cx="648.6" cy="465.2" r="4.9" fill="#f46a00" fill-opacity="0.72" stroke="#b84f00" stroke-opacity="0.6" stroke-width="0.8"/><circle cx="584.7" cy="321.9" r="4.9" fill="#e8578a" fill-opacity="0.72" stroke="#b8406a" stroke-opacity="0.6" stroke-width="0.8"/><circle cx="374.5" cy="600.2" r="4.9" fill="#2e2e2e" fill-opacity="0.72" stroke="#000" stroke-opacity="0.6" stroke-width="0.8"/><circle cx="484.5" cy="338.8" r="4.9" fill="#0a6fe0" fill-opacity="0.72" stroke="#0046a8" stroke-opacity="0.6" stroke-width="0.8"/><circle cx="504.3" cy="555.8" r="4.9" fill="#0a6fe0" fill-opacity="0.72" stroke="#0046a8" stroke-opacity="0.6" stroke-width="0.8"/><circle cx="691.8" cy="454.0" r="4.9" fill="#e8578a" fill-opacity="0.72" stroke="#b8406a" stroke-opacity="0.6" stroke-width="0.8"/><circle cx="580.5" cy="315.9" r="4.9" fill="#0a6fe0" fill-opacity="0.72" stroke="#0046a8" stroke-opacity="0.6" stroke-width="0.8"/><circle cx="407.0" cy="537.4" r="4.9" fill="#e8578a" fill-opacity="0.72" stroke="#b8406a" stroke-opacity="0.6" stroke-width="0.8"/><circle cx="298.1" cy="529.6" r="4.9" fill="#f46a00" fill-opacity="0.72" stroke="#b84f00" stroke-opacity="0.6" stroke-width="0.8"/><circle cx="595.7" cy="535.6" r="4.9" fill="#0a6fe0" fill-opacity="0.72" stroke="#0046a8" stroke-opacity="0.6" stroke-width="0.8"/><circle cx="498.8" cy="304.6" r="4.9" fill="#f46a00" fill-opacity="0.72" stroke="#b84f00" stroke-opacity="0.6" stroke-width="0.8"/><circle cx="593.1" cy="417.3" r="4.9" fill="#e8578a" fill-opacity="0.72" stroke="#b8406a" stroke-opacity="0.6" stroke-width="0.8"/><circle cx="552.3" cy="591.1" r="4.9" fill="#e8578a" fill-opacity="0.72" stroke="#b8406a" stroke-opacity="0.6" stroke-width="0.8"/><circle cx="507.5" cy="615.0" r="4.9" fill="#0a6fe0" fill-opacity="0.72" stroke="#0046a8" stroke-opacity="0.6" stroke-width="0.8"/><circle cx="437.8" cy="610.8" r="4.9" fill="#e8578a" fill-opacity="0.72" stroke="#b8406a" stroke-opacity="0.6" stroke-width="0.8"/><circle cx="624.9" cy="489.2" r="4.9" fill="#e8578a" fill-opacity="0.72" stroke="#b8406a" stroke-opacity="0.6" stroke-width="0.8"/><circle cx="562.3" cy="550.9" r="4.9" fill="#f46a00" fill-opacity="0.72" stroke="#b84f00" stroke-opacity="0.6" stroke-width="0.8"/><circle cx="485.2" cy="305.6" r="4.9" fill="#e8578a" fill-opacity="0.72" stroke="#b8406a" stroke-opacity="0.6" stroke-width="0.8"/><circle cx="362.2" cy="549.8" r="4.9" fill="#f46a00" fill-opacity="0.72" stroke="#b84f00" stroke-opacity="0.6" stroke-width="0.8"/><circle cx="659.2" cy="477.4" r="4.9" fill="#e8578a" fill-opacity="0.72" stroke="#b8406a" stroke-opacity="0.6" stroke-width="0.8"/><circle cx="647.2" cy="465.2" r="4.9" fill="#f46a00" fill-opacity="0.72" stroke="#b84f00" stroke-opacity="0.6" stroke-width="0.8"/><circle cx="641.7" cy="471.6" r="4.9" fill="#e8578a" fill-opacity="0.72" stroke="#b8406a" stroke-opacity="0.6" stroke-width="0.8"/><circle cx="543.5" cy="354.2" r="4.9" fill="#0a6fe0" fill-opacity="0.72" stroke="#0046a8" stroke-opacity="0.6" stroke-width="0.8"/><circle cx="402.5" cy="651.1" r="4.9" fill="#0a6fe0" fill-opacity="0.72" stroke="#0046a8" stroke-opacity="0.6" stroke-width="0.8"/><circle cx="594.8" cy="305.4" r="4.9" fill="#e8578a" fill-opacity="0.72" stroke="#b8406a" stroke-opacity="0.6" stroke-width="0.8"/><circle cx="586.8" cy="435.9" r="4.9" fill="#f46a00" fill-opacity="0.72" stroke="#b84f00" stroke-opacity="0.6" stroke-width="0.8"/><circle cx="642.1" cy="447.8" r="4.9" fill="#e8578a" fill-opacity="0.72" stroke="#b8406a" stroke-opacity="0.6" stroke-width="0.8"/><circle cx="612.1" cy="408.6" r="4.9" fill="#e8578a" fill-opacity="0.72" stroke="#b8406a" stroke-opacity="0.6" stroke-width="0.8"/><circle cx="435.6" cy="595.4" r="4.9" fill="#2e2e2e" fill-opacity="0.72" stroke="#000" stroke-opacity="0.6" stroke-width="0.8"/><circle cx="477.4" cy="612.1" r="4.9" fill="#0a6fe0" fill-opacity="0.72" stroke="#0046a8" stroke-opacity="0.6" stroke-width="0.8"/><circle cx="490.3" cy="364.8" r="4.9" fill="#f46a00" fill-opacity="0.72" stroke="#b84f00" stroke-opacity="0.6" stroke-width="0.8"/><circle cx="410.9" cy="409.3" r="4.9" fill="#f46a00" fill-opacity="0.72" stroke="#b84f00" stroke-opacity="0.6" stroke-width="0.8"/><circle cx="507.5" cy="272.2" r="4.9" fill="#f46a00" fill-opacity="0.72" stroke="#b84f00" stroke-opacity="0.6" stroke-width="0.8"/><circle cx="519.1" cy="558.7" r="4.9" fill="#e8578a" fill-opacity="0.72" stroke="#b8406a" stroke-opacity="0.6" stroke-width="0.8"/><circle cx="459.6" cy="554.0" r="4.9" fill="#0a6fe0" fill-opacity="0.72" stroke="#0046a8" stroke-opacity="0.6" stroke-width="0.8"/><circle cx="553.8" cy="585.7" r="4.9" fill="#0a6fe0" fill-opacity="0.72" stroke="#0046a8" stroke-opacity="0.6" stroke-width="0.8"/><circle cx="391.0" cy="601.4" r="4.9" fill="#e8578a" fill-opacity="0.72" stroke="#b8406a" stroke-opacity="0.6" stroke-width="0.8"/><circle cx="588.1" cy="347.6" r="4.9" fill="#e8578a" fill-opacity="0.72" stroke="#b8406a" stroke-opacity="0.6" stroke-width="0.8"/><circle cx="462.7" cy="622.0" r="4.9" fill="#e8578a" fill-opacity="0.72" stroke="#b8406a" stroke-opacity="0.6" stroke-width="0.8"/><circle cx="499.8" cy="537.0" r="4.9" fill="#2e2e2e" fill-opacity="0.72" stroke="#000" stroke-opacity="0.6" stroke-width="0.8"/><circle cx="492.8" cy="314.9" r="4.9" fill="#f46a00" fill-opacity="0.72" stroke="#b84f00" stroke-opacity="0.6" stroke-width="0.8"/><circle cx="422.1" cy="405.7" r="4.9" fill="#e8578a" fill-opacity="0.72" stroke="#b8406a" stroke-opacity="0.6" stroke-width="0.8"/><circle cx="423.6" cy="644.4" r="4.9" fill="#e8578a" fill-opacity="0.72" stroke="#b8406a" stroke-opacity="0.6" stroke-width="0.8"/><circle cx="494.0" cy="563.1" r="4.9" fill="#2e2e2e" fill-opacity="0.72" stroke="#000" stroke-opacity="0.6" stroke-width="0.8"/><circle cx="405.4" cy="545.1" r="4.9" fill="#0a6fe0" fill-opacity="0.72" stroke="#0046a8" stroke-opacity="0.6" stroke-width="0.8"/><circle cx="408.6" cy="649.4" r="4.9" fill="#f46a00" fill-opacity="0.72" stroke="#b84f00" stroke-opacity="0.6" stroke-width="0.8"/><circle cx="474.9" cy="356.2" r="4.9" fill="#0b2a5a" fill-opacity="0.72" stroke="#001030" stroke-opacity="0.6" stroke-width="0.8"/><circle cx="480.0" cy="363.0" r="4.9" fill="#2e2e2e" fill-opacity="0.72" stroke="#000" stroke-opacity="0.6" stroke-width="0.8"/><circle cx="608.5" cy="436.4" r="4.9" fill="#e8578a" fill-opacity="0.72" stroke="#b8406a" stroke-opacity="0.6" stroke-width="0.8"/><circle cx="583.0" cy="308.2" r="4.9" fill="#2e2e2e" fill-opacity="0.72" stroke="#000" stroke-opacity="0.6" stroke-width="0.8"/><circle cx="553.4" cy="319.8" r="4.9" fill="#e8578a" fill-opacity="0.72" stroke="#b8406a" stroke-opacity="0.6" stroke-width="0.8"/><circle cx="589.8" cy="339.0" r="4.9" fill="#2e2e2e" fill-opacity="0.72" stroke="#000" stroke-opacity="0.6" stroke-width="0.8"/><circle cx="447.5" cy="332.8" r="4.9" fill="#2e2e2e" fill-opacity="0.72" stroke="#000" stroke-opacity="0.6" stroke-width="0.8"/><circle cx="457.6" cy="555.7" r="4.9" fill="#0a6fe0" fill-opacity="0.72" stroke="#0046a8" stroke-opacity="0.6" stroke-width="0.8"/><circle cx="478.1" cy="618.0" r="4.9" fill="#f46a00" fill-opacity="0.72" stroke="#b84f00" stroke-opacity="0.6" stroke-width="0.8"/><circle cx="483.0" cy="342.0" r="4.9" fill="#f46a00" fill-opacity="0.72" stroke="#b84f00" stroke-opacity="0.6" stroke-width="0.8"/><circle cx="497.4" cy="560.0" r="4.9" fill="#f46a00" fill-opacity="0.72" stroke="#b84f00" stroke-opacity="0.6" stroke-width="0.8"/><circle cx="570.9" cy="328.8" r="4.9" fill="#0a6fe0" fill-opacity="0.72" stroke="#0046a8" stroke-opacity="0.6" stroke-width="0.8"/><circle cx="640.1" cy="444.7" r="4.9" fill="#f46a00" fill-opacity="0.72" stroke="#b84f00" stroke-opacity="0.6" stroke-width="0.8"/><circle cx="497.3" cy="312.0" r="4.9" fill="#f46a00" fill-opacity="0.72" stroke="#b84f00" stroke-opacity="0.6" stroke-width="0.8"/><circle cx="516.7" cy="608.1" r="4.9" fill="#0a6fe0" fill-opacity="0.72" stroke="#0046a8" stroke-opacity="0.6" stroke-width="0.8"/><circle cx="393.1" cy="546.7" r="4.9" fill="#f46a00" fill-opacity="0.72" stroke="#b84f00" stroke-opacity="0.6" stroke-width="0.8"/><circle cx="648.0" cy="383.5" r="4.9" fill="#f46a00" fill-opacity="0.72" stroke="#b84f00" stroke-opacity="0.6" stroke-width="0.8"/><circle cx="386.1" cy="543.7" r="4.9" fill="#0a6fe0" fill-opacity="0.72" stroke="#0046a8" stroke-opacity="0.6" stroke-width="0.8"/><circle cx="547.0" cy="302.4" r="4.9" fill="#e8578a" fill-opacity="0.72" stroke="#b8406a" stroke-opacity="0.6" stroke-width="0.8"/><circle cx="402.3" cy="551.3" r="4.9" fill="#f46a00" fill-opacity="0.72" stroke="#b84f00" stroke-opacity="0.6" stroke-width="0.8"/><circle cx="637.0" cy="438.8" r="4.9" fill="#0a6fe0" fill-opacity="0.72" stroke="#0046a8" stroke-opacity="0.6" stroke-width="0.8"/><circle cx="593.0" cy="345.0" r="4.9" fill="#e8578a" fill-opacity="0.72" stroke="#b8406a" stroke-opacity="0.6" stroke-width="0.8"/><circle cx="544.3" cy="387.2" r="4.9" fill="#f46a00" fill-opacity="0.72" stroke="#b84f00" stroke-opacity="0.6" stroke-width="0.8"/><circle cx="547.7" cy="365.9" r="4.9" fill="#e8578a" fill-opacity="0.72" stroke="#b8406a" stroke-opacity="0.6" stroke-width="0.8"/><circle cx="600.9" cy="530.1" r="4.9" fill="#2e2e2e" fill-opacity="0.72" stroke="#000" stroke-opacity="0.6" stroke-width="0.8"/><circle cx="513.3" cy="280.7" r="4.9" fill="#e8578a" fill-opacity="0.72" stroke="#b8406a" stroke-opacity="0.6" stroke-width="0.8"/><circle cx="571.9" cy="329.3" r="4.9" fill="#0a6fe0" fill-opacity="0.72" stroke="#0046a8" stroke-opacity="0.6" stroke-width="0.8"/><circle cx="450.2" cy="549.8" r="4.9" fill="#0a6fe0" fill-opacity="0.72" stroke="#0046a8" stroke-opacity="0.6" stroke-width="0.8"/><circle cx="437.1" cy="559.7" r="4.9" fill="#f46a00" fill-opacity="0.72" stroke="#b84f00" stroke-opacity="0.6" stroke-width="0.8"/><circle cx="636.9" cy="441.2" r="4.9" fill="#0a6fe0" fill-opacity="0.72" stroke="#0046a8" stroke-opacity="0.6" stroke-width="0.8"/><circle cx="522.7" cy="359.5" r="4.9" fill="#e8578a" fill-opacity="0.72" stroke="#b8406a" stroke-opacity="0.6" stroke-width="0.8"/><circle cx="506.6" cy="268.3" r="4.9" fill="#e8578a" fill-opacity="0.72" stroke="#b8406a" stroke-opacity="0.6" stroke-width="0.8"/><circle cx="545.2" cy="352.8" r="4.9" fill="#0a6fe0" fill-opacity="0.72" stroke="#0046a8" stroke-opacity="0.6" stroke-width="0.8"/><circle cx="475.1" cy="556.3" r="4.9" fill="#0a6fe0" fill-opacity="0.72" stroke="#0046a8" stroke-opacity="0.6" stroke-width="0.8"/><circle cx="540.1" cy="344.2" r="4.9" fill="#e8578a" fill-opacity="0.72" stroke="#b8406a" stroke-opacity="0.6" stroke-width="0.8"/><circle cx="512.6" cy="270.4" r="4.9" fill="#e8578a" fill-opacity="0.72" stroke="#b8406a" stroke-opacity="0.6" stroke-width="0.8"/><circle cx="614.6" cy="415.5" r="4.9" fill="#f46a00" fill-opacity="0.72" stroke="#b84f00" stroke-opacity="0.6" stroke-width="0.8"/><circle cx="318.2" cy="535.1" r="4.9" fill="#f46a00" fill-opacity="0.72" stroke="#b84f00" stroke-opacity="0.6" stroke-width="0.8"/><circle cx="534.3" cy="428.6" r="4.9" fill="#0a6fe0" fill-opacity="0.72" stroke="#0046a8" stroke-opacity="0.6" stroke-width="0.8"/><circle cx="472.0" cy="614.2" r="4.9" fill="#0a6fe0" fill-opacity="0.72" stroke="#0046a8" stroke-opacity="0.6" stroke-width="0.8"/><circle cx="543.7" cy="310.5" r="4.9" fill="#f46a00" fill-opacity="0.72" stroke="#b84f00" stroke-opacity="0.6" stroke-width="0.8"/><circle cx="563.7" cy="320.6" r="4.9" fill="#f46a00" fill-opacity="0.72" stroke="#b84f00" stroke-opacity="0.6" stroke-width="0.8"/><circle cx="629.8" cy="500.6" r="4.9" fill="#e8578a" fill-opacity="0.72" stroke="#b8406a" stroke-opacity="0.6" stroke-width="0.8"/><circle cx="621.7" cy="519.3" r="4.9" fill="#2e2e2e" fill-opacity="0.72" stroke="#000" stroke-opacity="0.6" stroke-width="0.8"/><circle cx="577.8" cy="330.5" r="4.9" fill="#e8578a" fill-opacity="0.72" stroke="#b8406a" stroke-opacity="0.6" stroke-width="0.8"/><circle cx="594.6" cy="441.6" r="4.9" fill="#0a6fe0" fill-opacity="0.72" stroke="#0046a8" stroke-opacity="0.6" stroke-width="0.8"/><circle cx="338.6" cy="535.7" r="4.9" fill="#f46a00" fill-opacity="0.72" stroke="#b84f00" stroke-opacity="0.6" stroke-width="0.8"/><circle cx="561.9" cy="551.0" r="4.9" fill="#f46a00" fill-opacity="0.72" stroke="#b84f00" stroke-opacity="0.6" stroke-width="0.8"/><circle cx="366.8" cy="545.9" r="4.9" fill="#0a6fe0" fill-opacity="0.72" stroke="#0046a8" stroke-opacity="0.6" stroke-width="0.8"/><circle cx="383.8" cy="549.8" r="4.9" fill="#f46a00" fill-opacity="0.72" stroke="#b84f00" stroke-opacity="0.6" stroke-width="0.8"/><circle cx="468.9" cy="605.7" r="4.9" fill="#e8578a" fill-opacity="0.72" stroke="#b8406a" stroke-opacity="0.6" stroke-width="0.8"/><circle cx="308.2" cy="533.6" r="4.9" fill="#2e2e2e" fill-opacity="0.72" stroke="#000" stroke-opacity="0.6" stroke-width="0.8"/><circle cx="546.9" cy="348.5" r="4.9" fill="#2e2e2e" fill-opacity="0.72" stroke="#000" stroke-opacity="0.6" stroke-width="0.8"/><circle cx="606.9" cy="427.5" r="4.9" fill="#f46a00" fill-opacity="0.72" stroke="#b84f00" stroke-opacity="0.6" stroke-width="0.8"/><circle cx="627.9" cy="512.3" r="4.9" fill="#2e2e2e" fill-opacity="0.72" stroke="#000" stroke-opacity="0.6" stroke-width="0.8"/><circle cx="648.5" cy="394.8" r="4.9" fill="#2e2e2e" fill-opacity="0.72" stroke="#000" stroke-opacity="0.6" stroke-width="0.8"/><circle cx="421.7" cy="404.5" r="4.9" fill="#e8578a" fill-opacity="0.72" stroke="#b8406a" stroke-opacity="0.6" stroke-width="0.8"/><circle cx="359.1" cy="548.2" r="4.9" fill="#2e2e2e" fill-opacity="0.72" stroke="#000" stroke-opacity="0.6" stroke-width="0.8"/><circle cx="479.2" cy="347.6" r="4.9" fill="#0a6fe0" fill-opacity="0.72" stroke="#0046a8" stroke-opacity="0.6" stroke-width="0.8"/><circle cx="445.7" cy="320.2" r="4.9" fill="#e8578a" fill-opacity="0.72" stroke="#b8406a" stroke-opacity="0.6" stroke-width="0.8"/><circle cx="490.5" cy="370.9" r="4.9" fill="#0b2a5a" fill-opacity="0.72" stroke="#001030" stroke-opacity="0.6" stroke-width="0.8"/><circle cx="638.6" cy="482.3" r="4.9" fill="#2e2e2e" fill-opacity="0.72" stroke="#000" stroke-opacity="0.6" stroke-width="0.8"/><circle cx="470.4" cy="615.1" r="4.9" fill="#0a6fe0" fill-opacity="0.72" stroke="#0046a8" stroke-opacity="0.6" stroke-width="0.8"/><circle cx="542.6" cy="311.6" r="4.9" fill="#f46a00" fill-opacity="0.72" stroke="#b84f00" stroke-opacity="0.6" stroke-width="0.8"/><circle cx="433.2" cy="572.9" r="4.9" fill="#0b2a5a" fill-opacity="0.72" stroke="#001030" stroke-opacity="0.6" stroke-width="0.8"/><circle cx="449.2" cy="325.3" r="4.9" fill="#0a6fe0" fill-opacity="0.72" stroke="#0046a8" stroke-opacity="0.6" stroke-width="0.8"/><circle cx="586.0" cy="347.3" r="4.9" fill="#e8578a" fill-opacity="0.72" stroke="#b8406a" stroke-opacity="0.6" stroke-width="0.8"/><circle cx="655.8" cy="475.5" r="4.9" fill="#f46a00" fill-opacity="0.72" stroke="#b84f00" stroke-opacity="0.6" stroke-width="0.8"/><circle cx="471.8" cy="605.1" r="4.9" fill="#f46a00" fill-opacity="0.72" stroke="#b84f00" stroke-opacity="0.6" stroke-width="0.8"/><circle cx="450.0" cy="336.5" r="4.9" fill="#f46a00" fill-opacity="0.72" stroke="#b84f00" stroke-opacity="0.6" stroke-width="0.8"/><circle cx="551.8" cy="583.9" r="4.9" fill="#f46a00" fill-opacity="0.72" stroke="#b84f00" stroke-opacity="0.6" stroke-width="0.8"/><circle cx="504.6" cy="372.6" r="4.9" fill="#0a6fe0" fill-opacity="0.72" stroke="#0046a8" stroke-opacity="0.6" stroke-width="0.8"/><circle cx="616.1" cy="471.2" r="4.9" fill="#2e2e2e" fill-opacity="0.72" stroke="#000" stroke-opacity="0.6" stroke-width="0.8"/><circle cx="366.8" cy="606.9" r="4.9" fill="#f46a00" fill-opacity="0.72" stroke="#b84f00" stroke-opacity="0.6" stroke-width="0.8"/><circle cx="377.6" cy="542.8" r="4.9" fill="#0a6fe0" fill-opacity="0.72" stroke="#0046a8" stroke-opacity="0.6" stroke-width="0.8"/><circle cx="376.0" cy="602.5" r="4.9" fill="#f46a00" fill-opacity="0.72" stroke="#b84f00" stroke-opacity="0.6" stroke-width="0.8"/><circle cx="657.2" cy="477.5" r="4.9" fill="#f46a00" fill-opacity="0.72" stroke="#b84f00" stroke-opacity="0.6" stroke-width="0.8"/></svg>
<div class="a" style="left:26px;top:171px;width:168px;height:40px;background:#fff;box-shadow:0 1px 4px rgba(0,0,0,.3);border-radius:2px"></div>
<div class="a" style="left:95px;top:171px;width:1px;height:40px;background:#e6e6e6"></div>
<div class="lbl" style="left:42px;top:181.5px;font-size:18.2px;font-weight:bold;color:#000;transform:scaleX(0.99)">Plan</div>
<div class="lbl" style="left:111.5px;top:181.5px;font-size:18.2px;color:#565656;transform:scaleX(1.06)">Satellite</div>
<div class="a" style="left:928px;top:171px;width:40px;height:40px;background:#fff;box-shadow:0 1px 4px rgba(0,0,0,.3);border-radius:2px">
<svg width="40" height="40" style="position:absolute;left:0;top:0"><path d="M12.1,17.8 V12.1 H17.8 M22.2,12.1 H27.9 V17.8 M27.9,22.2 V27.9 H22.2 M17.8,27.9 H12.1 V22.2" fill="none" stroke="#5f5f5f" stroke-width="2.2"/></svg></div>
<div class="a" style="left:928px;top:583px;width:40px;height:40px;background:#fff;box-shadow:0 1px 4px rgba(0,0,0,.3);border-radius:2px">
<svg width="40" height="40" style="position:absolute;left:0;top:0">
<path d="M14.5,16.5 Q15,15.3 16.5,15.3 H22.7 Q24.2,15.3 24.7,16.5 L27.6,25.5 Q27.8,26.5 26.8,26.5 L24.6,22 V34 H20 V27.5 H19.2 V34 H14.6 V22 L12.4,26.5 Q11.4,26.5 11.6,25.5 Z" fill="#fbbc0a" stroke="#8d6a1e" stroke-width="0.7" stroke-linejoin="round"/>
<circle cx="19.6" cy="10.1" r="5.3" fill="#fbbc0a" stroke="#8d6a1e" stroke-width="0.7"/>
<path d="M16.5,15.6 L19.6,20.5 L22.7,15.6 Z" fill="#e8711a"/>
</svg></div>
<div class="a" style="left:928px;top:655.5px;width:40px;height:80px;background:#fff;box-shadow:0 1px 4px rgba(0,0,0,.3);border-radius:2px">
<div class="a" style="left:6px;top:39.5px;width:28px;height:1px;background:#e6e6e6"></div>
<svg width="40" height="80" style="position:absolute;left:0;top:0"><path d="M11.8,19.5 H28.2 M20,11.3 V27.7" stroke="#555" stroke-width="2.8"/><path d="M11.8,60 H28.2" stroke="#555" stroke-width="2.8"/></svg></div>
<svg class="a" style="left:22px;top:734px" width="66" height="26"><text x="3" y="18.5" font-family="Liberation Sans" font-weight="bold" font-size="18" fill="#fff" stroke="#a8a8a8" stroke-width="2.2" paint-order="stroke" textLength="58" lengthAdjust="spacingAndGlyphs">Google</text></svg>
<div class="a" style="left:226px;top:748px;width:752px;height:12px;background:rgba(245,245,245,0.75)"></div>
<svg class="a" style="left:231px;top:748px" width="82.0" height="12"><text x="0" y="9.8" font-family="Liberation Sans" font-size="10" fill="#222" textLength="80.0" lengthAdjust="spacingAndGlyphs">Raccourcis clavier</text></svg>
<svg class="a" style="left:323.5px;top:748px" width="279.9" height="12"><text x="0" y="9.8" font-family="Liberation Sans" font-size="10" fill="#222" textLength="277.9" lengthAdjust="spacingAndGlyphs">Données cartographiques ©2025 Google, Inst. Geogr. Nacional</text></svg>
<svg class="a" style="left:613.6px;top:748px" width="29.4" height="12"><text x="0" y="9.8" font-family="Liberation Sans" font-size="10" fill="#222" textLength="27.4" lengthAdjust="spacingAndGlyphs">10 km</text></svg>
<svg class="a" style="left:705.6px;top:748px" width="103.1" height="12"><text x="0" y="9.8" font-family="Liberation Sans" font-size="10" fill="#222" textLength="101.1" lengthAdjust="spacingAndGlyphs">Conditions d'utilisation</text></svg>
<svg class="a" style="left:818.9px;top:748px" width="155.3" height="12"><text x="0" y="9.8" font-family="Liberation Sans" font-size="10" fill="#222" textLength="153.3" lengthAdjust="spacingAndGlyphs">Signaler une erreur cartographique</text></svg>
<div class="a" style="left:644px;top:751.5px;width:47px;height:5px;border:2px solid #222;border-top:none"></div>
<div class="lbl" style="left:34.3px;top:781px;font-size:14px;font-weight:bold;color:#000;transform:scaleX(0.95)">Temps de marche max en min</div>
<div class="a" style="left:238.7px;top:782px;width:14px;height:14px;border-radius:50%;background:#000"></div>
<div class="lbl" style="left:257.4px;top:781.5px;font-size:14.5px;color:#111">0</div>
<div class="a" style="left:276.4px;top:782px;width:14px;height:14px;border-radius:50%;background:#0072f0"></div>
<div class="lbl" style="left:294.7px;top:781.5px;font-size:14.5px;color:#111">10</div>
<div class="a" style="left:321px;top:782px;width:14px;height:14px;border-radius:50%;background:#e8578a"></div>
<div class="lbl" style="left:338.8px;top:781.5px;font-size:14.5px;color:#111">30</div>
<div class="a" style="left:365.6px;top:782px;width:14px;height:14px;border-radius:50%;background:#f66d00"></div>
<div class="lbl" style="left:384px;top:781.5px;font-size:14.5px;color:#111">20</div>
</body></html>
